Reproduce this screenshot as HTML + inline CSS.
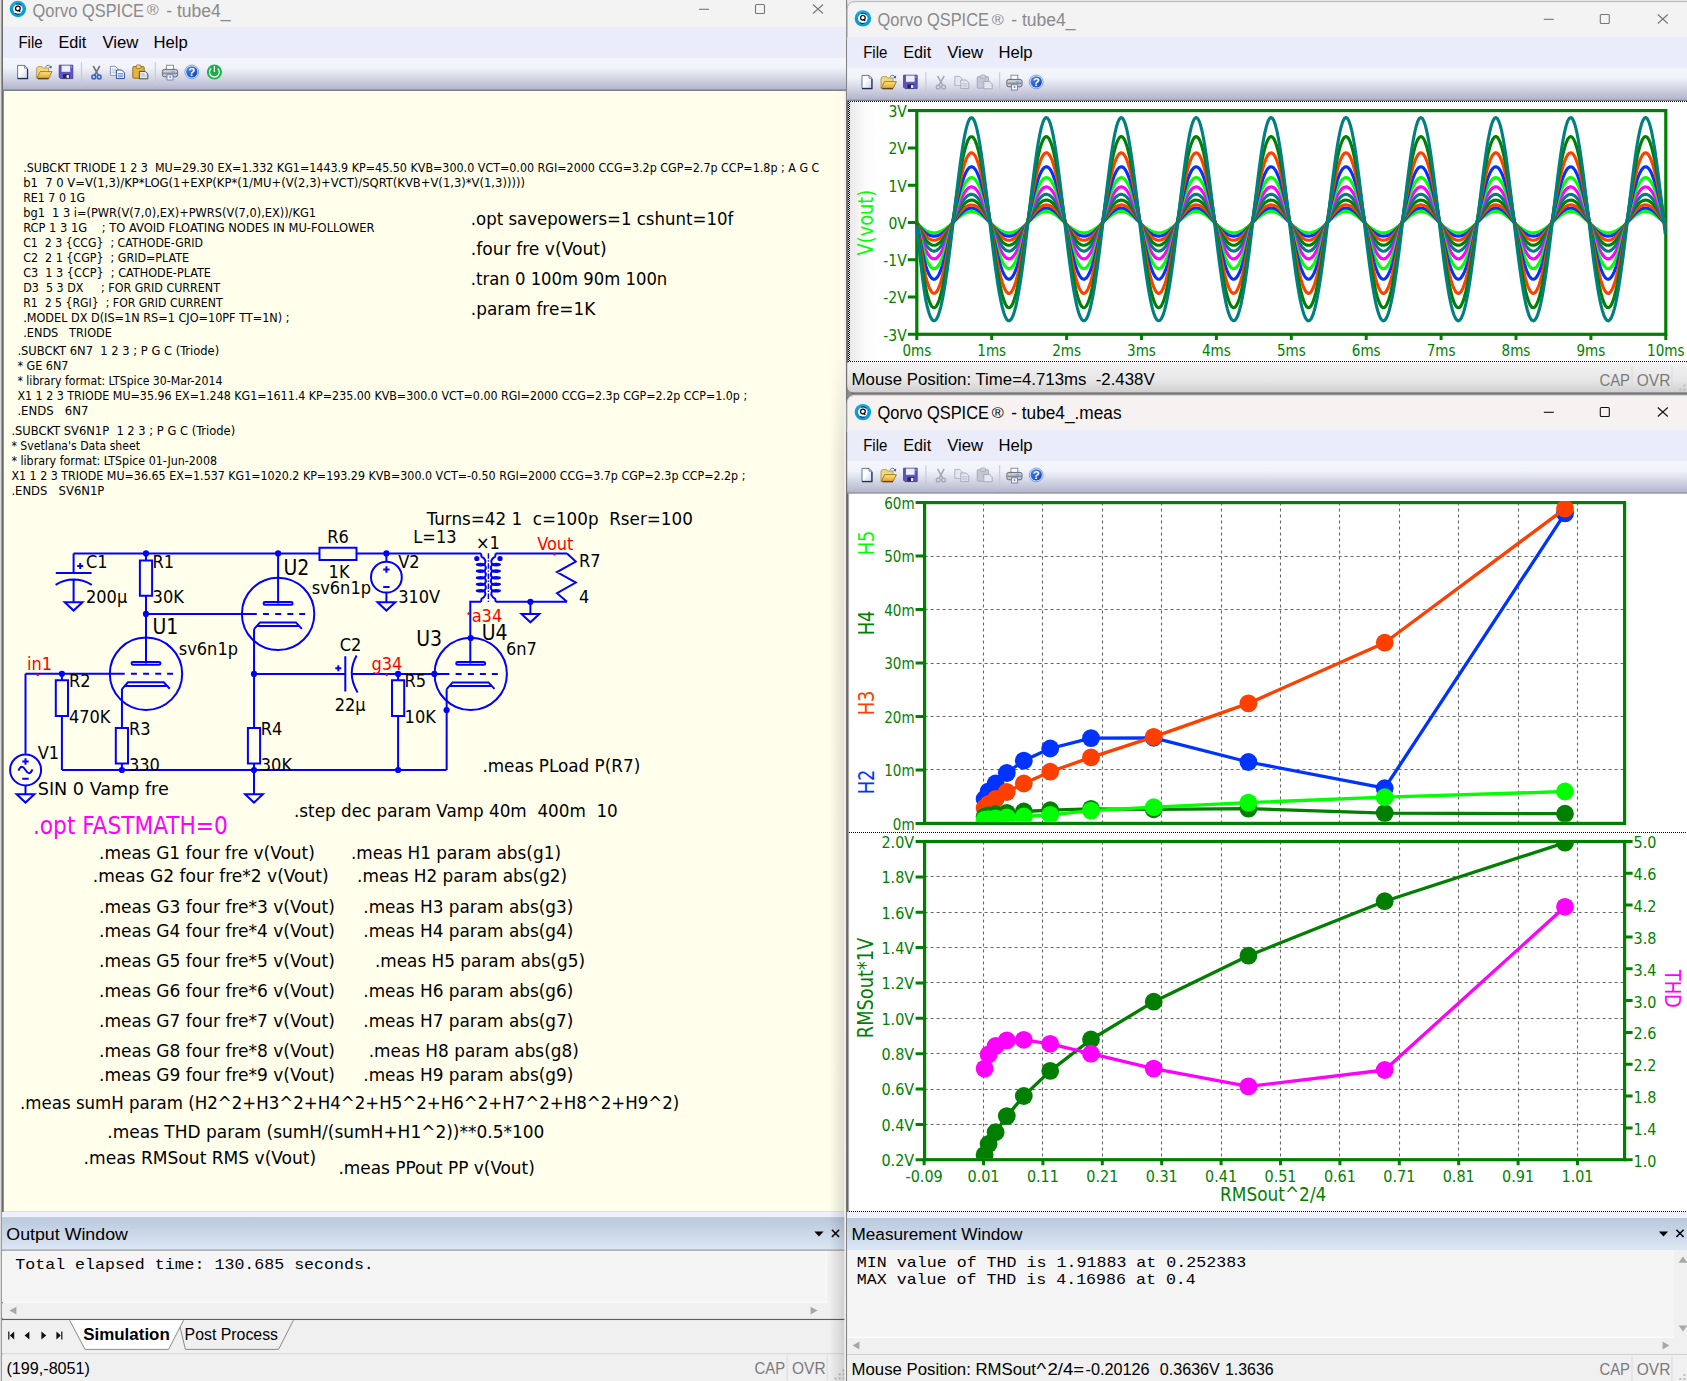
<!DOCTYPE html>
<html><head><meta charset="utf-8"><title>Qorvo QSPICE - tube4_</title>
<style>
html,body{margin:0;padding:0;background:#f0f0f0;overflow:hidden}
svg{display:block}
.t{font-family:"DejaVu Sans Condensed","DejaVu Sans","Liberation Sans",sans-serif}
.s{font-family:"Liberation Sans","DejaVu Sans",sans-serif}
.m{font-family:"Liberation Mono","DejaVu Sans Mono",monospace}
text{white-space:pre}
</style></head><body>
<svg width="1687" height="1381" viewBox="0 0 1687 1381">
<defs>
<linearGradient id="tb" x1="0" y1="0" x2="0" y2="1">
<stop offset="0" stop-color="#f4f6fc"/><stop offset="0.3" stop-color="#f1f3fa"/><stop offset="0.62" stop-color="#d5d7e6"/><stop offset="1" stop-color="#b1b3cb"/>
</linearGradient>
<linearGradient id="hd" x1="0" y1="0" x2="0" y2="1">
<stop offset="0" stop-color="#bac8dc"/><stop offset="1" stop-color="#dce7f5"/>
</linearGradient>
<linearGradient id="sb" x1="0" y1="0" x2="0" y2="1">
<stop offset="0" stop-color="#f2f2f2"/><stop offset="0.6" stop-color="#e6e6e6"/><stop offset="1" stop-color="#cfcfcf"/>
</linearGradient>
<linearGradient id="shd" x1="0" y1="0" x2="1" y2="0">
<stop offset="0" stop-color="#000" stop-opacity="0"/><stop offset="1" stop-color="#000" stop-opacity="0.16"/>
</linearGradient>
<linearGradient id="shv" gradientUnits="userSpaceOnUse" x1="0" y1="91" x2="0" y2="1381">
<stop offset="0" stop-color="#fff" stop-opacity="0.1"/><stop offset="0.2" stop-color="#fff" stop-opacity="0.12"/><stop offset="0.28" stop-color="#fff" stop-opacity="0.7"/><stop offset="1" stop-color="#fff" stop-opacity="0.8"/>
</linearGradient>
<linearGradient id="lsh" x1="0" y1="0" x2="1" y2="0">
<stop offset="0" stop-color="#000" stop-opacity="0.085"/><stop offset="0.5" stop-color="#000" stop-opacity="0.02"/><stop offset="1" stop-color="#000" stop-opacity="0"/>
</linearGradient>
<linearGradient id="qg" x1="0" y1="0" x2="0" y2="1">
<stop offset="0" stop-color="#10aeea"/><stop offset="0.6" stop-color="#069ad8"/><stop offset="1" stop-color="#0a9fe0"/>
</linearGradient>
<linearGradient id="fold" x1="0" y1="0" x2="0" y2="1">
<stop offset="0" stop-color="#fbe48a"/><stop offset="1" stop-color="#e9a21c"/>
</linearGradient>
<linearGradient id="doc" x1="0" y1="0" x2="1" y2="1">
<stop offset="0.4" stop-color="#fff"/><stop offset="1" stop-color="#c9d2e6"/>
</linearGradient>
<linearGradient id="hlp" x1="0" y1="0" x2="1" y2="1">
<stop offset="0" stop-color="#4b8cf0"/><stop offset="1" stop-color="#0b3ab4"/>
</linearGradient>
</defs>
<rect width="1687" height="1381" fill="#f0f0f0"/>
<rect x="0" y="0" width="847" height="1381" fill="#f0f0f0"/>
<rect x="0" y="0" width="1" height="1381" fill="#dcdcdc"/><rect x="1" y="0" width="1" height="1381" fill="#9a9a9a"/><rect x="2" y="0" width="1" height="1381" fill="#6e6e6e"/>
<rect x="3" y="0" width="843" height="27" fill="#f3f3f3"/>
<rect x="3" y="27" width="843" height="31" fill="#eaecfa"/>
<rect x="3" y="58" width="843" height="32" fill="url(#tb)"/>
<rect x="2" y="89.5" width="844" height="1.5" fill="#7f7f86"/>
<rect x="4" y="91" width="841" height="1120.2" fill="#ffffec"/>
<rect x="3" y="1211.2" width="843" height="1" fill="#dcdcdc"/>
<rect x="3" y="91" width="1" height="1121" fill="#8e8e8e"/>
<circle cx="17.9" cy="9.05" r="8.2" fill="url(#qg)"/>
<circle cx="17.80" cy="9.05" r="4.75" fill="#fff"/>
<path d="M15.97,4.28 A5.15,5.15 0 0 1 21.35,5.22" stroke="#06202c" stroke-width="1.1" fill="none" opacity="0.85"/>
<path d="M14.95,13.27 A5.15,5.15 0 0 0 19.49,13.95" stroke="#06202c" stroke-width="1.1" fill="none" opacity="0.85"/>
<circle cx="17.9" cy="8.50" r="2.35" fill="none" stroke="#000" stroke-width="1.2"/>
<path d="M18.40,10.05 L20.20,11.75" stroke="#000" stroke-width="1.2"/>
<text class="s" x="32.6" y="16.6" font-size="17.6" fill="#8a8a8a" textLength="111.4" lengthAdjust="spacingAndGlyphs" xml:space="preserve">Qorvo QSPICE</text>
<text class="s" x="146.8" y="15.4" font-size="15.5" fill="#8a8a8a" textLength="12.0" lengthAdjust="spacingAndGlyphs" xml:space="preserve">®</text>
<text class="s" x="166.2" y="16.6" font-size="17.6" fill="#8a8a8a" textLength="64.4" lengthAdjust="spacingAndGlyphs" xml:space="preserve">- tube4_</text>
<path d="M813,4.5 L823,13.5 M823,4.5 L813,13.5" stroke="#777" stroke-width="1.1" fill="none"/>
<rect x="755.5" y="4.5" width="9" height="9" rx="1" fill="none" stroke="#777" stroke-width="1.1"/>
<path d="M699,9.3 H709" stroke="#777" stroke-width="1.1"/>
<text class="s" x="18.4" y="47.8" font-size="16.8" textLength="24.2" lengthAdjust="spacingAndGlyphs" xml:space="preserve">File</text>
<text class="s" x="58.4" y="47.8" font-size="16.8" textLength="28.0" lengthAdjust="spacingAndGlyphs" xml:space="preserve">Edit</text>
<text class="s" x="102.4" y="47.8" font-size="16.8" textLength="36.0" lengthAdjust="spacingAndGlyphs" xml:space="preserve">View</text>
<text class="s" x="153.6" y="47.8" font-size="16.8" textLength="34.2" lengthAdjust="spacingAndGlyphs" xml:space="preserve">Help</text>
<g transform="translate(0,0)">
<path d="M17.6,65.4 H24.6 L27.4,68.2 V78.3 H17.6 Z" fill="url(#doc)" stroke="#5a6788" stroke-width="0.9"/>
<path d="M24.6,65.4 V68.2 H27.4" fill="none" stroke="#5a6788" stroke-width="0.8"/>
<path d="M17.6,78.6 H27.6 V69" fill="none" stroke="#1d2c50" stroke-width="1.1"/>
<path d="M36.6,78 V68 L38,66.6 H42 L43.2,68 H48.6 V78 Z" fill="#f1d779" stroke="#a58a52" stroke-width="0.8"/>
<path d="M36.8,78.3 L40.2,71.6 H52 L48.8,78.3 Z" fill="url(#fold)" stroke="#8c6a1c" stroke-width="0.8"/>
<path d="M38,78.8 H48.6" stroke="#3a2a08" stroke-width="1"/>
<path d="M45.4,66.8 Q48.4,63.6 51,67.2" fill="none" stroke="#5572a8" stroke-width="1"/><path d="M51.8,65.4 L51.4,68.4 L48.8,67.4 Z" fill="#3a5a9a"/>
<path d="M59.2,65.2 H72.8 V78.6 H60.6 L59.2,77.2 Z" fill="#5d55c8" stroke="#3b3592" stroke-width="0.8"/>
<rect x="61.6" y="65.6" width="8.6" height="6.2" fill="#eef0f8"/>
<rect x="63" y="74.2" width="6.8" height="4.2" fill="#2a2a48"/><rect x="66.6" y="75" width="2.4" height="3" fill="#e4e4f0"/>
<rect x="71.2" y="66.4" width="0.9" height="1.2" fill="#d8d8ff"/>
<path d="M81.5,62.3 V85.7 M155.3,62.3 V85.7" stroke="#c9c9d2" stroke-width="1.1"/>
<path d="M93.2,65.8 L98.4,75.4 M99.8,65.8 L94.6,75.4" stroke="#6d7280" stroke-width="1.7" fill="none"/>
<circle cx="93.8" cy="77" r="1.9" fill="none" stroke="#2c5fd2" stroke-width="1.5"/><circle cx="99.2" cy="77" r="1.9" fill="none" stroke="#2c5fd2" stroke-width="1.5"/>
<path d="M110.4,66.4 H115.4 L117.6,68.6 V75.4 H110.4 Z" fill="#fff" stroke="#6a7ea6" stroke-width="0.8"/>
<path d="M111.6,69.2 H116 M111.6,71 H116 M111.6,72.8 H116" stroke="#8fb0e8" stroke-width="0.8"/>
<path d="M116.4,70 H121.6 L124.4,72.8 V78.6 H116.4 Z" fill="#fff" stroke="#2d4ea6" stroke-width="1"/>
<path d="M117.8,73.6 H123 M117.8,75.2 H123 M117.8,76.8 H123" stroke="#4c7be0" stroke-width="0.9"/>
<rect x="132.8" y="66.6" width="11.4" height="11.6" rx="1" fill="#e8b53a" stroke="#8a6414" stroke-width="0.9"/>
<rect x="136.2" y="65" width="4.8" height="3.4" rx="1" fill="#f3d88a" stroke="#8a6414" stroke-width="0.8"/>
<path d="M139.4,71.4 H145.2 L147.8,74 V78.8 H139.4 Z" fill="#e9edf5" stroke="#4a4a58" stroke-width="1"/>
<path d="M140.8,74 H144.6 M140.8,76 H146.4" stroke="#9aa4bc" stroke-width="0.8"/>
<rect x="166.6" y="65.2" width="6.8" height="5" fill="#fff" stroke="#6f7585" stroke-width="0.8"/>
<rect x="162.4" y="69.4" width="15.2" height="7.4" rx="2" fill="#c9cbd2" stroke="#5a5d68" stroke-width="0.9"/>
<rect x="163" y="72.6" width="14" height="1.6" fill="#8a8d98"/><rect x="171.2" y="71.4" width="3.6" height="1" fill="#4aa0ff"/>
<rect x="167" y="74.8" width="6" height="5.2" fill="#f4f7ff" stroke="#5f6fa8" stroke-width="0.8"/><rect x="169.4" y="76.4" width="1.4" height="1.4" fill="#3558d0"/>
<circle cx="191.8" cy="71.9" r="6.9" fill="#eaf1ff" stroke="#5d8ee0" stroke-width="0.8"/><circle cx="191.8" cy="71.9" r="5.7" fill="url(#hlp)"/>
<text class="s" x="191.8" y="76" font-size="11.5" font-weight="bold" fill="#fff" text-anchor="middle">?</text>
<circle cx="214.4" cy="72" r="7.6" fill="#00c846"/><circle cx="214.4" cy="72" r="6.2" fill="#22a94a"/>
<path d="M211.2,68.4 A4.9,4.9 0 1 0 217.6,68.4" fill="none" stroke="#fff" stroke-width="1.3"/><path d="M214.4,66 V72" stroke="#fff" stroke-width="1.3"/>
</g>
<rect x="2" y="1212" width="844" height="6" fill="#eef0fb"/>
<rect x="2" y="1217.2" width="844" height="32.799999999999955" fill="url(#hd)"/>
<text class="s" x="6.3" y="1240.0" font-size="16.8" textLength="121.6" lengthAdjust="spacingAndGlyphs" xml:space="preserve">Output Window</text>
<path d="M814.4,1231.6 H823.6 L819,1236.4 Z" fill="#000"/>
<path d="M831.9,1229.8 L839.1,1237 M839.1,1229.8 L831.9,1237" stroke="#000" stroke-width="1.5" fill="none"/>
<rect x="2" y="1249.6" width="844" height="1.2" fill="#8e8e8e"/>
<rect x="2" y="1250.8" width="844" height="51.4" fill="#f5f5f5"/>
<rect x="3" y="1302" width="823" height="1.2" fill="#fbfbfb"/>
<rect x="826" y="1251" width="1" height="52" fill="#fafafa"/>
<rect x="827" y="1251" width="19" height="68" fill="#f0f0f0"/>
<rect x="2" y="1303.2" width="844" height="15" fill="#f0f0f0"/>
<text class="m" x="15.3" y="1268.9" font-size="14.4" textLength="358.5" lengthAdjust="spacingAndGlyphs" xml:space="preserve">Total elapsed time: 130.685 seconds.</text>
<path d="M16.4,1306.8 V1314.4 L9.4,1310.6 Z M810.6,1306.8 V1314.4 L817.6,1310.6 Z" fill="#a8a8a8"/>
<rect x="2" y="1318.9" width="844" height="1.3" fill="#5e5e5e"/>
<rect x="2" y="1320.2" width="844" height="33.4" fill="#f0f0f0"/>
<g fill="#111" stroke="none"><path d="M8.2,1331.6 H9.4 V1339.4 H8.2 Z M14.2,1331.6 V1339.4 L9.8,1335.5 Z"/><path d="M29.4,1331.6 V1339.4 L24.6,1335.5 Z"/><path d="M41.4,1331.6 V1339.4 L46.2,1335.5 Z"/><path d="M56.4,1331.6 V1339.4 L60.8,1335.5 Z M61.2,1331.6 H62.4 V1339.4 H61.2 Z"/></g>
<path d="M178.4,1320.2 L185.4,1349.4 H278.6 L293.4,1320.2" fill="#f0f0f0" stroke="#8a8a8a" stroke-width="1"/>
<path d="M69.6,1320.2 L85,1349.4 H168.6 L183.6,1320.2 Z" fill="#fff"/>
<path d="M69.6,1320.2 L85,1349.4 H168.6 L183.6,1320.2" fill="none" stroke="#8a8a8a" stroke-width="1"/>
<text class="s" x="83.2" y="1340.0" font-size="16.8" textLength="86.6" lengthAdjust="spacingAndGlyphs" font-weight="bold" xml:space="preserve">Simulation</text>
<text class="s" x="184.6" y="1340.0" font-size="16.8" textLength="93.4" lengthAdjust="spacingAndGlyphs" xml:space="preserve">Post Process</text>
<rect x="2" y="1353.4" width="844" height="1" fill="#d0d0d0"/>
<rect x="2" y="1354.4" width="844" height="26.6" fill="#f0f0f0"/>
<text class="s" x="6.4" y="1374.0" font-size="16.8" textLength="83.6" lengthAdjust="spacingAndGlyphs" xml:space="preserve">(199,-8051)</text>
<text class="s" x="754.6" y="1374.4" font-size="16.8" fill="#7a7a7a" textLength="30.6" lengthAdjust="spacingAndGlyphs" xml:space="preserve">CAP</text>
<text class="s" x="792.0" y="1374.4" font-size="16.8" fill="#7a7a7a" textLength="33.6" lengthAdjust="spacingAndGlyphs" xml:space="preserve">OVR</text>
<path d="M787.2,1355.4 V1380.4 M827.2,1355.4 V1380.4" stroke="#d9d9d9" stroke-width="1"/>
<g fill="#bdbdbd"><rect x="842.6" y="1377.4" width="2" height="2"/><rect x="838.6" y="1377.4" width="2" height="2"/><rect x="834.6" y="1377.4" width="2" height="2"/><rect x="842.6" y="1373.4" width="2" height="2"/><rect x="838.6" y="1373.4" width="2" height="2"/><rect x="842.6" y="1369.4" width="2" height="2"/></g>
<mask id="shm"><rect x="829" y="91" width="16" height="1290" fill="url(#shv)"/></mask>
<rect x="829" y="91" width="15.4" height="1290" fill="url(#shd)" mask="url(#shm)"/>
<rect x="844.4" y="91" width="1.8" height="1290" fill="#ececec"/>
<rect x="846.1" y="0" width="1.2" height="1381" fill="#777"/>
<rect x="846.4" y="100" width="1.8" height="1112" fill="#6a6a6a"/>
<rect x="847.2" y="0" width="839.8" height="3" fill="#e6e6e6"/>
<path d="M847.2,40 V9.6 Q847.2,1.6 855.2,1.6 H1687 V40 Z" fill="#f3f3f3"/>
<path d="M847.2,40 V9.6 Q847.2,1.6 855.2,1.6 H1687" fill="none" stroke="#b4b4b4" stroke-width="1"/>
<rect x="847.2" y="37" width="839.8" height="31" fill="#eaecfa"/>
<rect x="847.2" y="68" width="839.8" height="32" fill="url(#tb)"/>
<rect x="847.2" y="99.7" width="839.8" height="1.3" fill="#85858c"/>
<rect x="848.6" y="101" width="839.8" height="261.2" fill="#fff"/>
<path d="M848,101.5 H1687 M848,361.5 H1687" stroke="#000" stroke-width="1" stroke-dasharray="1 1"/>
<path d="M848.5,101 V362 M849.5,102 V362" stroke="#000" stroke-width="1" stroke-dasharray="1 1"/>
<rect x="847.2" y="380" width="839.8" height="24" fill="#8c8c8c"/>
<path d="M847.2,362.8 H1687 V392.6 H854.2 Q847.2,392.6 847.2,385.6 Z" fill="url(#sb)"/>
<rect x="851.2" y="392.6" width="839.8" height="1.2" fill="#6e6e6e"/>
<circle cx="862.9" cy="18.4" r="8.2" fill="url(#qg)"/>
<circle cx="862.80" cy="18.4" r="4.75" fill="#fff"/>
<path d="M860.97,13.63 A5.15,5.15 0 0 1 866.35,14.57" stroke="#06202c" stroke-width="1.1" fill="none" opacity="0.85"/>
<path d="M859.95,22.62 A5.15,5.15 0 0 0 864.49,23.30" stroke="#06202c" stroke-width="1.1" fill="none" opacity="0.85"/>
<circle cx="862.9" cy="17.85" r="2.35" fill="none" stroke="#000" stroke-width="1.2"/>
<path d="M863.40,19.40 L865.20,21.10" stroke="#000" stroke-width="1.2"/>
<text class="s" x="877.6" y="26.0" font-size="17.6" fill="#8a8a8a" textLength="111.4" lengthAdjust="spacingAndGlyphs" xml:space="preserve">Qorvo QSPICE</text>
<text class="s" x="991.8" y="24.8" font-size="15.5" fill="#8a8a8a" textLength="12.0" lengthAdjust="spacingAndGlyphs" xml:space="preserve">®</text>
<text class="s" x="1011.2" y="26.0" font-size="17.6" fill="#8a8a8a" textLength="64.4" lengthAdjust="spacingAndGlyphs" xml:space="preserve">- tube4_</text>
<path d="M1657.8,14.5 L1667.8,23.5 M1667.8,14.5 L1657.8,23.5" stroke="#777" stroke-width="1.1" fill="none"/>
<rect x="1600.3" y="14.5" width="9" height="9" rx="1" fill="none" stroke="#777" stroke-width="1.1"/>
<path d="M1543.8,19.3 H1553.8" stroke="#777" stroke-width="1.1"/>
<text class="s" x="863.2" y="57.5" font-size="16.8" textLength="24.2" lengthAdjust="spacingAndGlyphs" xml:space="preserve">File</text>
<text class="s" x="903.2" y="57.5" font-size="16.8" textLength="28.0" lengthAdjust="spacingAndGlyphs" xml:space="preserve">Edit</text>
<text class="s" x="947.2" y="57.5" font-size="16.8" textLength="36.0" lengthAdjust="spacingAndGlyphs" xml:space="preserve">View</text>
<text class="s" x="998.4" y="57.5" font-size="16.8" textLength="34.2" lengthAdjust="spacingAndGlyphs" xml:space="preserve">Help</text>
<g transform="translate(844.4,10)">
<path d="M17.6,65.4 H24.6 L27.4,68.2 V78.3 H17.6 Z" fill="url(#doc)" stroke="#5a6788" stroke-width="0.9"/>
<path d="M24.6,65.4 V68.2 H27.4" fill="none" stroke="#5a6788" stroke-width="0.8"/>
<path d="M17.6,78.6 H27.6 V69" fill="none" stroke="#1d2c50" stroke-width="1.1"/>
<path d="M36.6,78 V68 L38,66.6 H42 L43.2,68 H48.6 V78 Z" fill="#f1d779" stroke="#a58a52" stroke-width="0.8"/>
<path d="M36.8,78.3 L40.2,71.6 H52 L48.8,78.3 Z" fill="url(#fold)" stroke="#8c6a1c" stroke-width="0.8"/>
<path d="M38,78.8 H48.6" stroke="#3a2a08" stroke-width="1"/>
<path d="M45.4,66.8 Q48.4,63.6 51,67.2" fill="none" stroke="#5572a8" stroke-width="1"/><path d="M51.8,65.4 L51.4,68.4 L48.8,67.4 Z" fill="#3a5a9a"/>
<path d="M59.2,65.2 H72.8 V78.6 H60.6 L59.2,77.2 Z" fill="#5d55c8" stroke="#3b3592" stroke-width="0.8"/>
<rect x="61.6" y="65.6" width="8.6" height="6.2" fill="#eef0f8"/>
<rect x="63" y="74.2" width="6.8" height="4.2" fill="#2a2a48"/><rect x="66.6" y="75" width="2.4" height="3" fill="#e4e4f0"/>
<rect x="71.2" y="66.4" width="0.9" height="1.2" fill="#d8d8ff"/>
<path d="M81.5,62.3 V85.7 M155.3,62.3 V85.7" stroke="#c9c9d2" stroke-width="1.1"/>
<path d="M93.2,65.8 L98.4,75.4 M99.8,65.8 L94.6,75.4" stroke="#a3a6b8" stroke-width="1.5" fill="none"/>
<circle cx="93.8" cy="77" r="1.9" fill="none" stroke="#a3a6b8" stroke-width="1.3"/><circle cx="99.2" cy="77" r="1.9" fill="none" stroke="#a3a6b8" stroke-width="1.3"/>
<path d="M110.4,66.4 H115.4 L117.6,68.6 V75.4 H110.4 Z" fill="#e4e6f0" stroke="#a3a6b8" stroke-width="0.8"/>
<path d="M116.4,70 H121.6 L124.4,72.8 V78.6 H116.4 Z" fill="#e4e6f0" stroke="#a3a6b8" stroke-width="0.9"/>
<path d="M117.8,73.6 H123 M117.8,75.2 H123 M117.8,76.8 H123" stroke="#b9bccb" stroke-width="0.8"/>
<rect x="132.8" y="66.6" width="11.4" height="11.6" rx="1" fill="#c4c6d4" stroke="#a3a6b8" stroke-width="0.9"/>
<rect x="136.2" y="65" width="4.8" height="3.4" rx="1" fill="#d0d2de" stroke="#a3a6b8" stroke-width="0.8"/>
<path d="M139.4,71.4 H145.2 L147.8,74 V78.8 H139.4 Z" fill="#e4e6f0" stroke="#a3a6b8" stroke-width="0.9"/>
<rect x="166.6" y="65.2" width="6.8" height="5" fill="#fff" stroke="#6f7585" stroke-width="0.8"/>
<rect x="162.4" y="69.4" width="15.2" height="7.4" rx="2" fill="#c9cbd2" stroke="#5a5d68" stroke-width="0.9"/>
<rect x="163" y="72.6" width="14" height="1.6" fill="#8a8d98"/><rect x="171.2" y="71.4" width="3.6" height="1" fill="#4aa0ff"/>
<rect x="167" y="74.8" width="6" height="5.2" fill="#f4f7ff" stroke="#5f6fa8" stroke-width="0.8"/><rect x="169.4" y="76.4" width="1.4" height="1.4" fill="#3558d0"/>
<circle cx="191.8" cy="71.9" r="6.9" fill="#eaf1ff" stroke="#5d8ee0" stroke-width="0.8"/><circle cx="191.8" cy="71.9" r="5.7" fill="url(#hlp)"/>
<text class="s" x="191.8" y="76" font-size="11.5" font-weight="bold" fill="#fff" text-anchor="middle">?</text>
</g>
<text class="s" x="851.6" y="385.4" font-size="16.8" textLength="303.0" lengthAdjust="spacingAndGlyphs" xml:space="preserve">Mouse Position: Time=4.713ms  -2.438V</text>
<text class="s" x="1599.4" y="385.6" font-size="16.8" fill="#7a7a7a" textLength="30.6" lengthAdjust="spacingAndGlyphs" xml:space="preserve">CAP</text>
<text class="s" x="1636.8" y="385.6" font-size="16.8" fill="#7a7a7a" textLength="33.6" lengthAdjust="spacingAndGlyphs" xml:space="preserve">OVR</text>
<path d="M1632.0,366.6 V391.6 M1672.0,366.6 V391.6" stroke="#d9d9d9" stroke-width="1"/>
<g fill="#bdbdbd"><rect x="1687.4" y="388.6" width="2" height="2"/><rect x="1683.4" y="388.6" width="2" height="2"/><rect x="1679.4" y="388.6" width="2" height="2"/><rect x="1687.4" y="384.6" width="2" height="2"/><rect x="1683.4" y="384.6" width="2" height="2"/><rect x="1687.4" y="380.6" width="2" height="2"/></g>
<path d="M847.2,431.4 V403.4 Q847.2,395.4 855.2,395.4 H1687 V431.4 Z" fill="#f6f2f1"/>
<path d="M847.2,431.4 V403.4 Q847.2,395.4 855.2,395.4 H1687" fill="none" stroke="#d8d4d4" stroke-width="1"/>
<rect x="847.2" y="430" width="839.8" height="31" fill="#eaecfa"/>
<rect x="847.2" y="461" width="839.8" height="32" fill="url(#tb)"/>
<rect x="847.2" y="492.4" width="839.8" height="1.4" fill="#8c8c96"/>
<rect x="848.6" y="493.8" width="839.8" height="718" fill="#fff"/>
<rect x="848.2" y="493.8" width="0.9" height="718" fill="#9a9a9a"/>
<path d="M849,832.5 H1687 M849,1211.5 H1687" stroke="#000" stroke-width="1" stroke-dasharray="1 1"/>
<circle cx="862.9" cy="412.1" r="8.2" fill="url(#qg)"/>
<circle cx="862.80" cy="412.1" r="4.75" fill="#fff"/>
<path d="M860.97,407.33 A5.15,5.15 0 0 1 866.35,408.27" stroke="#06202c" stroke-width="1.1" fill="none" opacity="0.85"/>
<path d="M859.95,416.32 A5.15,5.15 0 0 0 864.49,417.00" stroke="#06202c" stroke-width="1.1" fill="none" opacity="0.85"/>
<circle cx="862.9" cy="411.55" r="2.35" fill="none" stroke="#000" stroke-width="1.2"/>
<path d="M863.40,413.10 L865.20,414.80" stroke="#000" stroke-width="1.2"/>
<text class="s" x="877.6" y="419.2" font-size="17.6" textLength="111.4" lengthAdjust="spacingAndGlyphs" xml:space="preserve">Qorvo QSPICE</text>
<text class="s" x="991.8" y="418.0" font-size="15.5" textLength="12.0" lengthAdjust="spacingAndGlyphs" xml:space="preserve">®</text>
<text class="s" x="1011.2" y="419.2" font-size="17.6" textLength="110.4" lengthAdjust="spacingAndGlyphs" xml:space="preserve">- tube4_.meas</text>
<path d="M1657.8,407.5 L1667.8,416.5 M1667.8,407.5 L1657.8,416.5" stroke="#111" stroke-width="1.1" fill="none"/>
<rect x="1600.3" y="407.5" width="9" height="9" rx="1" fill="none" stroke="#111" stroke-width="1.1"/>
<path d="M1543.8,412.3 H1553.8" stroke="#111" stroke-width="1.1"/>
<text class="s" x="863.2" y="450.6" font-size="16.8" textLength="24.2" lengthAdjust="spacingAndGlyphs" xml:space="preserve">File</text>
<text class="s" x="903.2" y="450.6" font-size="16.8" textLength="28.0" lengthAdjust="spacingAndGlyphs" xml:space="preserve">Edit</text>
<text class="s" x="947.2" y="450.6" font-size="16.8" textLength="36.0" lengthAdjust="spacingAndGlyphs" xml:space="preserve">View</text>
<text class="s" x="998.4" y="450.6" font-size="16.8" textLength="34.2" lengthAdjust="spacingAndGlyphs" xml:space="preserve">Help</text>
<g transform="translate(844.4,403)">
<path d="M17.6,65.4 H24.6 L27.4,68.2 V78.3 H17.6 Z" fill="url(#doc)" stroke="#5a6788" stroke-width="0.9"/>
<path d="M24.6,65.4 V68.2 H27.4" fill="none" stroke="#5a6788" stroke-width="0.8"/>
<path d="M17.6,78.6 H27.6 V69" fill="none" stroke="#1d2c50" stroke-width="1.1"/>
<path d="M36.6,78 V68 L38,66.6 H42 L43.2,68 H48.6 V78 Z" fill="#f1d779" stroke="#a58a52" stroke-width="0.8"/>
<path d="M36.8,78.3 L40.2,71.6 H52 L48.8,78.3 Z" fill="url(#fold)" stroke="#8c6a1c" stroke-width="0.8"/>
<path d="M38,78.8 H48.6" stroke="#3a2a08" stroke-width="1"/>
<path d="M45.4,66.8 Q48.4,63.6 51,67.2" fill="none" stroke="#5572a8" stroke-width="1"/><path d="M51.8,65.4 L51.4,68.4 L48.8,67.4 Z" fill="#3a5a9a"/>
<path d="M59.2,65.2 H72.8 V78.6 H60.6 L59.2,77.2 Z" fill="#5d55c8" stroke="#3b3592" stroke-width="0.8"/>
<rect x="61.6" y="65.6" width="8.6" height="6.2" fill="#eef0f8"/>
<rect x="63" y="74.2" width="6.8" height="4.2" fill="#2a2a48"/><rect x="66.6" y="75" width="2.4" height="3" fill="#e4e4f0"/>
<rect x="71.2" y="66.4" width="0.9" height="1.2" fill="#d8d8ff"/>
<path d="M81.5,62.3 V85.7 M155.3,62.3 V85.7" stroke="#c9c9d2" stroke-width="1.1"/>
<path d="M93.2,65.8 L98.4,75.4 M99.8,65.8 L94.6,75.4" stroke="#a3a6b8" stroke-width="1.5" fill="none"/>
<circle cx="93.8" cy="77" r="1.9" fill="none" stroke="#a3a6b8" stroke-width="1.3"/><circle cx="99.2" cy="77" r="1.9" fill="none" stroke="#a3a6b8" stroke-width="1.3"/>
<path d="M110.4,66.4 H115.4 L117.6,68.6 V75.4 H110.4 Z" fill="#e4e6f0" stroke="#a3a6b8" stroke-width="0.8"/>
<path d="M116.4,70 H121.6 L124.4,72.8 V78.6 H116.4 Z" fill="#e4e6f0" stroke="#a3a6b8" stroke-width="0.9"/>
<path d="M117.8,73.6 H123 M117.8,75.2 H123 M117.8,76.8 H123" stroke="#b9bccb" stroke-width="0.8"/>
<rect x="132.8" y="66.6" width="11.4" height="11.6" rx="1" fill="#c4c6d4" stroke="#a3a6b8" stroke-width="0.9"/>
<rect x="136.2" y="65" width="4.8" height="3.4" rx="1" fill="#d0d2de" stroke="#a3a6b8" stroke-width="0.8"/>
<path d="M139.4,71.4 H145.2 L147.8,74 V78.8 H139.4 Z" fill="#e4e6f0" stroke="#a3a6b8" stroke-width="0.9"/>
<rect x="166.6" y="65.2" width="6.8" height="5" fill="#fff" stroke="#6f7585" stroke-width="0.8"/>
<rect x="162.4" y="69.4" width="15.2" height="7.4" rx="2" fill="#c9cbd2" stroke="#5a5d68" stroke-width="0.9"/>
<rect x="163" y="72.6" width="14" height="1.6" fill="#8a8d98"/><rect x="171.2" y="71.4" width="3.6" height="1" fill="#4aa0ff"/>
<rect x="167" y="74.8" width="6" height="5.2" fill="#f4f7ff" stroke="#5f6fa8" stroke-width="0.8"/><rect x="169.4" y="76.4" width="1.4" height="1.4" fill="#3558d0"/>
<circle cx="191.8" cy="71.9" r="6.9" fill="#eaf1ff" stroke="#5d8ee0" stroke-width="0.8"/><circle cx="191.8" cy="71.9" r="5.7" fill="url(#hlp)"/>
<text class="s" x="191.8" y="76" font-size="11.5" font-weight="bold" fill="#fff" text-anchor="middle">?</text>
</g>
<rect x="847.2" y="1212" width="843.3" height="6" fill="#eef0fb"/>
<rect x="847.2" y="1218" width="843.3" height="32" fill="url(#hd)"/>
<text class="s" x="851.5" y="1240.0" font-size="16.8" textLength="170.8" lengthAdjust="spacingAndGlyphs" xml:space="preserve">Measurement Window</text>
<path d="M1658.9,1231.6 H1668.1 L1663.5,1236.4 Z" fill="#000"/>
<path d="M1676.4,1229.8 L1683.6,1237 M1683.6,1229.8 L1676.4,1237" stroke="#000" stroke-width="1.5" fill="none"/>
<rect x="847.2" y="1250" width="839.8" height="87" fill="#f5f5f5"/>
<rect x="847.2" y="1336.8" width="826" height="1.2" fill="#fcfcfc"/>
<rect x="1674" y="1250" width="13" height="87" fill="#f0f0f0"/>
<rect x="847.2" y="1338" width="839.8" height="16" fill="#f0f0f0"/>
<text class="m" x="856.8" y="1267.3" font-size="14.4" textLength="389.4" lengthAdjust="spacingAndGlyphs" xml:space="preserve">MIN value of THD is 1.91883 at 0.252383</text>
<text class="m" x="856.8" y="1284.4" font-size="14.4" textLength="339.0" lengthAdjust="spacingAndGlyphs" xml:space="preserve">MAX value of THD is 4.16986 at 0.4</text>
<path d="M859.4,1341.4 V1349.4 L852.6,1345.4 Z M1662.6,1341.4 V1349.4 L1669.4,1345.4 Z" fill="#a8a8a8"/>
<path d="M1678.6,1262.8 H1687.4 L1683,1256.6 Z M1678.6,1325.4 H1687.4 L1683,1331.6 Z" fill="#a8a8a8"/>
<rect x="847.2" y="1354" width="839.8" height="1" fill="#d0d0d0"/>
<rect x="847.2" y="1355" width="839.8" height="26" fill="#f0f0f0"/>
<text class="s" x="851.6" y="1374.8" font-size="16.8" textLength="184.4" lengthAdjust="spacingAndGlyphs" xml:space="preserve">Mouse Position: RMSout</text>
<text class="s" x="1036.6" y="1374.8" font-size="16.8" textLength="9.6" lengthAdjust="spacingAndGlyphs" xml:space="preserve">^</text>
<text class="s" x="1047.4" y="1374.8" font-size="16.8" textLength="36.8" lengthAdjust="spacingAndGlyphs" xml:space="preserve">2/4=</text>
<text class="s" x="1085.6" y="1374.8" font-size="16.8" textLength="64.0" lengthAdjust="spacingAndGlyphs" xml:space="preserve">-0.20126</text>
<text class="s" x="1159.8" y="1374.8" font-size="16.8" textLength="60.0" lengthAdjust="spacingAndGlyphs" xml:space="preserve">0.3636V</text>
<text class="s" x="1225.0" y="1374.8" font-size="16.8" textLength="48.6" lengthAdjust="spacingAndGlyphs" xml:space="preserve">1.3636</text>
<text class="s" x="1599.4" y="1375.0" font-size="16.8" fill="#7a7a7a" textLength="30.6" lengthAdjust="spacingAndGlyphs" xml:space="preserve">CAP</text>
<text class="s" x="1636.8" y="1375.0" font-size="16.8" fill="#7a7a7a" textLength="33.6" lengthAdjust="spacingAndGlyphs" xml:space="preserve">OVR</text>
<path d="M1632.0,1356 V1381 M1672.0,1356 V1381" stroke="#d9d9d9" stroke-width="1"/>
<g fill="#bdbdbd"><rect x="1687.4" y="1378" width="2" height="2"/><rect x="1683.4" y="1378" width="2" height="2"/><rect x="1679.4" y="1378" width="2" height="2"/><rect x="1687.4" y="1374" width="2" height="2"/><rect x="1683.4" y="1374" width="2" height="2"/><rect x="1687.4" y="1370" width="2" height="2"/></g>
<text class="t" x="23.2" y="172.2" font-size="12" textLength="796.2" lengthAdjust="spacingAndGlyphs" xml:space="preserve">.SUBCKT TRIODE 1 2 3  MU=29.30 EX=1.332 KG1=1443.9 KP=45.50 KVB=300.0 VCT=0.00 RGI=2000 CCG=3.2p CGP=2.7p CCP=1.8p ; A G C</text>
<text class="t" x="23.2" y="187.2" font-size="12" textLength="501.8" lengthAdjust="spacingAndGlyphs" xml:space="preserve">b1  7 0 V=V(1,3)/KP*LOG(1+EXP(KP*(1/MU+(V(2,3)+VCT)/SQRT(KVB+V(1,3)*V(1,3)))))</text>
<text class="t" x="23.2" y="202.2" font-size="12" textLength="61.8" lengthAdjust="spacingAndGlyphs" xml:space="preserve">RE1 7 0 1G</text>
<text class="t" x="23.2" y="217.2" font-size="12" textLength="292.8" lengthAdjust="spacingAndGlyphs" xml:space="preserve">bg1  1 3 i=(PWR(V(7,0),EX)+PWRS(V(7,0),EX))/KG1</text>
<text class="t" x="23.2" y="232.2" font-size="12" textLength="351.4" lengthAdjust="spacingAndGlyphs" xml:space="preserve">RCP 1 3 1G    ; TO AVOID FLOATING NODES IN MU-FOLLOWER</text>
<text class="t" x="23.2" y="247.2" font-size="12" textLength="179.8" lengthAdjust="spacingAndGlyphs" xml:space="preserve">C1  2 3 {CCG}  ; CATHODE-GRID</text>
<text class="t" x="23.2" y="262.2" font-size="12" textLength="165.8" lengthAdjust="spacingAndGlyphs" xml:space="preserve">C2  2 1 {CGP}  ; GRID=PLATE</text>
<text class="t" x="23.2" y="277.2" font-size="12" textLength="187.8" lengthAdjust="spacingAndGlyphs" xml:space="preserve">C3  1 3 {CCP}  ; CATHODE-PLATE</text>
<text class="t" x="23.2" y="292.2" font-size="12" textLength="196.8" lengthAdjust="spacingAndGlyphs" xml:space="preserve">D3  5 3 DX     ; FOR GRID CURRENT</text>
<text class="t" x="23.2" y="307.2" font-size="12" textLength="199.4" lengthAdjust="spacingAndGlyphs" xml:space="preserve">R1  2 5 {RGI}  ; FOR GRID CURRENT</text>
<text class="t" x="23.2" y="322.2" font-size="12" textLength="266.4" lengthAdjust="spacingAndGlyphs" xml:space="preserve">.MODEL DX D(IS=1N RS=1 CJO=10PF TT=1N) ;</text>
<text class="t" x="23.2" y="337.2" font-size="12" textLength="88.8" lengthAdjust="spacingAndGlyphs" xml:space="preserve">.ENDS   TRIODE</text>
<text class="t" x="17.4" y="355.2" font-size="12" textLength="201.8" lengthAdjust="spacingAndGlyphs" xml:space="preserve">.SUBCKT 6N7  1 2 3 ; P G C (Triode)</text>
<text class="t" x="17.4" y="370.2" font-size="12" textLength="51.0" lengthAdjust="spacingAndGlyphs" xml:space="preserve">* GE 6N7</text>
<text class="t" x="17.4" y="385.2" font-size="12" textLength="205.0" lengthAdjust="spacingAndGlyphs" xml:space="preserve">* library format: LTSpice 30-Mar-2014</text>
<text class="t" x="17.4" y="400.2" font-size="12" textLength="729.8" lengthAdjust="spacingAndGlyphs" xml:space="preserve">X1 1 2 3 TRIODE MU=35.96 EX=1.248 KG1=1611.4 KP=235.00 KVB=300.0 VCT=0.00 RGI=2000 CCG=2.3p CGP=2.2p CCP=1.0p ;</text>
<text class="t" x="17.4" y="415.2" font-size="12" textLength="71.0" lengthAdjust="spacingAndGlyphs" xml:space="preserve">.ENDS   6N7</text>
<text class="t" x="11.4" y="435.1" font-size="12" textLength="223.8" lengthAdjust="spacingAndGlyphs" xml:space="preserve">.SUBCKT SV6N1P  1 2 3 ; P G C (Triode)</text>
<text class="t" x="11.4" y="450.1" font-size="12" textLength="128.6" lengthAdjust="spacingAndGlyphs" xml:space="preserve">* Svetlana's Data sheet</text>
<text class="t" x="11.4" y="465.1" font-size="12" textLength="205.6" lengthAdjust="spacingAndGlyphs" xml:space="preserve">* library format: LTSpice 01-Jun-2008</text>
<text class="t" x="11.4" y="480.1" font-size="12" textLength="734.0" lengthAdjust="spacingAndGlyphs" xml:space="preserve">X1 1 2 3 TRIODE MU=36.65 EX=1.537 KG1=1020.2 KP=193.29 KVB=300.0 VCT=-0.50 RGI=2000 CCG=3.7p CGP=2.3p CCP=2.2p ;</text>
<text class="t" x="11.4" y="495.1" font-size="12" textLength="93.0" lengthAdjust="spacingAndGlyphs" xml:space="preserve">.ENDS   SV6N1P</text>
<text class="t" x="470.8" y="225.1" font-size="18.5" textLength="262.5" lengthAdjust="spacingAndGlyphs" xml:space="preserve">.opt savepowers=1 cshunt=10f</text>
<text class="t" x="470.8" y="255.1" font-size="18.5" textLength="135.9" lengthAdjust="spacingAndGlyphs" xml:space="preserve">.four fre v(Vout)</text>
<text class="t" x="470.8" y="285.2" font-size="18.5" textLength="196.5" lengthAdjust="spacingAndGlyphs" xml:space="preserve">.tran 0 100m 90m 100n</text>
<text class="t" x="470.8" y="315.1" font-size="18.5" textLength="124.5" lengthAdjust="spacingAndGlyphs" xml:space="preserve">.param fre=1K</text>
<circle cx="146" cy="673.8" r="36.2" fill="none" stroke="#0000ff" stroke-width="2"/>
<rect x="131.5" y="661.9" width="29" height="2.8" rx="1.4" fill="none" stroke="#0000ff" stroke-width="2"/>
<circle cx="25.6" cy="769.9" r="15.5" fill="none" stroke="#0000ff" stroke-width="2"/>
<circle cx="278.1" cy="613.9" r="36.2" fill="none" stroke="#0000ff" stroke-width="2"/>
<rect x="263.6" y="602.0" width="29" height="2.8" rx="1.4" fill="none" stroke="#0000ff" stroke-width="2"/>
<circle cx="470.7" cy="673.9" r="36.2" fill="none" stroke="#0000ff" stroke-width="2"/>
<rect x="456.2" y="662.0" width="29" height="2.8" rx="1.4" fill="none" stroke="#0000ff" stroke-width="2"/>
<circle cx="386.4" cy="577.2" r="15.4" fill="none" stroke="#0000ff" stroke-width="2"/>
<ellipse cx="480.6" cy="564.6" rx="3.9" ry="0.8" fill="none" stroke="#0000ff" stroke-width="2"/>
<ellipse cx="480.6" cy="571.1" rx="3.9" ry="0.8" fill="none" stroke="#0000ff" stroke-width="2"/>
<ellipse cx="480.6" cy="577.7" rx="3.9" ry="0.8" fill="none" stroke="#0000ff" stroke-width="2"/>
<ellipse cx="480.6" cy="584.2" rx="3.9" ry="0.8" fill="none" stroke="#0000ff" stroke-width="2"/>
<ellipse cx="480.6" cy="590.7" rx="3.9" ry="0.8" fill="none" stroke="#0000ff" stroke-width="2"/>
<ellipse cx="496.1" cy="564.6" rx="3.9" ry="0.8" fill="none" stroke="#0000ff" stroke-width="2"/>
<ellipse cx="496.1" cy="571.1" rx="3.9" ry="0.8" fill="none" stroke="#0000ff" stroke-width="2"/>
<ellipse cx="496.1" cy="577.7" rx="3.9" ry="0.8" fill="none" stroke="#0000ff" stroke-width="2"/>
<ellipse cx="496.1" cy="584.2" rx="3.9" ry="0.8" fill="none" stroke="#0000ff" stroke-width="2"/>
<ellipse cx="496.1" cy="590.7" rx="3.9" ry="0.8" fill="none" stroke="#0000ff" stroke-width="2"/>
<path d="M488.4,553.2 V602.4" stroke="#0000ff" stroke-width="1.4" stroke-dasharray="5.5 1.6 1.4 1.6" fill="none"/>
<circle cx="476.8" cy="558.5" r="2.6" fill="#0000ff"/>
<circle cx="500" cy="558.5" r="2.6" fill="#0000ff"/>
<path d="M73.6,553.4 H319.5 M356.5,553.4 H481 M73.6,553.4 V573 M55.8,573 H91.6 M55.6,584.8 Q73.6,574.4 91.8,584.8 M73.6,579.6 V602.2 M77.2,566 H83.2 M80.2,563 V569 M64.69999999999999,602.2 H82.5 L73.6,610.6 Z M146,553.4 V560.5 M146,595.7 V663.4 M139.9,560.5 H152.1 V595.7 H139.9 Z M109.8,673.8 H124.7 M130.9,673.8 h6 M143.1,673.8 h6 M155.2,673.8 h6 M167.1,673.8 h6 M121.95,689.0999999999999 L127.95,682.3 H163.75 L169.75,688.8 M124.6,686.0 H166.5 M25.5,673.8 H109.8 M25.5,673.8 V753.8 M121.95,689.1 V728 M115.80000000000001,728 H128.0 V763.5 H115.80000000000001 Z M121.9,763.5 V770.0 M61.9,673.8 V680.3 M61.9,716 V770.0 M55.8,680.3 H68.0 V716 H55.8 Z M61.9,770.0 H446.5 M22.3,761.5 H28.7 M25.5,758.3 V764.7 M22.3,778.8 H28.7 M18.5,770.6 Q21.5,763.4 25.5,770 T32.5,769.4 M25.5,786.1 V794.2 M16.6,794.2 H34.4 L25.5,802.6 Z M241.90000000000003,613.9 H256.8 M263.0,613.9 h6 M275.20000000000005,613.9 h6 M287.3,613.9 h6 M299.20000000000005,613.9 h6 M254.05,629.1999999999999 L260.05,622.4 H295.85 L301.85,628.9 M256.70000000000005,626.1 H298.6 M278.1,553.4 V603.4 M146,613.9 H241.9 M254.05,629.2 V728 M247.9,728 H260.1 V763.5 H247.9 Z M254,763.5 V794.2 M245.1,794.2 H262.9 L254,802.6 Z M254,673.9 H345.3 M345.3,656.2 V691.6 M356.6,655.6 Q346.4,673.9 357.6,692.4 M351.8,673.9 H434.4 M335.3,668.2 H341.3 M338.3,665.2 V671.2 M398.1,673.9 V680.3 M398.1,716 V770.0 M392.0,680.3 H404.20000000000005 V716 H392.0 Z M434.5,673.9 H449.4 M455.59999999999997,673.9 h6 M467.8,673.9 h6 M479.9,673.9 h6 M491.8,673.9 h6 M446.65,689.1999999999999 L452.65,682.4 H488.45 L494.45,688.9 M449.3,686.1 H491.2 M470.3,663.4 V601.8 H481 M446.65,689.2 V770.0 M319.5,547.8 H356.5 V559.9 H319.5 Z M386.4,553.4 V561.4 M383.2,569.5 H389.6 M386.4,566.3 V572.7 M383.2,587 H389.6 M386.4,593 V602.2 M377.5,602.2 H395.29999999999995 L386.4,610.6 Z M481.0,553.4 L481.5,556.6 Q487.29999999999995,559.6 484.4,564.6 Q487.29999999999995,567.85 484.4,571.1 Q487.29999999999995,574.40 484.4,577.7 Q487.29999999999995,580.95 484.4,584.2 Q487.29999999999995,587.45 484.4,590.7 Q487.29999999999995,595.8 481.5,598.8 L481.0,601.8 M495.7,553.4 L495.2,556.6 Q489.40000000000003,559.6 492.3,564.6 Q489.40000000000003,567.85 492.3,571.1 Q489.40000000000003,574.40 492.3,577.7 Q489.40000000000003,580.95 492.3,584.2 Q489.40000000000003,587.45 492.3,590.7 Q489.40000000000003,595.8 495.2,598.8 L495.7,601.8 M495.7,553.4 H567 M495.7,601.8 H567 M567,553.4 L575.8,561.6 L557,572 L575.8,582.6 L557,593.2 L567,601.8 M530.4,601.8 V613.9 M521.5,613.9 H539.3 L530.4,622.3 Z" fill="none" stroke="#0000ff" stroke-width="2" stroke-linejoin="miter"/>
<circle cx="146" cy="553.4" r="3.1" fill="#0000ff"/>
<circle cx="278.1" cy="553.4" r="3.1" fill="#0000ff"/>
<circle cx="386.4" cy="553.4" r="3.1" fill="#0000ff"/>
<circle cx="146" cy="613.9" r="3.1" fill="#0000ff"/>
<circle cx="61.9" cy="673.8" r="3.1" fill="#0000ff"/>
<circle cx="121.9" cy="770.0" r="3.1" fill="#0000ff"/>
<circle cx="254" cy="770.0" r="3.1" fill="#0000ff"/>
<circle cx="254" cy="673.9" r="3.1" fill="#0000ff"/>
<circle cx="398.1" cy="673.9" r="3.1" fill="#0000ff"/>
<circle cx="398.1" cy="770.0" r="3.1" fill="#0000ff"/>
<circle cx="434.4" cy="673.9" r="3.1" fill="#0000ff"/>
<circle cx="470.7" cy="638" r="3.1" fill="#0000ff"/>
<circle cx="446.6" cy="710" r="3.1" fill="#0000ff"/>
<circle cx="530.4" cy="601.8" r="3.1" fill="#0000ff"/>
<circle cx="37.7" cy="674.8" r="1.4" fill="#ff0000"/>
<circle cx="386.7" cy="674.8" r="1.4" fill="#ff0000"/>
<circle cx="468.8" cy="613.6" r="1.4" fill="#ff0000"/>
<circle cx="554.4" cy="554.2" r="1.4" fill="#ff0000"/>
<text class="t" font-size="18" transform="translate(86.0,567.5) scale(1.0,1)" xml:space="preserve">C1</text>
<text class="t" font-size="18" transform="translate(86.0,603.4) scale(1.0,1)" xml:space="preserve">200µ</text>
<text class="t" font-size="18" transform="translate(152.6,567.5) scale(1.0,1)" xml:space="preserve">R1</text>
<text class="t" font-size="18" transform="translate(152.6,603.4) scale(1.0,1)" xml:space="preserve">30K</text>
<text class="t" font-size="21" transform="translate(152.5,634.0) scale(1.0,1)" xml:space="preserve">U1</text>
<text class="t" font-size="18" transform="translate(178.8,655.2) scale(1.0,1)" xml:space="preserve">sv6n1p</text>
<text class="t" font-size="18" transform="translate(27.0,670.3) scale(1.0,1)" fill="#ff0000" xml:space="preserve">in1</text>
<text class="t" font-size="18" transform="translate(68.9,687.4) scale(1.0,1)" xml:space="preserve">R2</text>
<text class="t" font-size="18" transform="translate(68.9,723.0) scale(1.0,1)" xml:space="preserve">470K</text>
<text class="t" font-size="18" transform="translate(129.0,734.7) scale(1.0,1)" xml:space="preserve">R3</text>
<text class="t" font-size="18" transform="translate(129.0,770.6) scale(1.0,1)" xml:space="preserve">330</text>
<text class="t" font-size="18" transform="translate(37.7,759.3) scale(1.0,1)" xml:space="preserve">V1</text>
<text class="t" x="37.7" y="795.2" font-size="18" textLength="131.1" lengthAdjust="spacingAndGlyphs" xml:space="preserve">SIN 0 Vamp fre</text>
<text class="t" font-size="21" transform="translate(283.5,574.6) scale(1.0,1)" xml:space="preserve">U2</text>
<text class="t" font-size="18" transform="translate(311.8,593.7) scale(1.0,1)" xml:space="preserve">sv6n1p</text>
<text class="t" font-size="18" transform="translate(327.2,542.9) scale(1.0,1)" xml:space="preserve">R6</text>
<text class="t" font-size="18" transform="translate(328.6,578.2) scale(1.0,1)" xml:space="preserve">1K</text>
<text class="t" font-size="18" transform="translate(398.2,567.5) scale(1.0,1)" xml:space="preserve">V2</text>
<text class="t" font-size="18" transform="translate(398.2,603.4) scale(1.0,1)" xml:space="preserve">310V</text>
<text class="t" font-size="18" transform="translate(260.8,734.7) scale(1.0,1)" xml:space="preserve">R4</text>
<text class="t" font-size="18" transform="translate(260.8,770.6) scale(1.0,1)" xml:space="preserve">30K</text>
<text class="t" font-size="18" transform="translate(339.7,651.1) scale(1.0,1)" xml:space="preserve">C2</text>
<text class="t" font-size="18" transform="translate(334.7,710.5) scale(1.0,1)" xml:space="preserve">22µ</text>
<text class="t" font-size="18" transform="translate(371.5,669.7) scale(1.0,1)" fill="#ff0000" xml:space="preserve">g34</text>
<text class="t" font-size="18" transform="translate(404.6,687.4) scale(1.0,1)" xml:space="preserve">R5</text>
<text class="t" font-size="18" transform="translate(404.6,723.0) scale(1.0,1)" xml:space="preserve">10K</text>
<text class="t" font-size="21" transform="translate(416.2,645.5) scale(1.0,1)" xml:space="preserve">U3</text>
<text class="t" font-size="21" transform="translate(481.7,640.0) scale(1.0,1)" xml:space="preserve">U4</text>
<text class="t" font-size="18" transform="translate(506.0,655.2) scale(1.0,1)" xml:space="preserve">6n7</text>
<text class="t" font-size="18" transform="translate(471.7,621.5) scale(1.0,1)" fill="#ff0000" xml:space="preserve">a34</text>
<text class="t" font-size="18" transform="translate(476.0,549.4) scale(1.0,1)" xml:space="preserve">×1</text>
<text class="t" font-size="18" transform="translate(413.3,542.9) scale(1.0,1)" xml:space="preserve">L=13</text>
<text class="t" x="426.8" y="525.2" font-size="18" textLength="266.0" lengthAdjust="spacingAndGlyphs" xml:space="preserve">Turns=42 1  c=100p  Rser=100</text>
<text class="t" font-size="18" transform="translate(537.2,549.6) scale(1.0,1)" fill="#ff0000" xml:space="preserve">Vout</text>
<text class="t" font-size="18" transform="translate(579.1,566.5) scale(1.0,1)" xml:space="preserve">R7</text>
<text class="t" font-size="18" transform="translate(579.1,603.4) scale(1.0,1)" xml:space="preserve">4</text>
<text class="t" x="482.4" y="771.8" font-size="18" textLength="157.8" lengthAdjust="spacingAndGlyphs" xml:space="preserve">.meas PLoad P(R7)</text>
<text class="t" x="294.0" y="816.5" font-size="18" textLength="323.8" lengthAdjust="spacingAndGlyphs" xml:space="preserve">.step dec param Vamp 40m  400m  10</text>
<text class="t" x="32.9" y="833.6" font-size="24" fill="#ff00ff" textLength="195.0" lengthAdjust="spacingAndGlyphs" xml:space="preserve">.opt FASTMATH=0</text>
<text class="t" x="99.0" y="858.6" font-size="18" textLength="215.9" lengthAdjust="spacingAndGlyphs" xml:space="preserve">.meas G1 four fre v(Vout)</text>
<text class="t" x="350.9" y="858.6" font-size="18" textLength="210.1" lengthAdjust="spacingAndGlyphs" xml:space="preserve">.meas H1 param abs(g1)</text>
<text class="t" x="92.8" y="882.2" font-size="18" textLength="235.8" lengthAdjust="spacingAndGlyphs" xml:space="preserve">.meas G2 four fre*2 v(Vout)</text>
<text class="t" x="357.1" y="882.2" font-size="18" textLength="210.1" lengthAdjust="spacingAndGlyphs" xml:space="preserve">.meas H2 param abs(g2)</text>
<text class="t" x="99.0" y="912.6" font-size="18" textLength="235.8" lengthAdjust="spacingAndGlyphs" xml:space="preserve">.meas G3 four fre*3 v(Vout)</text>
<text class="t" x="363.3" y="912.6" font-size="18" textLength="210.1" lengthAdjust="spacingAndGlyphs" xml:space="preserve">.meas H3 param abs(g3)</text>
<text class="t" x="99.0" y="936.7" font-size="18" textLength="235.8" lengthAdjust="spacingAndGlyphs" xml:space="preserve">.meas G4 four fre*4 v(Vout)</text>
<text class="t" x="363.3" y="936.7" font-size="18" textLength="210.1" lengthAdjust="spacingAndGlyphs" xml:space="preserve">.meas H4 param abs(g4)</text>
<text class="t" x="99.0" y="966.6" font-size="18" textLength="235.8" lengthAdjust="spacingAndGlyphs" xml:space="preserve">.meas G5 four fre*5 v(Vout)</text>
<text class="t" x="374.9" y="966.6" font-size="18" textLength="210.1" lengthAdjust="spacingAndGlyphs" xml:space="preserve">.meas H5 param abs(g5)</text>
<text class="t" x="99.0" y="996.5" font-size="18" textLength="235.8" lengthAdjust="spacingAndGlyphs" xml:space="preserve">.meas G6 four fre*6 v(Vout)</text>
<text class="t" x="363.3" y="996.5" font-size="18" textLength="210.1" lengthAdjust="spacingAndGlyphs" xml:space="preserve">.meas H6 param abs(g6)</text>
<text class="t" x="99.0" y="1026.7" font-size="18" textLength="235.8" lengthAdjust="spacingAndGlyphs" xml:space="preserve">.meas G7 four fre*7 v(Vout)</text>
<text class="t" x="363.3" y="1026.7" font-size="18" textLength="210.1" lengthAdjust="spacingAndGlyphs" xml:space="preserve">.meas H7 param abs(g7)</text>
<text class="t" x="99.0" y="1056.6" font-size="18" textLength="235.8" lengthAdjust="spacingAndGlyphs" xml:space="preserve">.meas G8 four fre*8 v(Vout)</text>
<text class="t" x="368.7" y="1056.6" font-size="18" textLength="210.1" lengthAdjust="spacingAndGlyphs" xml:space="preserve">.meas H8 param abs(g8)</text>
<text class="t" x="99.0" y="1080.7" font-size="18" textLength="235.8" lengthAdjust="spacingAndGlyphs" xml:space="preserve">.meas G9 four fre*9 v(Vout)</text>
<text class="t" x="363.3" y="1080.7" font-size="18" textLength="210.1" lengthAdjust="spacingAndGlyphs" xml:space="preserve">.meas H9 param abs(g9)</text>
<text class="t" x="20.1" y="1108.9" font-size="18" textLength="659.1" lengthAdjust="spacingAndGlyphs" xml:space="preserve">.meas sumH param (H2^2+H3^2+H4^2+H5^2+H6^2+H7^2+H8^2+H9^2)</text>
<text class="t" x="107.3" y="1137.5" font-size="18" textLength="437.1" lengthAdjust="spacingAndGlyphs" xml:space="preserve">.meas THD param (sumH/(sumH+H1^2))**0.5*100</text>
<text class="t" x="83.6" y="1163.7" font-size="18" textLength="232.6" lengthAdjust="spacingAndGlyphs" xml:space="preserve">.meas RMSout RMS v(Vout)</text>
<text class="t" x="338.4" y="1174.4" font-size="18" textLength="196.4" lengthAdjust="spacingAndGlyphs" xml:space="preserve">.meas PPout PP v(Vout)</text>
<rect x="850" y="102" width="28" height="259" fill="url(#lsh)"/>
<rect x="916.8" y="110.6" width="749.0" height="223.70000000000002" fill="none" stroke="#007f00" stroke-width="3.2"/>
<g fill="none" stroke-width="3.1" stroke-linejoin="round">
<polyline stroke="#00ff00" points="916.8,222.8 918.3,224.3 919.8,225.8 921.3,227.2 922.8,228.5 924.3,229.6 925.8,230.6 927.3,231.3 928.8,231.9 930.3,232.3 931.8,232.6 933.3,232.7 934.8,232.7 936.3,232.6 937.8,232.3 939.3,231.8 940.8,231.3 942.3,230.6 943.8,229.7 945.3,228.8 946.8,227.7 948.3,226.6 949.8,225.4 951.3,224.1 952.8,222.8 954.3,221.4 955.8,220.1 957.3,218.7 958.8,217.5 960.3,216.3 961.8,215.1 963.3,214.1 964.8,213.3 966.3,212.6 967.8,212.0 969.3,211.7 970.8,211.5 972.3,211.5 973.8,211.7 975.3,212.1 976.8,212.6 978.3,213.4 979.8,214.2 981.3,215.2 982.8,216.4 984.3,217.6 985.8,218.9 987.3,220.2 988.8,221.5 990.3,222.9 991.8,224.2 993.3,225.5 994.8,226.7 996.3,227.8 997.8,228.9 999.3,229.8 1000.8,230.6 1002.3,231.3 1003.8,231.9 1005.3,232.3 1006.8,232.6 1008.3,232.7 1009.8,232.7 1011.3,232.6 1012.8,232.3 1014.3,231.8 1015.8,231.2 1017.3,230.5 1018.8,229.7 1020.3,228.7 1021.8,227.7 1023.3,226.5 1024.8,225.3 1026.3,224.0 1027.8,222.7 1029.3,221.3 1030.8,220.0 1032.3,218.7 1033.8,217.4 1035.3,216.2 1036.8,215.1 1038.3,214.1 1039.8,213.2 1041.3,212.5 1042.8,212.0 1044.3,211.6 1045.8,211.5 1047.3,211.5 1048.8,211.7 1050.3,212.1 1051.8,212.7 1053.3,213.4 1054.8,214.3 1056.3,215.3 1057.8,216.5 1059.3,217.7 1060.8,219.0 1062.3,220.3 1063.8,221.6 1065.3,223.0 1066.8,224.3 1068.3,225.6 1069.8,226.8 1071.3,227.9 1072.8,229.0 1074.3,229.9 1075.8,230.7 1077.3,231.4 1078.8,231.9 1080.3,232.3 1081.8,232.6 1083.3,232.7 1084.8,232.7 1086.3,232.5 1087.8,232.2 1089.3,231.8 1090.8,231.2 1092.3,230.5 1093.8,229.6 1095.3,228.7 1096.8,227.6 1098.3,226.4 1099.8,225.2 1101.3,223.9 1102.8,222.6 1104.3,221.2 1105.8,219.9 1107.3,218.6 1108.8,217.3 1110.3,216.1 1111.8,215.0 1113.3,214.0 1114.8,213.2 1116.3,212.5 1117.8,212.0 1119.3,211.6 1120.8,211.5 1122.3,211.5 1123.8,211.7 1125.3,212.1 1126.8,212.7 1128.3,213.5 1129.8,214.4 1131.3,215.4 1132.8,216.5 1134.3,217.8 1135.8,219.0 1137.3,220.4 1138.8,221.7 1140.3,223.1 1141.8,224.4 1143.3,225.7 1144.8,226.9 1146.3,228.0 1147.8,229.0 1149.3,229.9 1150.8,230.7 1152.3,231.4 1153.8,232.0 1155.3,232.4 1156.8,232.6 1158.3,232.7 1159.8,232.7 1161.3,232.5 1162.8,232.2 1164.3,231.7 1165.8,231.1 1167.3,230.4 1168.8,229.6 1170.3,228.6 1171.8,227.5 1173.3,226.4 1174.8,225.1 1176.3,223.8 1177.8,222.5 1179.3,221.1 1180.8,219.8 1182.3,218.5 1183.8,217.2 1185.3,216.0 1186.8,214.9 1188.3,214.0 1189.8,213.1 1191.3,212.4 1192.8,211.9 1194.3,211.6 1195.8,211.5 1197.3,211.5 1198.8,211.7 1200.3,212.2 1201.8,212.8 1203.3,213.5 1204.8,214.4 1206.3,215.5 1207.8,216.6 1209.3,217.8 1210.8,219.1 1212.3,220.5 1213.8,221.8 1215.3,223.2 1216.8,224.5 1218.3,225.7 1219.8,226.9 1221.3,228.1 1222.8,229.1 1224.3,230.0 1225.8,230.8 1227.3,231.5 1228.8,232.0 1230.3,232.4 1231.8,232.6 1233.3,232.7 1234.8,232.7 1236.3,232.5 1237.8,232.2 1239.3,231.7 1240.8,231.1 1242.3,230.4 1243.8,229.5 1245.3,228.5 1246.8,227.4 1248.3,226.3 1249.8,225.0 1251.3,223.7 1252.8,222.4 1254.3,221.1 1255.8,219.7 1257.3,218.4 1258.8,217.1 1260.3,216.0 1261.8,214.9 1263.3,213.9 1264.8,213.1 1266.3,212.4 1267.8,211.9 1269.3,211.6 1270.8,211.5 1272.3,211.5 1273.8,211.8 1275.3,212.2 1276.8,212.8 1278.3,213.6 1279.8,214.5 1281.3,215.5 1282.8,216.7 1284.3,217.9 1285.8,219.2 1287.3,220.6 1288.8,221.9 1290.3,223.2 1291.8,224.6 1293.3,225.8 1294.8,227.0 1296.3,228.1 1297.8,229.1 1299.3,230.1 1300.8,230.8 1302.3,231.5 1303.8,232.0 1305.3,232.4 1306.8,232.6 1308.3,232.7 1309.8,232.7 1311.3,232.5 1312.8,232.1 1314.3,231.7 1315.8,231.1 1317.3,230.3 1318.8,229.4 1320.3,228.5 1321.8,227.4 1323.3,226.2 1324.8,224.9 1326.3,223.6 1327.8,222.3 1329.3,221.0 1330.8,219.6 1332.3,218.3 1333.8,217.1 1335.3,215.9 1336.8,214.8 1338.3,213.8 1339.8,213.0 1341.3,212.4 1342.8,211.9 1344.3,211.6 1345.8,211.5 1347.3,211.5 1348.8,211.8 1350.3,212.2 1351.8,212.9 1353.3,213.6 1354.8,214.6 1356.3,215.6 1357.8,216.8 1359.3,218.0 1360.8,219.3 1362.3,220.6 1363.8,222.0 1365.3,223.3 1366.8,224.6 1368.3,225.9 1369.8,227.1 1371.3,228.2 1372.8,229.2 1374.3,230.1 1375.8,230.9 1377.3,231.5 1378.8,232.0 1380.3,232.4 1381.8,232.7 1383.3,232.7 1384.8,232.7 1386.3,232.5 1387.8,232.1 1389.3,231.6 1390.8,231.0 1392.3,230.2 1393.8,229.4 1395.3,228.4 1396.8,227.3 1398.3,226.1 1399.8,224.9 1401.3,223.6 1402.8,222.2 1404.3,220.9 1405.8,219.5 1407.3,218.2 1408.8,217.0 1410.3,215.8 1411.8,214.7 1413.3,213.8 1414.8,213.0 1416.3,212.3 1417.8,211.9 1419.3,211.6 1420.8,211.5 1422.3,211.5 1423.8,211.8 1425.3,212.3 1426.8,212.9 1428.3,213.7 1429.8,214.6 1431.3,215.7 1432.8,216.8 1434.3,218.1 1435.8,219.4 1437.3,220.7 1438.8,222.1 1440.3,223.4 1441.8,224.7 1443.3,226.0 1444.8,227.2 1446.3,228.3 1447.8,229.3 1449.3,230.2 1450.8,230.9 1452.3,231.6 1453.8,232.1 1455.3,232.4 1456.8,232.7 1458.3,232.7 1459.8,232.7 1461.3,232.5 1462.8,232.1 1464.3,231.6 1465.8,231.0 1467.3,230.2 1468.8,229.3 1470.3,228.3 1471.8,227.2 1473.3,226.0 1474.8,224.8 1476.3,223.5 1477.8,222.1 1479.3,220.8 1480.8,219.4 1482.3,218.1 1483.8,216.9 1485.3,215.7 1486.8,214.7 1488.3,213.7 1489.8,212.9 1491.3,212.3 1492.8,211.8 1494.3,211.5 1495.8,211.5 1497.3,211.6 1498.8,211.8 1500.3,212.3 1501.8,212.9 1503.3,213.7 1504.8,214.7 1506.3,215.8 1507.8,216.9 1509.3,218.2 1510.8,219.5 1512.3,220.8 1513.8,222.2 1515.3,223.5 1516.8,224.8 1518.3,226.1 1519.8,227.2 1521.3,228.3 1522.8,229.3 1524.3,230.2 1525.8,231.0 1527.3,231.6 1528.8,232.1 1530.3,232.5 1531.8,232.7 1533.3,232.7 1534.8,232.7 1536.3,232.4 1537.8,232.1 1539.3,231.6 1540.8,230.9 1542.3,230.1 1543.8,229.2 1545.3,228.2 1546.8,227.1 1548.3,225.9 1549.8,224.7 1551.3,223.4 1552.8,222.0 1554.3,220.7 1555.8,219.4 1557.3,218.1 1558.8,216.8 1560.3,215.7 1561.8,214.6 1563.3,213.7 1564.8,212.9 1566.3,212.3 1567.8,211.8 1569.3,211.5 1570.8,211.5 1572.3,211.6 1573.8,211.9 1575.3,212.3 1576.8,213.0 1578.3,213.8 1579.8,214.8 1581.3,215.8 1582.8,217.0 1584.3,218.3 1585.8,219.6 1587.3,220.9 1588.8,222.3 1590.3,223.6 1591.8,224.9 1593.3,226.1 1594.8,227.3 1596.3,228.4 1597.8,229.4 1599.3,230.3 1600.8,231.0 1602.3,231.6 1603.8,232.1 1605.3,232.5 1606.8,232.7 1608.3,232.7 1609.8,232.6 1611.3,232.4 1612.8,232.0 1614.3,231.5 1615.8,230.9 1617.3,230.1 1618.8,229.2 1620.3,228.2 1621.8,227.1 1623.3,225.9 1624.8,224.6 1626.3,223.3 1627.8,222.0 1629.3,220.6 1630.8,219.3 1632.3,218.0 1633.8,216.7 1635.3,215.6 1636.8,214.5 1638.3,213.6 1639.8,212.8 1641.3,212.2 1642.8,211.8 1644.3,211.5 1645.8,211.5 1647.3,211.6 1648.8,211.9 1650.3,212.4 1651.8,213.0 1653.3,213.9 1654.8,214.8 1656.3,215.9 1657.8,217.1 1659.3,218.4 1660.8,219.7 1662.3,221.0 1663.8,222.4 1665.3,223.7"/>
<polyline stroke="#0033ff" points="916.8,222.8 918.3,224.8 919.8,226.8 921.3,228.6 922.8,230.3 924.3,231.9 925.8,233.2 927.3,234.2 928.8,234.9 930.3,235.5 931.8,235.9 933.3,236.1 934.8,236.1 936.3,235.9 937.8,235.5 939.3,234.9 940.8,234.1 942.3,233.2 943.8,232.0 945.3,230.8 946.8,229.3 948.3,227.8 949.8,226.2 951.3,224.5 952.8,222.7 954.3,221.0 955.8,219.2 957.3,217.5 958.8,215.8 960.3,214.3 961.8,212.8 963.3,211.5 964.8,210.4 966.3,209.5 967.8,208.8 969.3,208.4 970.8,208.1 972.3,208.1 973.8,208.4 975.3,208.9 976.8,209.6 978.3,210.5 979.8,211.7 981.3,213.0 982.8,214.4 984.3,216.0 985.8,217.6 987.3,219.4 988.8,221.1 990.3,222.9 991.8,224.6 993.3,226.3 994.8,228.0 996.3,229.5 997.8,230.9 999.3,232.2 1000.8,233.3 1002.3,234.2 1003.8,235.0 1005.3,235.5 1006.8,235.9 1008.3,236.1 1009.8,236.1 1011.3,235.9 1012.8,235.5 1014.3,234.9 1015.8,234.1 1017.3,233.1 1018.8,232.0 1020.3,230.7 1021.8,229.2 1023.3,227.7 1024.8,226.1 1026.3,224.4 1027.8,222.6 1029.3,220.8 1030.8,219.1 1032.3,217.4 1033.8,215.7 1035.3,214.2 1036.8,212.7 1038.3,211.5 1039.8,210.4 1041.3,209.5 1042.8,208.8 1044.3,208.3 1045.8,208.1 1047.3,208.1 1048.8,208.4 1050.3,208.9 1051.8,209.7 1053.3,210.6 1054.8,211.7 1056.3,213.0 1057.8,214.5 1059.3,216.1 1060.8,217.8 1062.3,219.5 1063.8,221.2 1065.3,223.0 1066.8,224.8 1068.3,226.5 1069.8,228.1 1071.3,229.6 1072.8,231.0 1074.3,232.2 1075.8,233.3 1077.3,234.3 1078.8,235.0 1080.3,235.6 1081.8,235.9 1083.3,236.1 1084.8,236.1 1086.3,235.9 1087.8,235.4 1089.3,234.8 1090.8,234.0 1092.3,233.0 1093.8,231.9 1095.3,230.6 1096.8,229.1 1098.3,227.6 1099.8,226.0 1101.3,224.2 1102.8,222.5 1104.3,220.7 1105.8,219.0 1107.3,217.2 1108.8,215.6 1110.3,214.1 1111.8,212.6 1113.3,211.4 1114.8,210.3 1116.3,209.4 1117.8,208.7 1119.3,208.3 1120.8,208.1 1122.3,208.2 1123.8,208.4 1125.3,209.0 1126.8,209.7 1128.3,210.7 1129.8,211.8 1131.3,213.1 1132.8,214.6 1134.3,216.2 1135.8,217.9 1137.3,219.6 1138.8,221.4 1140.3,223.1 1141.8,224.9 1143.3,226.6 1144.8,228.2 1146.3,229.7 1147.8,231.1 1149.3,232.3 1150.8,233.4 1152.3,234.3 1153.8,235.1 1155.3,235.6 1156.8,236.0 1158.3,236.1 1159.8,236.1 1161.3,235.8 1162.8,235.4 1164.3,234.8 1165.8,233.9 1167.3,233.0 1168.8,231.8 1170.3,230.5 1171.8,229.0 1173.3,227.5 1174.8,225.8 1176.3,224.1 1177.8,222.4 1179.3,220.6 1180.8,218.8 1182.3,217.1 1183.8,215.5 1185.3,214.0 1186.8,212.6 1188.3,211.3 1189.8,210.2 1191.3,209.4 1192.8,208.7 1194.3,208.3 1195.8,208.1 1197.3,208.2 1198.8,208.5 1200.3,209.0 1201.8,209.8 1203.3,210.7 1204.8,211.9 1206.3,213.2 1207.8,214.7 1209.3,216.3 1210.8,218.0 1212.3,219.7 1213.8,221.5 1215.3,223.3 1216.8,225.0 1218.3,226.7 1219.8,228.3 1221.3,229.8 1222.8,231.2 1224.3,232.4 1225.8,233.5 1227.3,234.4 1228.8,235.1 1230.3,235.6 1231.8,236.0 1233.3,236.1 1234.8,236.1 1236.3,235.8 1237.8,235.4 1239.3,234.7 1240.8,233.9 1242.3,232.9 1243.8,231.7 1245.3,230.4 1246.8,228.9 1248.3,227.4 1249.8,225.7 1251.3,224.0 1252.8,222.3 1254.3,220.5 1255.8,218.7 1257.3,217.0 1258.8,215.4 1260.3,213.9 1261.8,212.5 1263.3,211.2 1264.8,210.2 1266.3,209.3 1267.8,208.7 1269.3,208.3 1270.8,208.1 1272.3,208.2 1273.8,208.5 1275.3,209.0 1276.8,209.8 1278.3,210.8 1279.8,212.0 1281.3,213.3 1282.8,214.8 1284.3,216.4 1285.8,218.1 1287.3,219.8 1288.8,221.6 1290.3,223.4 1291.8,225.1 1293.3,226.8 1294.8,228.4 1296.3,229.9 1297.8,231.2 1299.3,232.5 1300.8,233.5 1302.3,234.4 1303.8,235.1 1305.3,235.7 1306.8,236.0 1308.3,236.1 1309.8,236.1 1311.3,235.8 1312.8,235.3 1314.3,234.7 1315.8,233.8 1317.3,232.8 1318.8,231.6 1320.3,230.3 1321.8,228.8 1323.3,227.3 1324.8,225.6 1326.3,223.9 1327.8,222.1 1329.3,220.4 1330.8,218.6 1332.3,216.9 1333.8,215.3 1335.3,213.8 1336.8,212.4 1338.3,211.1 1339.8,210.1 1341.3,209.3 1342.8,208.6 1344.3,208.2 1345.8,208.1 1347.3,208.2 1348.8,208.5 1350.3,209.1 1351.8,209.9 1353.3,210.9 1354.8,212.1 1356.3,213.4 1357.8,214.9 1359.3,216.5 1360.8,218.2 1362.3,220.0 1363.8,221.7 1365.3,223.5 1366.8,225.2 1368.3,226.9 1369.8,228.5 1371.3,230.0 1372.8,231.3 1374.3,232.5 1375.8,233.6 1377.3,234.5 1378.8,235.2 1380.3,235.7 1381.8,236.0 1383.3,236.1 1384.8,236.0 1386.3,235.8 1387.8,235.3 1389.3,234.6 1390.8,233.8 1392.3,232.7 1393.8,231.5 1395.3,230.2 1396.8,228.7 1398.3,227.2 1399.8,225.5 1401.3,223.8 1402.8,222.0 1404.3,220.3 1405.8,218.5 1407.3,216.8 1408.8,215.2 1410.3,213.7 1411.8,212.3 1413.3,211.1 1414.8,210.0 1416.3,209.2 1417.8,208.6 1419.3,208.2 1420.8,208.1 1422.3,208.2 1423.8,208.6 1425.3,209.1 1426.8,209.9 1428.3,211.0 1429.8,212.2 1431.3,213.5 1432.8,215.0 1434.3,216.6 1435.8,218.3 1437.3,220.1 1438.8,221.8 1440.3,223.6 1441.8,225.3 1443.3,227.0 1444.8,228.6 1446.3,230.1 1447.8,231.4 1449.3,232.6 1450.8,233.7 1452.3,234.5 1453.8,235.2 1455.3,235.7 1456.8,236.0 1458.3,236.1 1459.8,236.0 1461.3,235.7 1462.8,235.2 1464.3,234.6 1465.8,233.7 1467.3,232.7 1468.8,231.5 1470.3,230.1 1471.8,228.6 1473.3,227.1 1474.8,225.4 1476.3,223.7 1477.8,221.9 1479.3,220.1 1480.8,218.4 1482.3,216.7 1483.8,215.1 1485.3,213.6 1486.8,212.2 1488.3,211.0 1489.8,210.0 1491.3,209.2 1492.8,208.6 1494.3,208.2 1495.8,208.1 1497.3,208.2 1498.8,208.6 1500.3,209.2 1501.8,210.0 1503.3,211.0 1504.8,212.2 1506.3,213.6 1507.8,215.1 1509.3,216.7 1510.8,218.4 1512.3,220.2 1513.8,222.0 1515.3,223.7 1516.8,225.4 1518.3,227.1 1519.8,228.7 1521.3,230.2 1522.8,231.5 1524.3,232.7 1525.8,233.7 1527.3,234.6 1528.8,235.3 1530.3,235.8 1531.8,236.0 1533.3,236.1 1534.8,236.0 1536.3,235.7 1537.8,235.2 1539.3,234.5 1540.8,233.6 1542.3,232.6 1543.8,231.4 1545.3,230.0 1546.8,228.5 1548.3,227.0 1549.8,225.3 1551.3,223.5 1552.8,221.8 1554.3,220.0 1555.8,218.3 1557.3,216.6 1558.8,215.0 1560.3,213.5 1561.8,212.1 1563.3,210.9 1564.8,209.9 1566.3,209.1 1567.8,208.5 1569.3,208.2 1570.8,208.1 1572.3,208.2 1573.8,208.6 1575.3,209.2 1576.8,210.1 1578.3,211.1 1579.8,212.3 1581.3,213.7 1582.8,215.2 1584.3,216.9 1585.8,218.6 1587.3,220.3 1588.8,222.1 1590.3,223.8 1591.8,225.6 1593.3,227.2 1594.8,228.8 1596.3,230.3 1597.8,231.6 1599.3,232.8 1600.8,233.8 1602.3,234.6 1603.8,235.3 1605.3,235.8 1606.8,236.1 1608.3,236.1 1609.8,236.0 1611.3,235.7 1612.8,235.2 1614.3,234.5 1615.8,233.6 1617.3,232.5 1618.8,231.3 1620.3,229.9 1621.8,228.4 1623.3,226.8 1624.8,225.2 1626.3,223.4 1627.8,221.7 1629.3,219.9 1630.8,218.2 1632.3,216.5 1633.8,214.9 1635.3,213.4 1636.8,212.0 1638.3,210.8 1639.8,209.9 1641.3,209.1 1642.8,208.5 1644.3,208.2 1645.8,208.1 1647.3,208.3 1648.8,208.7 1650.3,209.3 1651.8,210.1 1653.3,211.2 1654.8,212.4 1656.3,213.8 1657.8,215.3 1659.3,217.0 1660.8,218.7 1662.3,220.4 1663.8,222.2 1665.3,224.0"/>
<polyline stroke="#ff3f00" points="916.8,222.3 918.3,224.9 919.8,227.4 921.3,229.9 922.8,232.2 924.3,234.3 925.8,236.1 927.3,237.4 928.8,238.5 930.3,239.4 931.8,240.0 933.3,240.2 934.8,240.2 936.3,239.9 937.8,239.4 939.3,238.5 940.8,237.4 942.3,236.1 943.8,234.5 945.3,232.7 946.8,230.8 948.3,228.8 949.8,226.7 951.3,224.5 952.8,222.2 954.3,220.0 955.8,217.9 957.3,215.8 958.8,213.8 960.3,211.9 961.8,210.3 963.3,208.8 964.8,207.5 966.3,206.5 967.8,205.7 969.3,205.2 970.8,205.0 972.3,205.0 973.8,205.3 975.3,205.8 976.8,206.6 978.3,207.7 979.8,208.9 981.3,210.4 982.8,212.1 984.3,214.0 985.8,216.0 987.3,218.1 988.8,220.2 990.3,222.4 991.8,224.7 993.3,226.9 994.8,229.0 996.3,231.0 997.8,232.9 999.3,234.7 1000.8,236.2 1002.3,237.5 1003.8,238.6 1005.3,239.4 1006.8,240.0 1008.3,240.2 1009.8,240.2 1011.3,239.9 1012.8,239.3 1014.3,238.4 1015.8,237.3 1017.3,236.0 1018.8,234.4 1020.3,232.6 1021.8,230.7 1023.3,228.6 1024.8,226.5 1026.3,224.3 1027.8,222.1 1029.3,219.9 1030.8,217.7 1032.3,215.6 1033.8,213.7 1035.3,211.8 1036.8,210.2 1038.3,208.7 1039.8,207.5 1041.3,206.5 1042.8,205.7 1044.3,205.2 1045.8,204.9 1047.3,205.0 1048.8,205.3 1050.3,205.8 1051.8,206.7 1053.3,207.7 1054.8,209.0 1056.3,210.5 1057.8,212.2 1059.3,214.1 1060.8,216.1 1062.3,218.2 1063.8,220.4 1065.3,222.6 1066.8,224.8 1068.3,227.0 1069.8,229.1 1071.3,231.2 1072.8,233.0 1074.3,234.8 1075.8,236.3 1077.3,237.6 1078.8,238.7 1080.3,239.5 1081.8,240.0 1083.3,240.3 1084.8,240.2 1086.3,239.9 1087.8,239.3 1089.3,238.4 1090.8,237.2 1092.3,235.9 1093.8,234.3 1095.3,232.5 1096.8,230.6 1098.3,228.5 1099.8,226.4 1101.3,224.2 1102.8,221.9 1104.3,219.7 1105.8,217.6 1107.3,215.5 1108.8,213.5 1110.3,211.7 1111.8,210.1 1113.3,208.6 1114.8,207.4 1116.3,206.4 1117.8,205.7 1119.3,205.2 1120.8,204.9 1122.3,205.0 1123.8,205.3 1125.3,205.9 1126.8,206.7 1128.3,207.8 1129.8,209.1 1131.3,210.6 1132.8,212.4 1134.3,214.2 1135.8,216.2 1137.3,218.3 1138.8,220.5 1140.3,222.7 1141.8,225.0 1143.3,227.1 1144.8,229.3 1146.3,231.3 1147.8,233.2 1149.3,234.9 1150.8,236.4 1152.3,237.7 1153.8,238.7 1155.3,239.5 1156.8,240.0 1158.3,240.3 1159.8,240.2 1161.3,239.8 1162.8,239.2 1164.3,238.3 1165.8,237.2 1167.3,235.8 1168.8,234.2 1170.3,232.4 1171.8,230.4 1173.3,228.4 1174.8,226.2 1176.3,224.0 1177.8,221.8 1179.3,219.6 1180.8,217.4 1182.3,215.4 1183.8,213.4 1185.3,211.6 1186.8,210.0 1188.3,208.5 1189.8,207.3 1191.3,206.3 1192.8,205.6 1194.3,205.1 1195.8,204.9 1197.3,205.0 1198.8,205.3 1200.3,205.9 1201.8,206.8 1203.3,207.9 1204.8,209.2 1206.3,210.8 1207.8,212.5 1209.3,214.4 1210.8,216.4 1212.3,218.5 1213.8,220.7 1215.3,222.9 1216.8,225.1 1218.3,227.3 1219.8,229.4 1221.3,231.4 1222.8,233.3 1224.3,235.0 1225.8,236.5 1227.3,237.8 1228.8,238.8 1230.3,239.6 1231.8,240.1 1233.3,240.3 1234.8,240.2 1236.3,239.8 1237.8,239.2 1239.3,238.2 1240.8,237.1 1242.3,235.7 1243.8,234.0 1245.3,232.2 1246.8,230.3 1248.3,228.2 1249.8,226.1 1251.3,223.9 1252.8,221.6 1254.3,219.4 1255.8,217.3 1257.3,215.2 1258.8,213.3 1260.3,211.5 1261.8,209.9 1263.3,208.4 1264.8,207.2 1266.3,206.3 1267.8,205.6 1269.3,205.1 1270.8,204.9 1272.3,205.0 1273.8,205.4 1275.3,206.0 1276.8,206.9 1278.3,208.0 1279.8,209.3 1281.3,210.9 1282.8,212.6 1284.3,214.5 1285.8,216.5 1287.3,218.6 1288.8,220.8 1290.3,223.0 1291.8,225.3 1293.3,227.4 1294.8,229.5 1296.3,231.5 1297.8,233.4 1299.3,235.1 1300.8,236.6 1302.3,237.8 1303.8,238.9 1305.3,239.6 1306.8,240.1 1308.3,240.3 1309.8,240.2 1311.3,239.8 1312.8,239.1 1314.3,238.2 1315.8,237.0 1317.3,235.6 1318.8,233.9 1320.3,232.1 1321.8,230.2 1323.3,228.1 1324.8,225.9 1326.3,223.7 1327.8,221.5 1329.3,219.3 1330.8,217.1 1332.3,215.1 1333.8,213.2 1335.3,211.4 1336.8,209.8 1338.3,208.4 1339.8,207.2 1341.3,206.2 1342.8,205.5 1344.3,205.1 1345.8,204.9 1347.3,205.0 1348.8,205.4 1350.3,206.0 1351.8,206.9 1353.3,208.1 1354.8,209.4 1356.3,211.0 1357.8,212.7 1359.3,214.6 1360.8,216.7 1362.3,218.8 1363.8,221.0 1365.3,223.2 1366.8,225.4 1368.3,227.6 1369.8,229.7 1371.3,231.7 1372.8,233.5 1374.3,235.2 1375.8,236.7 1377.3,237.9 1378.8,238.9 1380.3,239.6 1381.8,240.1 1383.3,240.3 1384.8,240.1 1386.3,239.7 1387.8,239.1 1389.3,238.1 1390.8,236.9 1392.3,235.5 1393.8,233.8 1395.3,232.0 1396.8,230.0 1398.3,227.9 1399.8,225.8 1401.3,223.6 1402.8,221.3 1404.3,219.1 1405.8,217.0 1407.3,215.0 1408.8,213.0 1410.3,211.3 1411.8,209.7 1413.3,208.3 1414.8,207.1 1416.3,206.2 1417.8,205.5 1419.3,205.1 1420.8,204.9 1422.3,205.0 1423.8,205.4 1425.3,206.1 1426.8,207.0 1428.3,208.1 1429.8,209.5 1431.3,211.1 1432.8,212.8 1434.3,214.8 1435.8,216.8 1437.3,218.9 1438.8,221.1 1440.3,223.3 1441.8,225.6 1443.3,227.7 1444.8,229.8 1446.3,231.8 1447.8,233.6 1449.3,235.3 1450.8,236.8 1452.3,238.0 1453.8,239.0 1455.3,239.7 1456.8,240.1 1458.3,240.3 1459.8,240.1 1461.3,239.7 1462.8,239.0 1464.3,238.0 1465.8,236.8 1467.3,235.4 1468.8,233.7 1470.3,231.9 1471.8,229.9 1473.3,227.8 1474.8,225.6 1476.3,223.4 1477.8,221.2 1479.3,219.0 1480.8,216.9 1482.3,214.8 1483.8,212.9 1485.3,211.1 1486.8,209.6 1488.3,208.2 1489.8,207.0 1491.3,206.1 1492.8,205.5 1494.3,205.1 1495.8,204.9 1497.3,205.1 1498.8,205.5 1500.3,206.1 1501.8,207.1 1503.3,208.2 1504.8,209.6 1506.3,211.2 1507.8,213.0 1509.3,214.9 1510.8,216.9 1512.3,219.1 1513.8,221.3 1515.3,223.5 1516.8,225.7 1518.3,227.9 1519.8,230.0 1521.3,231.9 1522.8,233.8 1524.3,235.4 1525.8,236.8 1527.3,238.1 1528.8,239.0 1530.3,239.7 1531.8,240.1 1533.3,240.3 1534.8,240.1 1536.3,239.7 1537.8,238.9 1539.3,238.0 1540.8,236.7 1542.3,235.3 1543.8,233.6 1545.3,231.7 1546.8,229.8 1548.3,227.7 1549.8,225.5 1551.3,223.3 1552.8,221.0 1554.3,218.9 1555.8,216.7 1557.3,214.7 1558.8,212.8 1560.3,211.0 1561.8,209.5 1563.3,208.1 1564.8,207.0 1566.3,206.1 1567.8,205.4 1569.3,205.0 1570.8,204.9 1572.3,205.1 1573.8,205.5 1575.3,206.2 1576.8,207.1 1578.3,208.3 1579.8,209.7 1581.3,211.3 1582.8,213.1 1584.3,215.0 1585.8,217.1 1587.3,219.2 1588.8,221.4 1590.3,223.6 1591.8,225.8 1593.3,228.0 1594.8,230.1 1596.3,232.1 1597.8,233.9 1599.3,235.5 1600.8,236.9 1602.3,238.1 1603.8,239.1 1605.3,239.8 1606.8,240.2 1608.3,240.3 1609.8,240.1 1611.3,239.6 1612.8,238.9 1614.3,237.9 1615.8,236.6 1617.3,235.1 1618.8,233.5 1620.3,231.6 1621.8,229.6 1623.3,227.5 1624.8,225.3 1626.3,223.1 1627.8,220.9 1629.3,218.7 1630.8,216.6 1632.3,214.6 1633.8,212.7 1635.3,210.9 1636.8,209.4 1638.3,208.0 1639.8,206.9 1641.3,206.0 1642.8,205.4 1644.3,205.0 1645.8,204.9 1647.3,205.1 1648.8,205.5 1650.3,206.3 1651.8,207.2 1653.3,208.4 1654.8,209.8 1656.3,211.4 1657.8,213.2 1659.3,215.2 1660.8,217.2 1662.3,219.4 1663.8,221.6 1665.3,223.8"/>
<polyline stroke="#007f00" points="916.8,222.2 918.3,225.5 919.8,228.8 921.3,231.9 922.8,234.9 924.3,237.6 925.8,239.9 927.3,241.7 928.8,243.1 930.3,244.2 931.8,244.9 933.3,245.3 934.8,245.3 936.3,244.9 937.8,244.1 939.3,243.0 940.8,241.6 942.3,239.9 943.8,237.9 945.3,235.6 946.8,233.1 948.3,230.5 949.8,227.8 951.3,225.0 952.8,222.1 954.3,219.3 955.8,216.5 957.3,213.9 958.8,211.3 960.3,209.0 961.8,206.9 963.3,205.0 964.8,203.4 966.3,202.1 967.8,201.1 969.3,200.4 970.8,200.1 972.3,200.1 973.8,200.5 975.3,201.2 976.8,202.2 978.3,203.5 979.8,205.2 981.3,207.1 982.8,209.2 984.3,211.6 985.8,214.1 987.3,216.8 988.8,219.6 990.3,222.4 991.8,225.2 993.3,228.0 994.8,230.8 996.3,233.4 997.8,235.8 999.3,238.1 1000.8,240.1 1002.3,241.8 1003.8,243.2 1005.3,244.2 1006.8,244.9 1008.3,245.3 1009.8,245.2 1011.3,244.8 1012.8,244.1 1014.3,243.0 1015.8,241.5 1017.3,239.7 1018.8,237.7 1020.3,235.4 1021.8,233.0 1023.3,230.3 1024.8,227.6 1026.3,224.8 1027.8,221.9 1029.3,219.1 1030.8,216.3 1032.3,213.7 1033.8,211.2 1035.3,208.8 1036.8,206.7 1038.3,204.9 1039.8,203.3 1041.3,202.0 1042.8,201.0 1044.3,200.4 1045.8,200.1 1047.3,200.1 1048.8,200.5 1050.3,201.2 1051.8,202.3 1053.3,203.6 1054.8,205.3 1056.3,207.2 1057.8,209.4 1059.3,211.7 1060.8,214.3 1062.3,217.0 1063.8,219.7 1065.3,222.6 1066.8,225.4 1068.3,228.2 1069.8,231.0 1071.3,233.6 1072.8,236.0 1074.3,238.2 1075.8,240.2 1077.3,241.9 1078.8,243.2 1080.3,244.3 1081.8,245.0 1083.3,245.3 1084.8,245.2 1086.3,244.8 1087.8,244.0 1089.3,242.9 1090.8,241.4 1092.3,239.6 1093.8,237.6 1095.3,235.3 1096.8,232.8 1098.3,230.2 1099.8,227.4 1101.3,224.6 1102.8,221.7 1104.3,218.9 1105.8,216.2 1107.3,213.5 1108.8,211.0 1110.3,208.7 1111.8,206.6 1113.3,204.8 1114.8,203.2 1116.3,201.9 1117.8,201.0 1119.3,200.4 1120.8,200.1 1122.3,200.2 1123.8,200.6 1125.3,201.3 1126.8,202.4 1128.3,203.7 1129.8,205.4 1131.3,207.3 1132.8,209.5 1134.3,211.9 1135.8,214.5 1137.3,217.2 1138.8,219.9 1140.3,222.8 1141.8,225.6 1143.3,228.4 1144.8,231.1 1146.3,233.7 1147.8,236.1 1149.3,238.3 1150.8,240.3 1152.3,242.0 1153.8,243.3 1155.3,244.3 1156.8,245.0 1158.3,245.3 1159.8,245.2 1161.3,244.8 1162.8,243.9 1164.3,242.8 1165.8,241.3 1167.3,239.5 1168.8,237.4 1170.3,235.1 1171.8,232.6 1173.3,230.0 1174.8,227.2 1176.3,224.4 1177.8,221.5 1179.3,218.7 1180.8,216.0 1182.3,213.3 1183.8,210.9 1185.3,208.6 1186.8,206.5 1188.3,204.7 1189.8,203.1 1191.3,201.9 1192.8,200.9 1194.3,200.3 1195.8,200.1 1197.3,200.2 1198.8,200.6 1200.3,201.4 1201.8,202.5 1203.3,203.8 1204.8,205.5 1206.3,207.5 1207.8,209.7 1209.3,212.1 1210.8,214.6 1212.3,217.3 1213.8,220.1 1215.3,223.0 1216.8,225.8 1218.3,228.6 1219.8,231.3 1221.3,233.9 1222.8,236.3 1224.3,238.5 1225.8,240.4 1227.3,242.1 1228.8,243.4 1230.3,244.4 1231.8,245.0 1233.3,245.3 1234.8,245.2 1236.3,244.7 1237.8,243.9 1239.3,242.7 1240.8,241.2 1242.3,239.4 1243.8,237.3 1245.3,235.0 1246.8,232.5 1248.3,229.8 1249.8,227.0 1251.3,224.2 1252.8,221.4 1254.3,218.5 1255.8,215.8 1257.3,213.2 1258.8,210.7 1260.3,208.4 1261.8,206.4 1263.3,204.5 1264.8,203.0 1266.3,201.8 1267.8,200.9 1269.3,200.3 1270.8,200.1 1272.3,200.2 1273.8,200.6 1275.3,201.4 1276.8,202.5 1278.3,203.9 1279.8,205.7 1281.3,207.6 1282.8,209.8 1284.3,212.2 1285.8,214.8 1287.3,217.5 1288.8,220.3 1290.3,223.2 1291.8,226.0 1293.3,228.8 1294.8,231.5 1296.3,234.1 1297.8,236.5 1299.3,238.6 1300.8,240.5 1302.3,242.2 1303.8,243.5 1305.3,244.4 1306.8,245.1 1308.3,245.3 1309.8,245.2 1311.3,244.7 1312.8,243.8 1314.3,242.6 1315.8,241.1 1317.3,239.2 1318.8,237.1 1320.3,234.8 1321.8,232.3 1323.3,229.6 1324.8,226.8 1326.3,224.0 1327.8,221.2 1329.3,218.4 1330.8,215.6 1332.3,213.0 1333.8,210.5 1335.3,208.3 1336.8,206.2 1338.3,204.4 1339.8,202.9 1341.3,201.7 1342.8,200.8 1344.3,200.3 1345.8,200.1 1347.3,200.2 1348.8,200.7 1350.3,201.5 1351.8,202.6 1353.3,204.1 1354.8,205.8 1356.3,207.8 1357.8,210.0 1359.3,212.4 1360.8,215.0 1362.3,217.7 1363.8,220.5 1365.3,223.3 1366.8,226.2 1368.3,229.0 1369.8,231.7 1371.3,234.2 1372.8,236.6 1374.3,238.8 1375.8,240.7 1377.3,242.3 1378.8,243.6 1380.3,244.5 1381.8,245.1 1383.3,245.3 1384.8,245.1 1386.3,244.6 1387.8,243.7 1389.3,242.5 1390.8,241.0 1392.3,239.1 1393.8,237.0 1395.3,234.6 1396.8,232.1 1398.3,229.4 1399.8,226.7 1401.3,223.8 1402.8,221.0 1404.3,218.2 1405.8,215.4 1407.3,212.8 1408.8,210.4 1410.3,208.1 1411.8,206.1 1413.3,204.3 1414.8,202.8 1416.3,201.7 1417.8,200.8 1419.3,200.3 1420.8,200.1 1422.3,200.2 1423.8,200.7 1425.3,201.6 1426.8,202.7 1428.3,204.2 1429.8,205.9 1431.3,207.9 1432.8,210.1 1434.3,212.6 1435.8,215.2 1437.3,217.9 1438.8,220.7 1440.3,223.5 1441.8,226.4 1443.3,229.2 1444.8,231.8 1446.3,234.4 1447.8,236.8 1449.3,238.9 1450.8,240.8 1452.3,242.4 1453.8,243.6 1455.3,244.5 1456.8,245.1 1458.3,245.3 1459.8,245.1 1461.3,244.6 1462.8,243.7 1464.3,242.4 1465.8,240.8 1467.3,239.0 1468.8,236.8 1470.3,234.5 1471.8,231.9 1473.3,229.3 1474.8,226.5 1476.3,223.6 1477.8,220.8 1479.3,218.0 1480.8,215.3 1482.3,212.7 1483.8,210.2 1485.3,208.0 1486.8,206.0 1488.3,204.2 1489.8,202.8 1491.3,201.6 1492.8,200.8 1494.3,200.2 1495.8,200.1 1497.3,200.3 1498.8,200.8 1500.3,201.6 1501.8,202.8 1503.3,204.3 1504.8,206.0 1506.3,208.0 1507.8,210.3 1509.3,212.7 1510.8,215.3 1512.3,218.1 1513.8,220.9 1515.3,223.7 1516.8,226.6 1518.3,229.3 1519.8,232.0 1521.3,234.6 1522.8,236.9 1524.3,239.0 1525.8,240.9 1527.3,242.5 1528.8,243.7 1530.3,244.6 1531.8,245.1 1533.3,245.3 1534.8,245.1 1536.3,244.5 1537.8,243.6 1539.3,242.3 1540.8,240.7 1542.3,238.8 1543.8,236.7 1545.3,234.3 1546.8,231.8 1548.3,229.1 1549.8,226.3 1551.3,223.4 1552.8,220.6 1554.3,217.8 1555.8,215.1 1557.3,212.5 1558.8,210.1 1560.3,207.8 1561.8,205.8 1563.3,204.1 1564.8,202.7 1566.3,201.5 1567.8,200.7 1569.3,200.2 1570.8,200.1 1572.3,200.3 1573.8,200.8 1575.3,201.7 1576.8,202.9 1578.3,204.4 1579.8,206.2 1581.3,208.2 1582.8,210.4 1584.3,212.9 1585.8,215.5 1587.3,218.3 1588.8,221.1 1590.3,223.9 1591.8,226.7 1593.3,229.5 1594.8,232.2 1596.3,234.7 1597.8,237.1 1599.3,239.2 1600.8,241.0 1602.3,242.5 1603.8,243.8 1605.3,244.6 1606.8,245.2 1608.3,245.3 1609.8,245.1 1611.3,244.5 1612.8,243.5 1614.3,242.2 1615.8,240.6 1617.3,238.7 1618.8,236.5 1620.3,234.2 1621.8,231.6 1623.3,228.9 1624.8,226.1 1626.3,223.3 1627.8,220.4 1629.3,217.6 1630.8,214.9 1632.3,212.3 1633.8,209.9 1635.3,207.7 1636.8,205.7 1638.3,204.0 1639.8,202.6 1641.3,201.5 1642.8,200.7 1644.3,200.2 1645.8,200.1 1647.3,200.3 1648.8,200.9 1650.3,201.8 1651.8,203.0 1653.3,204.5 1654.8,206.3 1656.3,208.3 1657.8,210.6 1659.3,213.1 1660.8,215.7 1662.3,218.4 1663.8,221.3 1665.3,224.1"/>
<polyline stroke="#007f7f" points="916.8,222.2 918.3,226.3 919.8,230.4 921.3,234.4 922.8,238.1 924.3,241.5 925.8,244.4 927.3,246.6 928.8,248.4 930.3,249.7 931.8,250.6 933.3,251.1 934.8,251.1 936.3,250.6 937.8,249.7 939.3,248.3 940.8,246.5 942.3,244.4 943.8,241.8 945.3,239.0 946.8,235.9 948.3,232.6 949.8,229.2 951.3,225.6 952.8,222.1 954.3,218.5 955.8,215.0 957.3,211.7 958.8,208.5 960.3,205.5 961.8,202.9 963.3,200.5 964.8,198.5 966.3,196.8 967.8,195.6 969.3,194.8 970.8,194.3 972.3,194.4 973.8,194.8 975.3,195.7 976.8,197.0 978.3,198.7 979.8,200.7 981.3,203.1 982.8,205.8 984.3,208.8 985.8,212.0 987.3,215.4 988.8,218.8 990.3,222.4 991.8,226.0 993.3,229.5 994.8,232.9 996.3,236.2 997.8,239.3 999.3,242.1 1000.8,244.6 1002.3,246.7 1003.8,248.5 1005.3,249.8 1006.8,250.7 1008.3,251.1 1009.8,251.1 1011.3,250.6 1012.8,249.6 1014.3,248.2 1015.8,246.4 1017.3,244.2 1018.8,241.6 1020.3,238.8 1021.8,235.7 1023.3,232.4 1024.8,228.9 1026.3,225.4 1027.8,221.8 1029.3,218.3 1030.8,214.8 1032.3,211.4 1033.8,208.3 1035.3,205.4 1036.8,202.7 1038.3,200.4 1039.8,198.4 1041.3,196.7 1042.8,195.5 1044.3,194.7 1045.8,194.3 1047.3,194.4 1048.8,194.9 1050.3,195.8 1051.8,197.1 1053.3,198.8 1054.8,200.9 1056.3,203.3 1057.8,206.0 1059.3,209.0 1060.8,212.2 1062.3,215.6 1063.8,219.1 1065.3,222.6 1066.8,226.2 1068.3,229.7 1069.8,233.2 1071.3,236.4 1072.8,239.5 1074.3,242.3 1075.8,244.7 1077.3,246.8 1078.8,248.6 1080.3,249.9 1081.8,250.7 1083.3,251.1 1084.8,251.1 1086.3,250.5 1087.8,249.5 1089.3,248.1 1090.8,246.3 1092.3,244.0 1093.8,241.5 1095.3,238.6 1096.8,235.5 1098.3,232.2 1099.8,228.7 1101.3,225.2 1102.8,221.6 1104.3,218.0 1105.8,214.6 1107.3,211.2 1108.8,208.1 1110.3,205.2 1111.8,202.5 1113.3,200.2 1114.8,198.2 1116.3,196.7 1117.8,195.5 1119.3,194.7 1120.8,194.3 1122.3,194.4 1123.8,194.9 1125.3,195.8 1126.8,197.2 1128.3,198.9 1129.8,201.0 1131.3,203.5 1132.8,206.2 1134.3,209.2 1135.8,212.4 1137.3,215.8 1138.8,219.3 1140.3,222.9 1141.8,226.5 1143.3,230.0 1144.8,233.4 1146.3,236.6 1147.8,239.7 1149.3,242.4 1150.8,244.9 1152.3,247.0 1153.8,248.7 1155.3,249.9 1156.8,250.8 1158.3,251.1 1159.8,251.0 1161.3,250.5 1162.8,249.4 1164.3,248.0 1165.8,246.1 1167.3,243.9 1168.8,241.3 1170.3,238.4 1171.8,235.3 1173.3,231.9 1174.8,228.5 1176.3,224.9 1177.8,221.3 1179.3,217.8 1180.8,214.3 1182.3,211.0 1183.8,207.9 1185.3,205.0 1186.8,202.4 1188.3,200.1 1189.8,198.1 1191.3,196.6 1192.8,195.4 1194.3,194.6 1195.8,194.3 1197.3,194.4 1198.8,195.0 1200.3,195.9 1201.8,197.3 1203.3,199.1 1204.8,201.2 1206.3,203.6 1207.8,206.4 1209.3,209.4 1210.8,212.6 1212.3,216.0 1213.8,219.6 1215.3,223.1 1216.8,226.7 1218.3,230.2 1219.8,233.6 1221.3,236.9 1222.8,239.9 1224.3,242.6 1225.8,245.0 1227.3,247.1 1228.8,248.8 1230.3,250.0 1231.8,250.8 1233.3,251.1 1234.8,251.0 1236.3,250.4 1237.8,249.4 1239.3,247.9 1240.8,246.0 1242.3,243.7 1243.8,241.1 1245.3,238.2 1246.8,235.0 1248.3,231.7 1249.8,228.2 1251.3,224.7 1252.8,221.1 1254.3,217.6 1255.8,214.1 1257.3,210.8 1258.8,207.7 1260.3,204.8 1261.8,202.2 1263.3,199.9 1264.8,198.0 1266.3,196.5 1267.8,195.3 1269.3,194.6 1270.8,194.3 1272.3,194.4 1273.8,195.0 1275.3,196.0 1276.8,197.4 1278.3,199.2 1279.8,201.3 1281.3,203.8 1282.8,206.6 1284.3,209.6 1285.8,212.9 1287.3,216.3 1288.8,219.8 1290.3,223.4 1291.8,226.9 1293.3,230.4 1294.8,233.8 1296.3,237.1 1297.8,240.1 1299.3,242.8 1300.8,245.2 1302.3,247.2 1303.8,248.9 1305.3,250.1 1306.8,250.8 1308.3,251.2 1309.8,251.0 1311.3,250.4 1312.8,249.3 1314.3,247.8 1315.8,245.8 1317.3,243.5 1318.8,240.9 1320.3,238.0 1321.8,234.8 1323.3,231.5 1324.8,228.0 1326.3,224.4 1327.8,220.9 1329.3,217.3 1330.8,213.9 1332.3,210.6 1333.8,207.5 1335.3,204.6 1336.8,202.0 1338.3,199.8 1339.8,197.9 1341.3,196.4 1342.8,195.3 1344.3,194.6 1345.8,194.3 1347.3,194.5 1348.8,195.1 1350.3,196.1 1351.8,197.5 1353.3,199.3 1354.8,201.5 1356.3,204.0 1357.8,206.8 1359.3,209.8 1360.8,213.1 1362.3,216.5 1363.8,220.0 1365.3,223.6 1366.8,227.2 1368.3,230.7 1369.8,234.1 1371.3,237.3 1372.8,240.3 1374.3,243.0 1375.8,245.3 1377.3,247.3 1378.8,249.0 1380.3,250.1 1381.8,250.9 1383.3,251.2 1384.8,251.0 1386.3,250.3 1387.8,249.2 1389.3,247.6 1390.8,245.7 1392.3,243.4 1393.8,240.7 1395.3,237.8 1396.8,234.6 1398.3,231.3 1399.8,227.8 1401.3,224.2 1402.8,220.6 1404.3,217.1 1405.8,213.7 1407.3,210.4 1408.8,207.3 1410.3,204.4 1411.8,201.9 1413.3,199.7 1414.8,197.8 1416.3,196.3 1417.8,195.2 1419.3,194.5 1420.8,194.3 1422.3,194.5 1423.8,195.1 1425.3,196.2 1426.8,197.6 1428.3,199.4 1429.8,201.6 1431.3,204.2 1432.8,207.0 1434.3,210.0 1435.8,213.3 1437.3,216.7 1438.8,220.3 1440.3,223.8 1441.8,227.4 1443.3,230.9 1444.8,234.3 1446.3,237.5 1447.8,240.4 1449.3,243.1 1450.8,245.5 1452.3,247.5 1453.8,249.1 1455.3,250.2 1456.8,250.9 1458.3,251.2 1459.8,250.9 1461.3,250.2 1462.8,249.1 1464.3,247.5 1465.8,245.6 1467.3,243.2 1468.8,240.5 1470.3,237.6 1471.8,234.4 1473.3,231.0 1474.8,227.5 1476.3,224.0 1477.8,220.4 1479.3,216.9 1480.8,213.4 1482.3,210.2 1483.8,207.1 1485.3,204.3 1486.8,201.7 1488.3,199.5 1489.8,197.7 1491.3,196.2 1492.8,195.2 1494.3,194.5 1495.8,194.3 1497.3,194.5 1498.8,195.2 1500.3,196.2 1501.8,197.7 1503.3,199.6 1504.8,201.8 1506.3,204.3 1507.8,207.2 1509.3,210.3 1510.8,213.5 1512.3,217.0 1513.8,220.5 1515.3,224.1 1516.8,227.6 1518.3,231.1 1519.8,234.5 1521.3,237.7 1522.8,240.6 1524.3,243.3 1525.8,245.6 1527.3,247.6 1528.8,249.1 1530.3,250.3 1531.8,250.9 1533.3,251.2 1534.8,250.9 1536.3,250.2 1537.8,249.0 1539.3,247.4 1540.8,245.4 1542.3,243.0 1543.8,240.4 1545.3,237.4 1546.8,234.2 1548.3,230.8 1549.8,227.3 1551.3,223.7 1552.8,220.2 1554.3,216.6 1555.8,213.2 1557.3,209.9 1558.8,206.9 1560.3,204.1 1561.8,201.6 1563.3,199.4 1564.8,197.6 1566.3,196.1 1567.8,195.1 1569.3,194.5 1570.8,194.3 1572.3,194.6 1573.8,195.2 1575.3,196.3 1576.8,197.8 1578.3,199.7 1579.8,202.0 1581.3,204.5 1582.8,207.4 1584.3,210.5 1585.8,213.8 1587.3,217.2 1588.8,220.7 1590.3,224.3 1591.8,227.9 1593.3,231.4 1594.8,234.7 1596.3,237.9 1597.8,240.8 1599.3,243.5 1600.8,245.8 1602.3,247.7 1603.8,249.2 1605.3,250.3 1606.8,251.0 1608.3,251.2 1609.8,250.9 1611.3,250.1 1612.8,248.9 1614.3,247.3 1615.8,245.3 1617.3,242.9 1618.8,240.2 1620.3,237.2 1621.8,234.0 1623.3,230.6 1624.8,227.1 1626.3,223.5 1627.8,219.9 1629.3,216.4 1630.8,213.0 1632.3,209.7 1633.8,206.7 1635.3,203.9 1636.8,201.4 1638.3,199.3 1639.8,197.5 1641.3,196.0 1642.8,195.0 1644.3,194.5 1645.8,194.3 1647.3,194.6 1648.8,195.3 1650.3,196.4 1651.8,198.0 1653.3,199.9 1654.8,202.1 1656.3,204.7 1657.8,207.6 1659.3,210.7 1660.8,214.0 1662.3,217.4 1663.8,221.0 1665.3,224.6"/>
<polyline stroke="#ff00ff" points="916.8,222.0 918.3,227.3 919.8,232.5 921.3,237.5 922.8,242.2 924.3,246.5 925.8,250.3 927.3,253.1 928.8,255.3 930.3,257.1 931.8,258.3 933.3,258.8 934.8,258.8 936.3,258.2 937.8,257.0 939.3,255.3 940.8,253.0 942.3,250.2 943.8,247.0 945.3,243.4 946.8,239.5 948.3,235.3 949.8,230.9 951.3,226.4 952.8,221.9 954.3,217.4 955.8,213.0 957.3,208.7 958.8,204.7 960.3,201.0 961.8,197.6 963.3,194.7 964.8,192.1 966.3,190.0 967.8,188.5 969.3,187.4 970.8,186.9 972.3,186.9 973.8,187.5 975.3,188.6 976.8,190.2 978.3,192.3 979.8,194.9 981.3,197.9 982.8,201.3 984.3,205.1 985.8,209.1 987.3,213.4 988.8,217.8 990.3,222.3 991.8,226.9 993.3,231.3 994.8,235.7 996.3,239.9 997.8,243.8 999.3,247.3 1000.8,250.5 1002.3,253.2 1003.8,255.5 1005.3,257.2 1006.8,258.3 1008.3,258.9 1009.8,258.8 1011.3,258.2 1012.8,256.9 1014.3,255.1 1015.8,252.8 1017.3,250.0 1018.8,246.8 1020.3,243.1 1021.8,239.2 1023.3,235.0 1024.8,230.6 1026.3,226.1 1027.8,221.6 1029.3,217.1 1030.8,212.7 1032.3,208.4 1033.8,204.5 1035.3,200.8 1036.8,197.4 1038.3,194.5 1039.8,192.0 1041.3,189.9 1042.8,188.4 1044.3,187.4 1045.8,186.9 1047.3,187.0 1048.8,187.6 1050.3,188.7 1051.8,190.3 1053.3,192.5 1054.8,195.1 1056.3,198.2 1057.8,201.6 1059.3,205.4 1060.8,209.4 1062.3,213.7 1063.8,218.1 1065.3,222.6 1066.8,227.2 1068.3,231.6 1069.8,236.0 1071.3,240.1 1072.8,244.0 1074.3,247.6 1075.8,250.7 1077.3,253.4 1078.8,255.6 1080.3,257.3 1081.8,258.4 1083.3,258.9 1084.8,258.8 1086.3,258.1 1087.8,256.8 1089.3,255.0 1090.8,252.7 1092.3,249.8 1093.8,246.5 1095.3,242.9 1096.8,238.9 1098.3,234.7 1099.8,230.3 1101.3,225.8 1102.8,221.3 1104.3,216.8 1105.8,212.4 1107.3,208.2 1108.8,204.2 1110.3,200.5 1111.8,197.2 1113.3,194.3 1114.8,191.8 1116.3,189.8 1117.8,188.3 1119.3,187.3 1120.8,186.9 1122.3,187.0 1123.8,187.6 1125.3,188.8 1126.8,190.5 1128.3,192.7 1129.8,195.3 1131.3,198.4 1132.8,201.8 1134.3,205.6 1135.8,209.7 1137.3,214.0 1138.8,218.4 1140.3,222.9 1141.8,227.5 1143.3,231.9 1144.8,236.3 1146.3,240.4 1147.8,244.3 1149.3,247.8 1150.8,250.9 1152.3,253.6 1153.8,255.7 1155.3,257.4 1156.8,258.4 1158.3,258.9 1159.8,258.8 1161.3,258.0 1162.8,256.7 1164.3,254.9 1165.8,252.5 1167.3,249.6 1168.8,246.3 1170.3,242.6 1171.8,238.7 1173.3,234.4 1174.8,230.0 1176.3,225.5 1177.8,221.0 1179.3,216.5 1180.8,212.1 1182.3,207.9 1183.8,203.9 1185.3,200.3 1186.8,197.0 1188.3,194.1 1189.8,191.7 1191.3,189.7 1192.8,188.2 1194.3,187.3 1195.8,186.9 1197.3,187.0 1198.8,187.7 1200.3,188.9 1201.8,190.6 1203.3,192.8 1204.8,195.5 1206.3,198.6 1207.8,202.1 1209.3,205.9 1210.8,210.0 1212.3,214.3 1213.8,218.7 1215.3,223.2 1216.8,227.8 1218.3,232.2 1219.8,236.5 1221.3,240.7 1222.8,244.5 1224.3,248.0 1225.8,251.1 1227.3,253.7 1228.8,255.9 1230.3,257.5 1231.8,258.5 1233.3,258.9 1234.8,258.7 1236.3,258.0 1237.8,256.6 1239.3,254.7 1240.8,252.3 1242.3,249.4 1243.8,246.1 1245.3,242.4 1246.8,238.4 1248.3,234.1 1249.8,229.7 1251.3,225.2 1252.8,220.7 1254.3,216.2 1255.8,211.8 1257.3,207.6 1258.8,203.7 1260.3,200.1 1261.8,196.8 1263.3,193.9 1264.8,191.5 1266.3,189.6 1267.8,188.1 1269.3,187.2 1270.8,186.9 1272.3,187.0 1273.8,187.7 1275.3,189.0 1276.8,190.7 1278.3,193.0 1279.8,195.7 1281.3,198.8 1282.8,202.3 1284.3,206.1 1285.8,210.2 1287.3,214.6 1288.8,219.0 1290.3,223.5 1291.8,228.1 1293.3,232.5 1294.8,236.8 1296.3,240.9 1297.8,244.8 1299.3,248.2 1300.8,251.3 1302.3,253.9 1303.8,256.0 1305.3,257.5 1306.8,258.5 1308.3,258.9 1309.8,258.7 1311.3,257.9 1312.8,256.5 1314.3,254.6 1315.8,252.1 1317.3,249.2 1318.8,245.8 1320.3,242.1 1321.8,238.1 1323.3,233.8 1324.8,229.4 1326.3,224.9 1327.8,220.4 1329.3,215.9 1330.8,211.5 1332.3,207.4 1333.8,203.4 1335.3,199.8 1336.8,196.6 1338.3,193.8 1339.8,191.4 1341.3,189.5 1342.8,188.1 1344.3,187.2 1345.8,186.9 1347.3,187.1 1348.8,187.8 1350.3,189.1 1351.8,190.9 1353.3,193.2 1354.8,195.9 1356.3,199.0 1357.8,202.6 1359.3,206.4 1360.8,210.5 1362.3,214.8 1363.8,219.3 1365.3,223.8 1366.8,228.4 1368.3,232.8 1369.8,237.1 1371.3,241.2 1372.8,245.0 1374.3,248.4 1375.8,251.5 1377.3,254.0 1378.8,256.1 1380.3,257.6 1381.8,258.6 1383.3,258.9 1384.8,258.7 1386.3,257.8 1387.8,256.4 1389.3,254.4 1390.8,251.9 1392.3,249.0 1393.8,245.6 1395.3,241.9 1396.8,237.8 1398.3,233.5 1399.8,229.1 1401.3,224.6 1402.8,220.1 1404.3,215.6 1405.8,211.2 1407.3,207.1 1408.8,203.2 1410.3,199.6 1411.8,196.4 1413.3,193.6 1414.8,191.2 1416.3,189.4 1417.8,188.0 1419.3,187.1 1420.8,186.8 1422.3,187.1 1423.8,187.9 1425.3,189.2 1426.8,191.0 1428.3,193.3 1429.8,196.1 1431.3,199.3 1432.8,202.8 1434.3,206.7 1435.8,210.8 1437.3,215.1 1438.8,219.6 1440.3,224.1 1441.8,228.7 1443.3,233.1 1444.8,237.4 1446.3,241.5 1447.8,245.2 1449.3,248.7 1450.8,251.7 1452.3,254.2 1453.8,256.2 1455.3,257.7 1456.8,258.6 1458.3,258.9 1459.8,258.6 1461.3,257.7 1462.8,256.3 1464.3,254.3 1465.8,251.8 1467.3,248.8 1468.8,245.4 1470.3,241.6 1471.8,237.5 1473.3,233.3 1474.8,228.8 1476.3,224.3 1477.8,219.8 1479.3,215.3 1480.8,211.0 1482.3,206.8 1483.8,202.9 1485.3,199.4 1486.8,196.2 1488.3,193.4 1489.8,191.1 1491.3,189.2 1492.8,187.9 1494.3,187.1 1495.8,186.8 1497.3,187.1 1498.8,187.9 1500.3,189.3 1501.8,191.1 1503.3,193.5 1504.8,196.3 1506.3,199.5 1507.8,203.1 1509.3,206.9 1510.8,211.1 1512.3,215.4 1513.8,219.9 1515.3,224.4 1516.8,229.0 1518.3,233.4 1519.8,237.7 1521.3,241.7 1522.8,245.5 1524.3,248.9 1525.8,251.8 1527.3,254.4 1528.8,256.3 1530.3,257.8 1531.8,258.6 1533.3,258.9 1534.8,258.6 1536.3,257.7 1537.8,256.2 1539.3,254.1 1540.8,251.6 1542.3,248.6 1543.8,245.1 1545.3,241.3 1546.8,237.3 1548.3,233.0 1549.8,228.5 1551.3,224.0 1552.8,219.5 1554.3,215.0 1555.8,210.7 1557.3,206.6 1558.8,202.7 1560.3,199.2 1561.8,196.0 1563.3,193.2 1564.8,190.9 1566.3,189.1 1567.8,187.8 1569.3,187.1 1570.8,186.8 1572.3,187.2 1573.8,188.0 1575.3,189.4 1576.8,191.3 1578.3,193.7 1579.8,196.5 1581.3,199.7 1582.8,203.3 1584.3,207.2 1585.8,211.4 1587.3,215.7 1588.8,220.2 1590.3,224.7 1591.8,229.3 1593.3,233.7 1594.8,237.9 1596.3,242.0 1597.8,245.7 1599.3,249.1 1600.8,252.0 1602.3,254.5 1603.8,256.5 1605.3,257.9 1606.8,258.7 1608.3,258.9 1609.8,258.5 1611.3,257.6 1612.8,256.1 1614.3,254.0 1615.8,251.4 1617.3,248.3 1618.8,244.9 1620.3,241.1 1621.8,237.0 1623.3,232.7 1624.8,228.2 1626.3,223.7 1627.8,219.2 1629.3,214.7 1630.8,210.4 1632.3,206.3 1633.8,202.4 1635.3,198.9 1636.8,195.8 1638.3,193.1 1639.8,190.8 1641.3,189.0 1642.8,187.8 1644.3,187.0 1645.8,186.9 1647.3,187.2 1648.8,188.1 1650.3,189.5 1651.8,191.4 1653.3,193.8 1654.8,196.7 1656.3,199.9 1657.8,203.6 1659.3,207.5 1660.8,211.7 1662.3,216.0 1663.8,220.5 1665.3,225.0"/>
<polyline stroke="#00ff00" points="916.8,221.8 918.3,228.5 919.8,235.1 921.3,241.5 922.8,247.4 924.3,252.9 925.8,257.7 927.3,261.2 928.8,264.1 930.3,266.3 931.8,267.8 933.3,268.6 934.8,268.6 936.3,267.8 937.8,266.3 939.3,264.1 940.8,261.1 942.3,257.6 943.8,253.5 945.3,248.9 946.8,243.9 948.3,238.6 949.8,233.0 951.3,227.4 952.8,221.6 954.3,215.9 955.8,210.4 957.3,205.0 958.8,200.0 960.3,195.3 961.8,191.1 963.3,187.3 964.8,184.1 966.3,181.5 967.8,179.6 969.3,178.2 970.8,177.6 972.3,177.6 973.8,178.3 975.3,179.7 976.8,181.8 978.3,184.4 979.8,187.7 981.3,191.4 982.8,195.7 984.3,200.4 985.8,205.5 987.3,210.9 988.8,216.5 990.3,222.2 991.8,227.9 993.3,233.6 994.8,239.1 996.3,244.4 997.8,249.4 999.3,253.9 1000.8,258.0 1002.3,261.5 1003.8,264.3 1005.3,266.5 1006.8,267.9 1008.3,268.6 1009.8,268.5 1011.3,267.7 1012.8,266.2 1014.3,263.9 1015.8,260.9 1017.3,257.3 1018.8,253.2 1020.3,248.6 1021.8,243.6 1023.3,238.2 1024.8,232.7 1026.3,227.0 1027.8,221.2 1029.3,215.5 1030.8,210.0 1032.3,204.7 1033.8,199.6 1035.3,195.0 1036.8,190.8 1038.3,187.1 1039.8,183.9 1041.3,181.4 1042.8,179.5 1044.3,178.2 1045.8,177.6 1047.3,177.7 1048.8,178.4 1050.3,179.8 1051.8,181.9 1053.3,184.6 1054.8,187.9 1056.3,191.7 1057.8,196.0 1059.3,200.8 1060.8,205.9 1062.3,211.3 1063.8,216.8 1065.3,222.6 1066.8,228.3 1068.3,234.0 1069.8,239.5 1071.3,244.8 1072.8,249.7 1074.3,254.2 1075.8,258.2 1077.3,261.7 1078.8,264.5 1080.3,266.6 1081.8,268.0 1083.3,268.6 1084.8,268.5 1086.3,267.6 1087.8,266.0 1089.3,263.7 1090.8,260.7 1092.3,257.1 1093.8,252.9 1095.3,248.3 1096.8,243.2 1098.3,237.9 1099.8,232.3 1101.3,226.6 1102.8,220.9 1104.3,215.2 1105.8,209.6 1107.3,204.3 1108.8,199.3 1110.3,194.7 1111.8,190.5 1113.3,186.9 1114.8,183.7 1116.3,181.2 1117.8,179.3 1119.3,178.1 1120.8,177.6 1122.3,177.7 1123.8,178.5 1125.3,180.0 1126.8,182.1 1128.3,184.8 1129.8,188.1 1131.3,192.0 1132.8,196.3 1134.3,201.1 1135.8,206.2 1137.3,211.6 1138.8,217.2 1140.3,222.9 1141.8,228.7 1143.3,234.3 1144.8,239.9 1146.3,245.1 1147.8,250.0 1149.3,254.5 1150.8,258.5 1152.3,261.9 1153.8,264.6 1155.3,266.7 1156.8,268.0 1158.3,268.6 1159.8,268.5 1161.3,267.6 1162.8,265.9 1164.3,263.5 1165.8,260.5 1167.3,256.8 1168.8,252.6 1170.3,247.9 1171.8,242.9 1173.3,237.5 1174.8,231.9 1176.3,226.2 1177.8,220.5 1179.3,214.8 1180.8,209.3 1182.3,204.0 1183.8,199.0 1185.3,194.4 1186.8,190.3 1188.3,186.6 1189.8,183.6 1191.3,181.1 1192.8,179.2 1194.3,178.1 1195.8,177.5 1197.3,177.7 1198.8,178.6 1200.3,180.1 1201.8,182.2 1203.3,185.0 1204.8,188.4 1206.3,192.3 1207.8,196.6 1209.3,201.4 1210.8,206.6 1212.3,212.0 1213.8,217.6 1215.3,223.3 1216.8,229.1 1218.3,234.7 1219.8,240.2 1221.3,245.4 1222.8,250.3 1224.3,254.8 1225.8,258.7 1227.3,262.1 1228.8,264.8 1230.3,266.8 1231.8,268.1 1233.3,268.7 1234.8,268.4 1236.3,267.5 1237.8,265.8 1239.3,263.3 1240.8,260.3 1242.3,256.6 1243.8,252.3 1245.3,247.6 1246.8,242.5 1248.3,237.1 1249.8,231.5 1251.3,225.8 1252.8,220.1 1254.3,214.4 1255.8,208.9 1257.3,203.6 1258.8,198.7 1260.3,194.1 1261.8,190.0 1263.3,186.4 1264.8,183.4 1266.3,180.9 1267.8,179.1 1269.3,178.0 1270.8,177.5 1272.3,177.8 1273.8,178.6 1275.3,180.2 1276.8,182.4 1278.3,185.2 1279.8,188.6 1281.3,192.5 1282.8,196.9 1284.3,201.8 1285.8,206.9 1287.3,212.4 1288.8,218.0 1290.3,223.7 1291.8,229.4 1293.3,235.1 1294.8,240.6 1296.3,245.8 1297.8,250.6 1299.3,255.1 1300.8,259.0 1302.3,262.3 1303.8,264.9 1305.3,266.9 1306.8,268.2 1308.3,268.7 1309.8,268.4 1311.3,267.4 1312.8,265.6 1314.3,263.2 1315.8,260.0 1317.3,256.3 1318.8,252.0 1320.3,247.3 1321.8,242.2 1323.3,236.8 1324.8,231.2 1326.3,225.4 1327.8,219.7 1329.3,214.0 1330.8,208.5 1332.3,203.3 1333.8,198.4 1335.3,193.8 1336.8,189.7 1338.3,186.2 1339.8,183.2 1341.3,180.8 1342.8,179.0 1344.3,178.0 1345.8,177.5 1347.3,177.8 1348.8,178.7 1350.3,180.3 1351.8,182.6 1353.3,185.4 1354.8,188.9 1356.3,192.8 1357.8,197.3 1359.3,202.1 1360.8,207.3 1362.3,212.7 1363.8,218.4 1365.3,224.1 1366.8,229.8 1368.3,235.5 1369.8,240.9 1371.3,246.1 1372.8,250.9 1374.3,255.3 1375.8,259.2 1377.3,262.5 1378.8,265.1 1380.3,267.0 1381.8,268.2 1383.3,268.7 1384.8,268.4 1386.3,267.3 1387.8,265.5 1389.3,263.0 1390.8,259.8 1392.3,256.0 1393.8,251.7 1395.3,247.0 1396.8,241.8 1398.3,236.4 1399.8,230.8 1401.3,225.1 1402.8,219.3 1404.3,213.7 1405.8,208.2 1407.3,203.0 1408.8,198.0 1410.3,193.5 1411.8,189.5 1413.3,186.0 1414.8,183.0 1416.3,180.7 1417.8,179.0 1419.3,177.9 1420.8,177.5 1422.3,177.8 1423.8,178.8 1425.3,180.5 1426.8,182.7 1428.3,185.6 1429.8,189.1 1431.3,193.1 1432.8,197.6 1434.3,202.4 1435.8,207.6 1437.3,213.1 1438.8,218.7 1440.3,224.5 1441.8,230.2 1443.3,235.8 1444.8,241.3 1446.3,246.4 1447.8,251.3 1449.3,255.6 1450.8,259.4 1452.3,262.7 1453.8,265.3 1455.3,267.1 1456.8,268.3 1458.3,268.7 1459.8,268.3 1461.3,267.2 1462.8,265.3 1464.3,262.8 1465.8,259.6 1467.3,255.8 1468.8,251.4 1470.3,246.6 1471.8,241.5 1473.3,236.0 1474.8,230.4 1476.3,224.7 1477.8,218.9 1479.3,213.3 1480.8,207.8 1482.3,202.6 1483.8,197.7 1485.3,193.3 1486.8,189.2 1488.3,185.8 1489.8,182.8 1491.3,180.5 1492.8,178.9 1494.3,177.9 1495.8,177.5 1497.3,177.9 1498.8,178.9 1500.3,180.6 1501.8,182.9 1503.3,185.9 1504.8,189.4 1506.3,193.4 1507.8,197.9 1509.3,202.8 1510.8,208.0 1512.3,213.5 1513.8,219.1 1515.3,224.9 1516.8,230.6 1518.3,236.2 1519.8,241.6 1521.3,246.8 1522.8,251.6 1524.3,255.9 1525.8,259.7 1527.3,262.9 1528.8,265.4 1530.3,267.2 1531.8,268.3 1533.3,268.7 1534.8,268.3 1536.3,267.1 1537.8,265.2 1539.3,262.6 1540.8,259.3 1542.3,255.5 1543.8,251.1 1545.3,246.3 1546.8,241.1 1548.3,235.7 1549.8,230.0 1551.3,224.3 1552.8,218.6 1554.3,212.9 1555.8,207.5 1557.3,202.3 1558.8,197.4 1560.3,193.0 1561.8,189.0 1563.3,185.5 1564.8,182.7 1566.3,180.4 1567.8,178.8 1569.3,177.8 1570.8,177.5 1572.3,177.9 1573.8,179.0 1575.3,180.7 1576.8,183.1 1578.3,186.1 1579.8,189.6 1581.3,193.7 1582.8,198.2 1584.3,203.1 1585.8,208.4 1587.3,213.8 1588.8,219.5 1590.3,225.2 1591.8,231.0 1593.3,236.6 1594.8,242.0 1596.3,247.1 1597.8,251.9 1599.3,256.1 1600.8,259.9 1602.3,263.1 1603.8,265.5 1605.3,267.3 1606.8,268.4 1608.3,268.7 1609.8,268.2 1611.3,267.0 1612.8,265.0 1614.3,262.4 1615.8,259.1 1617.3,255.2 1618.8,250.8 1620.3,246.0 1621.8,240.8 1623.3,235.3 1624.8,229.6 1626.3,223.9 1627.8,218.2 1629.3,212.6 1630.8,207.1 1632.3,201.9 1633.8,197.1 1635.3,192.7 1636.8,188.7 1638.3,185.3 1639.8,182.5 1641.3,180.3 1642.8,178.7 1644.3,177.8 1645.8,177.5 1647.3,178.0 1648.8,179.1 1650.3,180.9 1651.8,183.3 1653.3,186.3 1654.8,189.9 1656.3,194.0 1657.8,198.5 1659.3,203.4 1660.8,208.7 1662.3,214.2 1663.8,219.9 1665.3,225.6"/>
<polyline stroke="#0033ff" points="916.8,221.9 918.3,230.1 919.8,238.3 921.3,246.1 922.8,253.4 924.3,260.1 925.8,266.0 927.3,270.3 928.8,273.8 930.3,276.5 931.8,278.3 933.3,279.2 934.8,279.2 936.3,278.2 937.8,276.4 939.3,273.7 940.8,270.1 942.3,265.8 943.8,260.8 945.3,255.2 946.8,249.1 948.3,242.6 949.8,235.8 951.3,228.7 952.8,221.7 954.3,214.6 955.8,207.7 957.3,201.1 958.8,194.8 960.3,189.0 961.8,183.7 963.3,179.0 964.8,175.0 966.3,171.7 967.8,169.3 969.3,167.6 970.8,166.8 972.3,166.8 973.8,167.7 975.3,169.5 976.8,172.0 978.3,175.4 979.8,179.4 981.3,184.2 982.8,189.5 984.3,195.4 985.8,201.7 987.3,208.4 988.8,215.3 990.3,222.4 991.8,229.4 993.3,236.4 994.8,243.2 996.3,249.7 997.8,255.8 999.3,261.3 1000.8,266.3 1002.3,270.5 1003.8,274.0 1005.3,276.6 1006.8,278.4 1008.3,279.2 1009.8,279.1 1011.3,278.1 1012.8,276.2 1014.3,273.5 1015.8,269.9 1017.3,265.5 1018.8,260.5 1020.3,254.8 1021.8,248.7 1023.3,242.1 1024.8,235.3 1026.3,228.3 1027.8,221.2 1029.3,214.2 1030.8,207.3 1032.3,200.7 1033.8,194.4 1035.3,188.6 1036.8,183.3 1038.3,178.7 1039.8,174.8 1041.3,171.6 1042.8,169.1 1044.3,167.5 1045.8,166.8 1047.3,166.9 1048.8,167.8 1050.3,169.6 1051.8,172.2 1053.3,175.6 1054.8,179.7 1056.3,184.5 1057.8,189.9 1059.3,195.8 1060.8,202.2 1062.3,208.8 1063.8,215.8 1065.3,222.8 1066.8,229.9 1068.3,236.9 1069.8,243.7 1071.3,250.1 1072.8,256.2 1074.3,261.7 1075.8,266.6 1077.3,270.8 1078.8,274.2 1080.3,276.8 1081.8,278.5 1083.3,279.2 1084.8,279.1 1086.3,278.0 1087.8,276.1 1089.3,273.3 1090.8,269.6 1092.3,265.2 1093.8,260.1 1095.3,254.4 1096.8,248.3 1098.3,241.7 1099.8,234.8 1101.3,227.8 1102.8,220.7 1104.3,213.7 1105.8,206.8 1107.3,200.2 1108.8,194.0 1110.3,188.2 1111.8,183.0 1113.3,178.4 1114.8,174.5 1116.3,171.4 1117.8,169.0 1119.3,167.5 1120.8,166.8 1122.3,166.9 1123.8,167.9 1125.3,169.8 1126.8,172.4 1128.3,175.9 1129.8,180.0 1131.3,184.8 1132.8,190.3 1134.3,196.2 1135.8,202.6 1137.3,209.3 1138.8,216.2 1140.3,223.3 1141.8,230.4 1143.3,237.4 1144.8,244.1 1146.3,250.6 1147.8,256.6 1149.3,262.0 1150.8,266.9 1152.3,271.0 1153.8,274.4 1155.3,276.9 1156.8,278.5 1158.3,279.3 1159.8,279.1 1161.3,277.9 1162.8,275.9 1164.3,273.0 1165.8,269.3 1167.3,264.9 1168.8,259.7 1170.3,254.0 1171.8,247.8 1173.3,241.2 1174.8,234.4 1176.3,227.3 1177.8,220.2 1179.3,213.2 1180.8,206.4 1182.3,199.8 1183.8,193.6 1185.3,187.9 1186.8,182.7 1188.3,178.1 1189.8,174.3 1191.3,171.2 1192.8,168.9 1194.3,167.4 1195.8,166.7 1197.3,167.0 1198.8,168.0 1200.3,169.9 1201.8,172.6 1203.3,176.1 1204.8,180.3 1206.3,185.2 1207.8,190.7 1209.3,196.6 1210.8,203.0 1212.3,209.8 1213.8,216.7 1215.3,223.8 1216.8,230.8 1218.3,237.8 1219.8,244.6 1221.3,251.0 1222.8,256.9 1224.3,262.4 1225.8,267.2 1227.3,271.3 1228.8,274.6 1230.3,277.0 1231.8,278.6 1233.3,279.3 1234.8,279.0 1236.3,277.8 1237.8,275.8 1239.3,272.8 1240.8,269.1 1242.3,264.6 1243.8,259.4 1245.3,253.6 1246.8,247.4 1248.3,240.8 1249.8,233.9 1251.3,226.9 1252.8,219.8 1254.3,212.8 1255.8,205.9 1257.3,199.4 1258.8,193.2 1260.3,187.5 1261.8,182.4 1263.3,177.9 1264.8,174.1 1266.3,171.0 1267.8,168.7 1269.3,167.3 1270.8,166.7 1272.3,167.0 1273.8,168.1 1275.3,170.1 1276.8,172.8 1278.3,176.4 1279.8,180.6 1281.3,185.5 1282.8,191.0 1284.3,197.0 1285.8,203.5 1287.3,210.2 1288.8,217.2 1290.3,224.2 1291.8,231.3 1293.3,238.3 1294.8,245.0 1296.3,251.4 1297.8,257.3 1299.3,262.7 1300.8,267.5 1302.3,271.5 1303.8,274.8 1305.3,277.2 1306.8,278.7 1308.3,279.3 1309.8,279.0 1311.3,277.7 1312.8,275.6 1314.3,272.6 1315.8,268.8 1317.3,264.2 1318.8,259.0 1320.3,253.2 1321.8,247.0 1323.3,240.3 1324.8,233.4 1326.3,226.4 1327.8,219.3 1329.3,212.3 1330.8,205.5 1332.3,198.9 1333.8,192.8 1335.3,187.1 1336.8,182.0 1338.3,177.6 1339.8,173.8 1341.3,170.8 1342.8,168.6 1344.3,167.3 1345.8,166.7 1347.3,167.0 1348.8,168.2 1350.3,170.2 1351.8,173.1 1353.3,176.6 1354.8,180.9 1356.3,185.9 1357.8,191.4 1359.3,197.5 1360.8,203.9 1362.3,210.7 1363.8,217.6 1365.3,224.7 1366.8,231.8 1368.3,238.7 1369.8,245.4 1371.3,251.8 1372.8,257.7 1374.3,263.1 1375.8,267.8 1377.3,271.8 1378.8,275.0 1380.3,277.3 1381.8,278.8 1383.3,279.3 1384.8,278.9 1386.3,277.6 1387.8,275.4 1389.3,272.4 1390.8,268.5 1392.3,263.9 1393.8,258.6 1395.3,252.8 1396.8,246.5 1398.3,239.9 1399.8,233.0 1401.3,225.9 1402.8,218.8 1404.3,211.8 1405.8,205.0 1407.3,198.5 1408.8,192.4 1410.3,186.8 1411.8,181.7 1413.3,177.3 1414.8,173.6 1416.3,170.7 1417.8,168.5 1419.3,167.2 1420.8,166.7 1422.3,167.1 1423.8,168.3 1425.3,170.4 1426.8,173.3 1428.3,176.9 1429.8,181.2 1431.3,186.2 1432.8,191.8 1434.3,197.9 1435.8,204.3 1437.3,211.1 1438.8,218.1 1440.3,225.2 1441.8,232.2 1443.3,239.2 1444.8,245.9 1446.3,252.2 1447.8,258.1 1449.3,263.4 1450.8,268.1 1452.3,272.0 1453.8,275.1 1455.3,277.4 1456.8,278.8 1458.3,279.3 1459.8,278.9 1461.3,277.5 1462.8,275.2 1464.3,272.1 1465.8,268.2 1467.3,263.6 1468.8,258.3 1470.3,252.4 1471.8,246.1 1473.3,239.4 1474.8,232.5 1476.3,225.4 1477.8,218.4 1479.3,211.4 1480.8,204.6 1482.3,198.1 1483.8,192.0 1485.3,186.4 1486.8,181.4 1488.3,177.0 1489.8,173.4 1491.3,170.5 1492.8,168.4 1494.3,167.1 1495.8,166.7 1497.3,167.2 1498.8,168.4 1500.3,170.6 1501.8,173.5 1503.3,177.2 1504.8,181.6 1506.3,186.6 1507.8,192.2 1509.3,198.3 1510.8,204.8 1512.3,211.6 1513.8,218.6 1515.3,225.7 1516.8,232.7 1518.3,239.6 1519.8,246.3 1521.3,252.6 1522.8,258.4 1524.3,263.7 1525.8,268.3 1527.3,272.2 1528.8,275.3 1530.3,277.5 1531.8,278.9 1533.3,279.3 1534.8,278.8 1536.3,277.4 1537.8,275.1 1539.3,271.9 1540.8,267.9 1542.3,263.2 1543.8,257.9 1545.3,252.0 1546.8,245.7 1548.3,239.0 1549.8,232.0 1551.3,225.0 1552.8,217.9 1554.3,210.9 1555.8,204.1 1557.3,197.7 1558.8,191.6 1560.3,186.1 1561.8,181.1 1563.3,176.8 1564.8,173.2 1566.3,170.3 1567.8,168.3 1569.3,167.1 1570.8,166.7 1572.3,167.2 1573.8,168.6 1575.3,170.7 1576.8,173.7 1578.3,177.4 1579.8,181.9 1581.3,187.0 1582.8,192.6 1584.3,198.7 1585.8,205.2 1587.3,212.1 1588.8,219.1 1590.3,226.1 1591.8,233.2 1593.3,240.1 1594.8,246.7 1596.3,253.0 1597.8,258.8 1599.3,264.1 1600.8,268.6 1602.3,272.5 1603.8,275.5 1605.3,277.7 1606.8,278.9 1608.3,279.3 1609.8,278.7 1611.3,277.2 1612.8,274.9 1614.3,271.6 1615.8,267.6 1617.3,262.9 1618.8,257.5 1620.3,251.6 1621.8,245.2 1623.3,238.5 1624.8,231.6 1626.3,224.5 1627.8,217.4 1629.3,210.5 1630.8,203.7 1632.3,197.3 1633.8,191.2 1635.3,185.7 1636.8,180.8 1638.3,176.5 1639.8,173.0 1641.3,170.2 1642.8,168.2 1644.3,167.0 1645.8,166.7 1647.3,167.3 1648.8,168.7 1650.3,170.9 1651.8,173.9 1653.3,177.7 1654.8,182.2 1656.3,187.3 1657.8,193.0 1659.3,199.1 1660.8,205.7 1662.3,212.5 1663.8,219.5 1665.3,226.6"/>
<polyline stroke="#ff3f00" points="916.8,221.8 918.3,232.1 919.8,242.3 921.3,252.0 922.8,261.2 924.3,269.5 925.8,276.8 927.3,282.2 928.8,286.6 930.3,289.9 931.8,292.2 933.3,293.3 934.8,293.3 936.3,292.1 937.8,289.8 939.3,286.5 940.8,282.0 942.3,276.7 943.8,270.4 945.3,263.4 946.8,255.8 948.3,247.6 949.8,239.1 951.3,230.4 952.8,221.5 954.3,212.7 955.8,204.1 957.3,195.8 958.8,187.9 960.3,180.6 961.8,174.0 963.3,168.1 964.8,163.1 966.3,159.0 967.8,155.9 969.3,153.9 970.8,152.8 972.3,152.9 973.8,154.0 975.3,156.2 976.8,159.4 978.3,163.6 979.8,168.7 981.3,174.6 982.8,181.3 984.3,188.7 985.8,196.6 987.3,204.9 988.8,213.6 990.3,222.4 991.8,231.2 993.3,240.0 994.8,248.5 996.3,256.6 997.8,264.1 999.3,271.1 1000.8,277.2 1002.3,282.5 1003.8,286.8 1005.3,290.1 1006.8,292.3 1008.3,293.4 1009.8,293.3 1011.3,292.0 1012.8,289.7 1014.3,286.2 1015.8,281.7 1017.3,276.3 1018.8,270.0 1020.3,262.9 1021.8,255.3 1023.3,247.1 1024.8,238.5 1026.3,229.8 1027.8,220.9 1029.3,212.1 1030.8,203.5 1032.3,195.2 1033.8,187.4 1035.3,180.2 1036.8,173.6 1038.3,167.8 1039.8,162.8 1041.3,158.8 1042.8,155.8 1044.3,153.8 1045.8,152.8 1047.3,152.9 1048.8,154.1 1050.3,156.4 1051.8,159.6 1053.3,163.9 1054.8,169.0 1056.3,175.0 1057.8,181.8 1059.3,189.2 1060.8,197.1 1062.3,205.5 1063.8,214.1 1065.3,223.0 1066.8,231.8 1068.3,240.5 1069.8,249.0 1071.3,257.1 1072.8,264.6 1074.3,271.5 1075.8,277.6 1077.3,282.8 1078.8,287.1 1080.3,290.3 1081.8,292.4 1083.3,293.4 1084.8,293.2 1086.3,291.9 1087.8,289.5 1089.3,285.9 1090.8,281.4 1092.3,275.9 1093.8,269.5 1095.3,262.4 1096.8,254.7 1098.3,246.5 1099.8,238.0 1101.3,229.2 1102.8,220.3 1104.3,211.5 1105.8,203.0 1107.3,194.7 1108.8,186.9 1110.3,179.7 1111.8,173.2 1113.3,167.4 1114.8,162.5 1116.3,158.6 1117.8,155.6 1119.3,153.7 1120.8,152.8 1122.3,153.0 1123.8,154.2 1125.3,156.6 1126.8,159.9 1128.3,164.2 1129.8,169.4 1131.3,175.5 1132.8,182.2 1134.3,189.7 1135.8,197.7 1137.3,206.1 1138.8,214.7 1140.3,223.6 1141.8,232.4 1143.3,241.1 1144.8,249.6 1146.3,257.6 1147.8,265.1 1149.3,271.9 1150.8,278.0 1152.3,283.1 1153.8,287.3 1155.3,290.5 1156.8,292.5 1158.3,293.4 1159.8,293.2 1161.3,291.8 1162.8,289.3 1164.3,285.7 1165.8,281.0 1167.3,275.5 1168.8,269.1 1170.3,261.9 1171.8,254.2 1173.3,246.0 1174.8,237.4 1176.3,228.6 1177.8,219.7 1179.3,211.0 1180.8,202.4 1182.3,194.2 1183.8,186.4 1185.3,179.2 1186.8,172.8 1188.3,167.1 1189.8,162.2 1191.3,158.3 1192.8,155.4 1194.3,153.6 1195.8,152.8 1197.3,153.0 1198.8,154.4 1200.3,156.8 1201.8,160.2 1203.3,164.5 1204.8,169.8 1206.3,175.9 1207.8,182.7 1209.3,190.2 1210.8,198.2 1212.3,206.6 1213.8,215.3 1215.3,224.1 1216.8,233.0 1218.3,241.7 1219.8,250.1 1221.3,258.1 1222.8,265.6 1224.3,272.4 1225.8,278.4 1227.3,283.5 1228.8,287.6 1230.3,290.6 1231.8,292.6 1233.3,293.4 1234.8,293.1 1236.3,291.6 1237.8,289.0 1239.3,285.4 1240.8,280.7 1242.3,275.1 1243.8,268.6 1245.3,261.4 1246.8,253.7 1248.3,245.4 1249.8,236.8 1251.3,228.0 1252.8,219.2 1254.3,210.4 1255.8,201.8 1257.3,193.6 1258.8,185.9 1260.3,178.8 1261.8,172.3 1263.3,166.7 1264.8,161.9 1266.3,158.1 1267.8,155.3 1269.3,153.5 1270.8,152.8 1272.3,153.1 1273.8,154.5 1275.3,156.9 1276.8,160.4 1278.3,164.8 1279.8,170.2 1281.3,176.3 1282.8,183.2 1284.3,190.7 1285.8,198.8 1287.3,207.2 1288.8,215.9 1290.3,224.7 1291.8,233.6 1293.3,242.3 1294.8,250.7 1296.3,258.6 1297.8,266.0 1299.3,272.8 1300.8,278.7 1302.3,283.8 1303.8,287.8 1305.3,290.8 1306.8,292.7 1308.3,293.5 1309.8,293.1 1311.3,291.5 1312.8,288.8 1314.3,285.1 1315.8,280.3 1317.3,274.7 1318.8,268.2 1320.3,260.9 1321.8,253.1 1323.3,244.8 1324.8,236.2 1326.3,227.4 1327.8,218.6 1329.3,209.8 1330.8,201.3 1332.3,193.1 1333.8,185.4 1335.3,178.3 1336.8,171.9 1338.3,166.4 1339.8,161.7 1341.3,157.9 1342.8,155.1 1344.3,153.4 1345.8,152.7 1347.3,153.2 1348.8,154.6 1350.3,157.1 1351.8,160.7 1353.3,165.2 1354.8,170.6 1356.3,176.8 1357.8,183.7 1359.3,191.2 1360.8,199.3 1362.3,207.8 1363.8,216.5 1365.3,225.3 1366.8,234.2 1368.3,242.8 1369.8,251.2 1371.3,259.1 1372.8,266.5 1374.3,273.2 1375.8,279.1 1377.3,284.1 1378.8,288.0 1380.3,291.0 1381.8,292.8 1383.3,293.5 1384.8,293.0 1386.3,291.4 1387.8,288.6 1389.3,284.8 1390.8,280.0 1392.3,274.3 1393.8,267.7 1395.3,260.4 1396.8,252.6 1398.3,244.3 1399.8,235.6 1401.3,226.8 1402.8,218.0 1404.3,209.2 1405.8,200.7 1407.3,192.6 1408.8,184.9 1410.3,177.9 1411.8,171.5 1413.3,166.0 1414.8,161.4 1416.3,157.7 1417.8,155.0 1419.3,153.3 1420.8,152.7 1422.3,153.2 1423.8,154.8 1425.3,157.4 1426.8,160.9 1428.3,165.5 1429.8,170.9 1431.3,177.2 1432.8,184.2 1434.3,191.8 1435.8,199.9 1437.3,208.3 1438.8,217.1 1440.3,225.9 1441.8,234.7 1443.3,243.4 1444.8,251.8 1446.3,259.7 1447.8,267.0 1449.3,273.6 1450.8,279.4 1452.3,284.4 1453.8,288.3 1455.3,291.1 1456.8,292.9 1458.3,293.5 1459.8,292.9 1461.3,291.2 1462.8,288.4 1464.3,284.5 1465.8,279.6 1467.3,273.8 1468.8,267.2 1470.3,259.9 1471.8,252.0 1473.3,243.7 1474.8,235.1 1476.3,226.2 1477.8,217.4 1479.3,208.7 1480.8,200.2 1482.3,192.0 1483.8,184.4 1485.3,177.4 1486.8,171.2 1488.3,165.7 1489.8,161.1 1491.3,157.5 1492.8,154.8 1494.3,153.3 1495.8,152.7 1497.3,153.3 1498.8,154.9 1500.3,157.6 1501.8,161.2 1503.3,165.8 1504.8,171.3 1506.3,177.6 1507.8,184.7 1509.3,192.3 1510.8,200.4 1512.3,208.9 1513.8,217.7 1515.3,226.5 1516.8,235.3 1518.3,244.0 1519.8,252.3 1521.3,260.2 1522.8,267.5 1524.3,274.0 1525.8,279.8 1527.3,284.7 1528.8,288.5 1530.3,291.3 1531.8,292.9 1533.3,293.5 1534.8,292.8 1536.3,291.1 1537.8,288.2 1539.3,284.2 1540.8,279.3 1542.3,273.4 1543.8,266.8 1545.3,259.4 1546.8,251.5 1548.3,243.1 1549.8,234.5 1551.3,225.6 1552.8,216.8 1554.3,208.1 1555.8,199.6 1557.3,191.5 1558.8,183.9 1560.3,177.0 1561.8,170.8 1563.3,165.3 1564.8,160.8 1566.3,157.3 1567.8,154.7 1569.3,153.2 1570.8,152.7 1572.3,153.4 1573.8,155.0 1575.3,157.8 1576.8,161.5 1578.3,166.2 1579.8,171.7 1581.3,178.1 1582.8,185.1 1584.3,192.8 1585.8,201.0 1587.3,209.5 1588.8,218.2 1590.3,227.1 1591.8,235.9 1593.3,244.5 1594.8,252.8 1596.3,260.7 1597.8,267.9 1599.3,274.4 1600.8,280.2 1602.3,284.9 1603.8,288.7 1605.3,291.4 1606.8,293.0 1608.3,293.5 1609.8,292.8 1611.3,290.9 1612.8,287.9 1614.3,283.9 1615.8,278.9 1617.3,273.0 1618.8,266.3 1620.3,258.9 1621.8,251.0 1623.3,242.6 1624.8,233.9 1626.3,225.1 1627.8,216.2 1629.3,207.5 1630.8,199.1 1632.3,191.0 1633.8,183.5 1635.3,176.6 1636.8,170.4 1638.3,165.0 1639.8,160.6 1641.3,157.1 1642.8,154.6 1644.3,153.1 1645.8,152.7 1647.3,153.4 1648.8,155.2 1650.3,158.0 1651.8,161.8 1653.3,166.5 1654.8,172.1 1656.3,178.5 1657.8,185.6 1659.3,193.3 1660.8,201.5 1662.3,210.1 1663.8,218.8 1665.3,227.7"/>
<polyline stroke="#007f00" points="916.8,222.7 918.3,235.2 919.8,247.5 921.3,259.1 922.8,270.0 924.3,279.9 925.8,288.4 927.3,294.7 928.8,299.8 930.3,303.7 931.8,306.4 933.3,307.7 934.8,307.6 936.3,306.3 937.8,303.6 939.3,299.7 940.8,294.5 942.3,288.2 943.8,280.9 945.3,272.7 946.8,263.6 948.3,253.9 949.8,243.7 951.3,233.1 952.8,222.4 954.3,211.6 955.8,201.0 957.3,190.8 958.8,181.0 960.3,171.9 961.8,163.5 963.3,156.1 964.8,149.8 966.3,144.6 967.8,140.6 969.3,138.0 970.8,136.7 972.3,136.7 973.8,138.2 975.3,140.9 976.8,145.0 978.3,150.3 979.8,156.8 981.3,164.3 982.8,172.7 984.3,181.9 985.8,191.7 987.3,202.1 988.8,212.7 990.3,223.4 991.8,234.2 993.3,244.7 994.8,254.9 996.3,264.5 997.8,273.5 999.3,281.7 1000.8,288.9 1002.3,295.1 1003.8,300.1 1005.3,303.9 1006.8,306.5 1008.3,307.7 1009.8,307.6 1011.3,306.2 1012.8,303.4 1014.3,299.4 1015.8,294.1 1017.3,287.8 1018.8,280.4 1020.3,272.1 1021.8,263.0 1023.3,253.2 1024.8,243.0 1026.3,232.4 1027.8,221.7 1029.3,210.9 1030.8,200.3 1032.3,190.1 1033.8,180.4 1035.3,171.3 1036.8,163.0 1038.3,155.7 1039.8,149.4 1041.3,144.3 1042.8,140.4 1044.3,137.8 1045.8,136.6 1047.3,136.8 1048.8,138.3 1050.3,141.2 1051.8,145.3 1053.3,150.7 1054.8,157.3 1056.3,164.8 1057.8,173.3 1059.3,182.5 1060.8,192.4 1062.3,202.8 1063.8,213.4 1065.3,224.2 1066.8,234.9 1068.3,245.4 1069.8,255.5 1071.3,265.1 1072.8,274.1 1074.3,282.2 1075.8,289.3 1077.3,295.5 1078.8,300.4 1080.3,304.1 1081.8,306.6 1083.3,307.7 1084.8,307.5 1086.3,306.0 1087.8,303.2 1089.3,299.1 1090.8,293.8 1092.3,287.3 1093.8,279.9 1095.3,271.5 1096.8,262.4 1098.3,252.6 1099.8,242.3 1101.3,231.7 1102.8,220.9 1104.3,210.2 1105.8,199.6 1107.3,189.4 1108.8,179.7 1110.3,170.7 1111.8,162.5 1113.3,155.2 1114.8,149.0 1116.3,144.0 1117.8,140.2 1119.3,137.7 1120.8,136.6 1122.3,136.8 1123.8,138.5 1125.3,141.4 1126.8,145.7 1128.3,151.1 1129.8,157.7 1131.3,165.4 1132.8,173.9 1134.3,183.2 1135.8,193.1 1137.3,203.5 1138.8,214.1 1140.3,224.9 1141.8,235.6 1143.3,246.1 1144.8,256.2 1146.3,265.8 1147.8,274.6 1149.3,282.7 1150.8,289.8 1152.3,295.8 1153.8,300.7 1155.3,304.4 1156.8,306.7 1158.3,307.8 1159.8,307.5 1161.3,305.9 1162.8,302.9 1164.3,298.7 1165.8,293.4 1167.3,286.9 1168.8,279.3 1170.3,270.9 1171.8,261.7 1173.3,251.9 1174.8,241.6 1176.3,231.0 1177.8,220.2 1179.3,209.5 1180.8,198.9 1182.3,188.8 1183.8,179.1 1185.3,170.1 1186.8,162.0 1188.3,154.8 1189.8,148.6 1191.3,143.7 1192.8,140.0 1194.3,137.6 1195.8,136.6 1197.3,136.9 1198.8,138.6 1200.3,141.7 1201.8,146.0 1203.3,151.5 1204.8,158.2 1206.3,165.9 1207.8,174.5 1209.3,183.8 1210.8,193.8 1212.3,204.2 1213.8,214.8 1215.3,225.6 1216.8,236.3 1218.3,246.8 1219.8,256.9 1221.3,266.4 1222.8,275.2 1224.3,283.2 1225.8,290.2 1227.3,296.2 1228.8,301.0 1230.3,304.5 1231.8,306.8 1233.3,307.8 1234.8,307.4 1236.3,305.7 1237.8,302.7 1239.3,298.4 1240.8,293.0 1242.3,286.4 1243.8,278.8 1245.3,270.3 1246.8,261.1 1248.3,251.2 1249.8,240.9 1251.3,230.3 1252.8,219.5 1254.3,208.8 1255.8,198.3 1257.3,188.1 1258.8,178.5 1260.3,169.5 1261.8,161.4 1263.3,154.3 1264.8,148.3 1266.3,143.4 1267.8,139.8 1269.3,137.5 1270.8,136.5 1272.3,137.0 1273.8,138.8 1275.3,141.9 1276.8,146.3 1278.3,151.9 1279.8,158.7 1281.3,166.5 1282.8,175.1 1284.3,184.5 1285.8,194.5 1287.3,204.9 1288.8,215.5 1290.3,226.3 1291.8,237.0 1293.3,247.5 1294.8,257.5 1296.3,267.0 1297.8,275.8 1299.3,283.7 1300.8,290.7 1302.3,296.5 1303.8,301.3 1305.3,304.7 1306.8,306.9 1308.3,307.8 1309.8,307.3 1311.3,305.5 1312.8,302.4 1314.3,298.1 1315.8,292.6 1317.3,285.9 1318.8,278.3 1320.3,269.7 1321.8,260.4 1323.3,250.5 1324.8,240.2 1326.3,229.6 1327.8,218.8 1329.3,208.1 1330.8,197.6 1332.3,187.4 1333.8,177.9 1335.3,169.0 1336.8,160.9 1338.3,153.9 1339.8,147.9 1341.3,143.1 1342.8,139.6 1344.3,137.4 1345.8,136.5 1347.3,137.1 1348.8,138.9 1350.3,142.2 1351.8,146.7 1353.3,152.4 1354.8,159.2 1356.3,167.0 1357.8,175.7 1359.3,185.1 1360.8,195.1 1362.3,205.6 1363.8,216.3 1365.3,227.0 1366.8,237.7 1368.3,248.1 1369.8,258.2 1371.3,267.6 1372.8,276.3 1374.3,284.2 1375.8,291.1 1377.3,296.9 1378.8,301.5 1380.3,304.9 1381.8,307.0 1383.3,307.8 1384.8,307.3 1386.3,305.4 1387.8,302.2 1389.3,297.8 1390.8,292.1 1392.3,285.4 1393.8,277.7 1395.3,269.1 1396.8,259.8 1398.3,249.9 1399.8,239.5 1401.3,228.8 1402.8,218.1 1404.3,207.4 1405.8,196.9 1407.3,186.8 1408.8,177.2 1410.3,168.4 1411.8,160.4 1413.3,153.4 1414.8,147.5 1416.3,142.8 1417.8,139.4 1419.3,137.3 1420.8,136.5 1422.3,137.1 1423.8,139.1 1425.3,142.4 1426.8,147.0 1428.3,152.8 1429.8,159.7 1431.3,167.6 1432.8,176.3 1434.3,185.8 1435.8,195.8 1437.3,206.3 1438.8,217.0 1440.3,227.7 1441.8,238.4 1443.3,248.8 1444.8,258.8 1446.3,268.2 1447.8,276.9 1449.3,284.7 1450.8,291.5 1452.3,297.2 1453.8,301.8 1455.3,305.1 1456.8,307.1 1458.3,307.8 1459.8,307.2 1461.3,305.2 1462.8,301.9 1464.3,297.4 1465.8,291.7 1467.3,284.9 1468.8,277.2 1470.3,268.5 1471.8,259.2 1473.3,249.2 1474.8,238.8 1476.3,228.1 1477.8,217.4 1479.3,206.7 1480.8,196.2 1482.3,186.1 1483.8,176.6 1485.3,167.9 1486.8,159.9 1488.3,153.0 1489.8,147.2 1491.3,142.6 1492.8,139.2 1494.3,137.2 1495.8,136.5 1497.3,137.2 1498.8,139.3 1500.3,142.7 1501.8,147.4 1503.3,153.2 1504.8,160.2 1506.3,168.1 1507.8,176.9 1509.3,186.4 1510.8,196.5 1512.3,207.0 1513.8,217.7 1515.3,228.5 1516.8,239.1 1518.3,249.5 1519.8,259.5 1521.3,268.8 1522.8,277.4 1524.3,285.2 1525.8,291.9 1527.3,297.6 1528.8,302.1 1530.3,305.3 1531.8,307.2 1533.3,307.8 1534.8,307.1 1536.3,305.0 1537.8,301.7 1539.3,297.1 1540.8,291.3 1542.3,284.5 1543.8,276.6 1545.3,267.9 1546.8,258.5 1548.3,248.5 1549.8,238.1 1551.3,227.4 1552.8,216.6 1554.3,205.9 1555.8,195.5 1557.3,185.5 1558.8,176.0 1560.3,167.3 1561.8,159.4 1563.3,152.6 1564.8,146.8 1566.3,142.3 1567.8,139.0 1569.3,137.1 1570.8,136.5 1572.3,137.3 1573.8,139.5 1575.3,143.0 1576.8,147.7 1578.3,153.6 1579.8,160.7 1581.3,168.7 1582.8,177.5 1584.3,187.1 1585.8,197.2 1587.3,207.7 1588.8,218.4 1590.3,229.2 1591.8,239.8 1593.3,250.2 1594.8,260.1 1596.3,269.4 1597.8,278.0 1599.3,285.6 1600.8,292.3 1602.3,297.9 1603.8,302.3 1605.3,305.5 1606.8,307.3 1608.3,307.8 1609.8,307.0 1611.3,304.8 1612.8,301.4 1614.3,296.7 1615.8,290.9 1617.3,284.0 1618.8,276.1 1620.3,267.3 1621.8,257.9 1623.3,247.8 1624.8,237.4 1626.3,226.7 1627.8,215.9 1629.3,205.2 1630.8,194.8 1632.3,184.8 1633.8,175.4 1635.3,166.7 1636.8,159.0 1638.3,152.2 1639.8,146.5 1641.3,142.0 1642.8,138.9 1644.3,137.0 1645.8,136.5 1647.3,137.4 1648.8,139.7 1650.3,143.2 1651.8,148.1 1653.3,154.1 1654.8,161.2 1656.3,169.2 1657.8,178.1 1659.3,187.7 1660.8,197.9 1662.3,208.4 1663.8,219.1 1665.3,229.9"/>
<polyline stroke="#007f7f" points="916.8,225.7 918.3,240.4 919.8,254.6 921.3,267.9 922.8,280.0 924.3,290.9 925.8,300.2 927.3,307.0 928.8,312.4 930.3,316.6 931.8,319.3 933.3,320.7 934.8,320.7 936.3,319.3 937.8,316.5 939.3,312.3 940.8,306.8 942.3,300.0 943.8,292.1 945.3,283.0 946.8,272.9 948.3,261.9 949.8,250.2 951.3,238.0 952.8,225.3 954.3,212.4 955.8,199.6 957.3,186.9 958.8,174.8 960.3,163.3 961.8,152.6 963.3,143.1 964.8,134.9 966.3,128.1 967.8,122.9 969.3,119.4 970.8,117.7 972.3,117.8 973.8,119.7 975.3,123.3 976.8,128.7 978.3,135.6 979.8,144.0 981.3,153.6 982.8,164.3 984.3,175.9 985.8,188.2 987.3,200.8 988.8,213.7 990.3,226.5 991.8,239.2 993.3,251.4 994.8,263.0 996.3,273.9 997.8,283.9 999.3,292.9 1000.8,300.7 1002.3,307.4 1003.8,312.7 1005.3,316.8 1006.8,319.5 1008.3,320.7 1009.8,320.6 1011.3,319.1 1012.8,316.2 1014.3,312.0 1015.8,306.4 1017.3,299.5 1018.8,291.5 1020.3,282.3 1021.8,272.2 1023.3,261.2 1024.8,249.4 1026.3,237.1 1027.8,224.4 1029.3,211.6 1030.8,198.7 1032.3,186.1 1033.8,174.0 1035.3,162.5 1036.8,152.0 1038.3,142.5 1039.8,134.4 1041.3,127.7 1042.8,122.6 1044.3,119.2 1045.8,117.6 1047.3,117.9 1048.8,119.9 1050.3,123.6 1051.8,129.1 1053.3,136.1 1054.8,144.6 1056.3,154.3 1057.8,165.1 1059.3,176.7 1060.8,189.0 1062.3,201.7 1063.8,214.6 1065.3,227.4 1066.8,240.0 1068.3,252.2 1069.8,263.8 1071.3,274.6 1072.8,284.5 1074.3,293.4 1075.8,301.2 1077.3,307.8 1078.8,313.1 1080.3,317.0 1081.8,319.6 1083.3,320.8 1084.8,320.6 1086.3,319.0 1087.8,316.0 1089.3,311.6 1090.8,306.0 1092.3,299.0 1093.8,290.9 1095.3,281.7 1096.8,271.5 1098.3,260.4 1099.8,248.6 1101.3,236.3 1102.8,223.6 1104.3,210.7 1105.8,197.9 1107.3,185.3 1108.8,173.2 1110.3,161.8 1111.8,151.3 1113.3,141.9 1114.8,133.9 1116.3,127.3 1117.8,122.3 1119.3,119.1 1120.8,117.6 1122.3,117.9 1123.8,120.1 1125.3,124.0 1126.8,129.5 1128.3,136.7 1129.8,145.2 1131.3,155.0 1132.8,165.8 1134.3,177.5 1135.8,189.8 1137.3,202.5 1138.8,215.4 1140.3,228.2 1141.8,240.8 1143.3,253.0 1144.8,264.5 1146.3,275.3 1147.8,285.2 1149.3,294.0 1150.8,301.7 1152.3,308.2 1153.8,313.4 1155.3,317.2 1156.8,319.7 1158.3,320.8 1159.8,320.5 1161.3,318.8 1162.8,315.7 1164.3,311.3 1165.8,305.5 1167.3,298.5 1168.8,290.3 1170.3,281.0 1171.8,270.8 1173.3,259.7 1174.8,247.8 1176.3,235.5 1177.8,222.7 1179.3,209.9 1180.8,197.0 1182.3,184.5 1183.8,172.4 1185.3,161.1 1186.8,150.6 1188.3,141.4 1189.8,133.4 1191.3,126.9 1192.8,122.1 1194.3,118.9 1195.8,117.6 1197.3,118.0 1198.8,120.3 1200.3,124.3 1201.8,130.0 1203.3,137.2 1204.8,145.8 1206.3,155.7 1207.8,166.6 1209.3,178.3 1210.8,190.7 1212.3,203.4 1213.8,216.3 1215.3,229.1 1216.8,241.7 1218.3,253.8 1219.8,265.3 1221.3,276.0 1222.8,285.8 1224.3,294.5 1225.8,302.2 1227.3,308.6 1228.8,313.7 1230.3,317.4 1231.8,319.8 1233.3,320.8 1234.8,320.4 1236.3,318.6 1237.8,315.5 1239.3,310.9 1240.8,305.1 1242.3,298.0 1243.8,289.7 1245.3,280.4 1246.8,270.1 1248.3,258.9 1249.8,247.0 1251.3,234.6 1252.8,221.9 1254.3,209.0 1255.8,196.2 1257.3,183.6 1258.8,171.6 1260.3,160.3 1261.8,150.0 1263.3,140.8 1264.8,132.9 1266.3,126.6 1267.8,121.8 1269.3,118.8 1270.8,117.5 1272.3,118.1 1273.8,120.5 1275.3,124.6 1276.8,130.4 1278.3,137.7 1279.8,146.4 1281.3,156.4 1282.8,167.4 1284.3,179.1 1285.8,191.5 1287.3,204.2 1288.8,217.1 1290.3,229.9 1291.8,242.5 1293.3,254.6 1294.8,266.0 1296.3,276.7 1297.8,286.4 1299.3,295.1 1300.8,302.6 1302.3,308.9 1303.8,314.0 1305.3,317.6 1306.8,319.9 1308.3,320.9 1309.8,320.4 1311.3,318.5 1312.8,315.2 1314.3,310.6 1315.8,304.7 1317.3,297.5 1318.8,289.1 1320.3,279.7 1321.8,269.3 1323.3,258.1 1324.8,246.2 1326.3,233.8 1327.8,221.0 1329.3,208.1 1330.8,195.3 1332.3,182.8 1333.8,170.8 1335.3,159.6 1336.8,149.3 1338.3,140.2 1339.8,132.5 1341.3,126.2 1342.8,121.5 1344.3,118.6 1345.8,117.5 1347.3,118.2 1348.8,120.7 1350.3,124.9 1351.8,130.8 1353.3,138.3 1354.8,147.1 1356.3,157.1 1357.8,168.1 1359.3,179.9 1360.8,192.3 1362.3,205.1 1363.8,218.0 1365.3,230.8 1366.8,243.3 1368.3,255.4 1369.8,266.8 1371.3,277.4 1372.8,287.0 1374.3,295.6 1375.8,303.1 1377.3,309.3 1378.8,314.2 1380.3,317.8 1381.8,320.0 1383.3,320.9 1384.8,320.3 1386.3,318.3 1387.8,314.9 1389.3,310.2 1390.8,304.2 1392.3,297.0 1393.8,288.6 1395.3,279.1 1396.8,268.6 1398.3,257.3 1399.8,245.4 1401.3,232.9 1402.8,220.2 1404.3,207.3 1405.8,194.5 1407.3,182.0 1408.8,170.1 1410.3,158.9 1411.8,148.7 1413.3,139.7 1414.8,132.0 1416.3,125.8 1417.8,121.3 1419.3,118.5 1420.8,117.5 1422.3,118.3 1423.8,120.9 1425.3,125.3 1426.8,131.3 1428.3,138.8 1429.8,147.7 1431.3,157.8 1432.8,168.9 1434.3,180.8 1435.8,193.2 1437.3,206.0 1438.8,218.8 1440.3,231.6 1441.8,244.1 1443.3,256.1 1444.8,267.5 1446.3,278.0 1447.8,287.6 1449.3,296.2 1450.8,303.5 1452.3,309.7 1453.8,314.5 1455.3,318.0 1456.8,320.1 1458.3,320.9 1459.8,320.2 1461.3,318.1 1462.8,314.7 1464.3,309.9 1465.8,303.8 1467.3,296.4 1468.8,288.0 1470.3,278.4 1471.8,267.9 1473.3,256.6 1474.8,244.6 1476.3,232.1 1477.8,219.3 1479.3,206.4 1480.8,193.6 1482.3,181.2 1483.8,169.3 1485.3,158.2 1486.8,148.1 1488.3,139.1 1489.8,131.5 1491.3,125.5 1492.8,121.1 1494.3,118.4 1495.8,117.5 1497.3,118.4 1498.8,121.2 1500.3,125.6 1501.8,131.7 1503.3,139.4 1504.8,148.3 1506.3,158.5 1507.8,169.7 1509.3,181.6 1510.8,194.0 1512.3,206.8 1513.8,219.7 1515.3,232.5 1516.8,245.0 1518.3,256.9 1519.8,268.2 1521.3,278.7 1522.8,288.2 1524.3,296.7 1525.8,304.0 1527.3,310.0 1528.8,314.8 1530.3,318.2 1531.8,320.2 1533.3,320.9 1534.8,320.1 1536.3,317.9 1537.8,314.4 1539.3,309.5 1540.8,303.3 1542.3,295.9 1543.8,287.3 1545.3,277.7 1546.8,267.2 1548.3,255.8 1549.8,243.8 1551.3,231.3 1552.8,218.5 1554.3,205.6 1555.8,192.8 1557.3,180.4 1558.8,168.5 1560.3,157.5 1561.8,147.4 1563.3,138.6 1564.8,131.1 1566.3,125.1 1567.8,120.8 1569.3,118.3 1570.8,117.5 1572.3,118.6 1573.8,121.4 1575.3,126.0 1576.8,132.2 1578.3,139.9 1579.8,149.0 1581.3,159.2 1582.8,170.4 1584.3,182.4 1585.8,194.9 1587.3,207.7 1588.8,220.6 1590.3,233.3 1591.8,245.8 1593.3,257.7 1594.8,268.9 1596.3,279.4 1597.8,288.8 1599.3,297.2 1600.8,304.4 1602.3,310.4 1603.8,315.1 1605.3,318.4 1606.8,320.3 1608.3,320.9 1609.8,320.0 1611.3,317.7 1612.8,314.1 1614.3,309.1 1615.8,302.9 1617.3,295.4 1618.8,286.7 1620.3,277.0 1621.8,266.4 1623.3,255.0 1624.8,242.9 1626.3,230.4 1627.8,217.6 1629.3,204.7 1630.8,192.0 1632.3,179.6 1633.8,167.8 1635.3,156.8 1636.8,146.8 1638.3,138.0 1639.8,130.6 1641.3,124.8 1642.8,120.6 1644.3,118.2 1645.8,117.5 1647.3,118.7 1648.8,121.7 1650.3,126.4 1651.8,132.7 1653.3,140.5 1654.8,149.6 1656.3,159.9 1657.8,171.2 1659.3,183.2 1660.8,195.7 1662.3,208.5 1663.8,221.4 1665.3,234.2"/>
</g>
<text class="t" font-size="16" fill="#007f00" transform="translate(906.8,116.9) scale(0.97,1)" text-anchor="end">3V</text>
<text class="t" font-size="16" fill="#007f00" transform="translate(906.8,154.2) scale(0.97,1)" text-anchor="end">2V</text>
<text class="t" font-size="16" fill="#007f00" transform="translate(906.8,191.5) scale(0.97,1)" text-anchor="end">1V</text>
<text class="t" font-size="16" fill="#007f00" transform="translate(906.8,228.8) scale(0.97,1)" text-anchor="end">0V</text>
<text class="t" font-size="16" fill="#007f00" transform="translate(906.8,266.0) scale(0.97,1)" text-anchor="end">-1V</text>
<text class="t" font-size="16" fill="#007f00" transform="translate(906.8,303.3) scale(0.97,1)" text-anchor="end">-2V</text>
<text class="t" font-size="16" fill="#007f00" transform="translate(906.8,340.6) scale(0.97,1)" text-anchor="end">-3V</text>
<text class="t" font-size="16" fill="#007f00" transform="translate(916.8,355.5) scale(0.94,1)" text-anchor="middle">0ms</text>
<text class="t" font-size="16" fill="#007f00" transform="translate(991.7,355.5) scale(0.94,1)" text-anchor="middle">1ms</text>
<text class="t" font-size="16" fill="#007f00" transform="translate(1066.6,355.5) scale(0.94,1)" text-anchor="middle">2ms</text>
<text class="t" font-size="16" fill="#007f00" transform="translate(1141.5,355.5) scale(0.94,1)" text-anchor="middle">3ms</text>
<text class="t" font-size="16" fill="#007f00" transform="translate(1216.4,355.5) scale(0.94,1)" text-anchor="middle">4ms</text>
<text class="t" font-size="16" fill="#007f00" transform="translate(1291.3,355.5) scale(0.94,1)" text-anchor="middle">5ms</text>
<text class="t" font-size="16" fill="#007f00" transform="translate(1366.2,355.5) scale(0.94,1)" text-anchor="middle">6ms</text>
<text class="t" font-size="16" fill="#007f00" transform="translate(1441.1,355.5) scale(0.94,1)" text-anchor="middle">7ms</text>
<text class="t" font-size="16" fill="#007f00" transform="translate(1516.0,355.5) scale(0.94,1)" text-anchor="middle">8ms</text>
<text class="t" font-size="16" fill="#007f00" transform="translate(1590.9,355.5) scale(0.94,1)" text-anchor="middle">9ms</text>
<text class="t" font-size="16" fill="#007f00" transform="translate(1665.8,355.5) scale(0.94,1)" text-anchor="middle">10ms</text>
<path d="M907.8,110.6 H916.8 M907.8,147.9 H916.8 M907.8,185.2 H916.8 M907.8,222.4 H916.8 M907.8,259.7 H916.8 M907.8,297.0 H916.8 M907.8,334.3 H916.8 M916.8,334.3 V339.90000000000003 M991.7,334.3 V339.90000000000003 M1066.6,334.3 V339.90000000000003 M1141.5,334.3 V339.90000000000003 M1216.4,334.3 V339.90000000000003 M1291.3,334.3 V339.90000000000003 M1366.2,334.3 V339.90000000000003 M1441.1,334.3 V339.90000000000003 M1516.0,334.3 V339.90000000000003 M1590.9,334.3 V339.90000000000003 M1665.8,334.3 V339.90000000000003 " stroke="#007f00" stroke-width="3" fill="none"/>
<text class="t" font-size="20.5" fill="#00ff00" transform="translate(873.2,222.6) rotate(-90) scale(0.965,1)" text-anchor="middle">V(vout)</text>
<path d="M983.5,502.6 V823.4 M1042.5,502.6 V823.4 M1102.5,502.6 V823.4 M1161.5,502.6 V823.4 M1221.5,502.6 V823.4 M1280.5,502.6 V823.4 M1339.5,502.6 V823.4 M1399.5,502.6 V823.4 M1458.5,502.6 V823.4 M1518.5,502.6 V823.4 M1577.5,502.6 V823.4 M924.6,556.5 H1624.6 M924.6,609.5 H1624.6 M924.6,663.5 H1624.6 M924.6,716.5 H1624.6 M924.6,769.5 H1624.6 " stroke="#666" stroke-width="1.1" stroke-dasharray="3 3" fill="none"/>
<clipPath id="c1"><rect x="924.6" y="501.0" width="699.9999999999999" height="320.79999999999995"/></clipPath>
<rect x="924.6" y="502.6" width="699.9999999999999" height="320.79999999999995" fill="none" stroke="#007f00" stroke-width="3.2"/>
<g clip-path="url(#c1)">
<polyline points="984.6,799.1 988.6,791.3 995.6,783.5 1006.8,773.0 1023.8,760.6 1050.2,748.5 1091.0,738.1 1153.7,737.8 1248.4,762.0 1384.7,788.2 1565.0,513.4" fill="none" stroke="#0033ff" stroke-width="3.3" stroke-linejoin="round"/>
<g fill="#0033ff"><circle cx="984.6" cy="799.1" r="8.9"/><circle cx="988.6" cy="791.3" r="8.9"/><circle cx="995.6" cy="783.5" r="8.9"/><circle cx="1006.8" cy="773.0" r="8.9"/><circle cx="1023.8" cy="760.6" r="8.9"/><circle cx="1050.2" cy="748.5" r="8.9"/><circle cx="1091.0" cy="738.1" r="8.9"/><circle cx="1153.7" cy="737.8" r="8.9"/><circle cx="1248.4" cy="762.0" r="8.9"/><circle cx="1384.7" cy="788.2" r="8.9"/><circle cx="1565.0" cy="513.4" r="8.9"/></g></g>
<g clip-path="url(#c1)">
<polyline points="984.6,808.0 988.6,804.0 995.6,799.0 1006.8,792.0 1023.8,783.5 1050.2,771.7 1091.0,757.4 1153.7,736.9 1248.4,703.4 1384.7,642.7 1565.0,508.6" fill="none" stroke="#ff3f00" stroke-width="3.3" stroke-linejoin="round"/>
<g fill="#ff3f00"><circle cx="984.6" cy="808.0" r="8.9"/><circle cx="988.6" cy="804.0" r="8.9"/><circle cx="995.6" cy="799.0" r="8.9"/><circle cx="1006.8" cy="792.0" r="8.9"/><circle cx="1023.8" cy="783.5" r="8.9"/><circle cx="1050.2" cy="771.7" r="8.9"/><circle cx="1091.0" cy="757.4" r="8.9"/><circle cx="1153.7" cy="736.9" r="8.9"/><circle cx="1248.4" cy="703.4" r="8.9"/><circle cx="1384.7" cy="642.7" r="8.9"/><circle cx="1565.0" cy="508.6" r="8.9"/></g></g>
<g clip-path="url(#c1)">
<polyline points="984.6,816.5 988.6,815.4 995.6,814.2 1006.8,812.8 1023.8,811.5 1050.2,810.2 1091.0,808.9 1153.7,809.3 1248.4,808.6 1384.7,813.1 1565.0,813.7" fill="none" stroke="#007f00" stroke-width="3.3" stroke-linejoin="round"/>
<g fill="#007f00"><circle cx="984.6" cy="816.5" r="8.9"/><circle cx="988.6" cy="815.4" r="8.9"/><circle cx="995.6" cy="814.2" r="8.9"/><circle cx="1006.8" cy="812.8" r="8.9"/><circle cx="1023.8" cy="811.5" r="8.9"/><circle cx="1050.2" cy="810.2" r="8.9"/><circle cx="1091.0" cy="808.9" r="8.9"/><circle cx="1153.7" cy="809.3" r="8.9"/><circle cx="1248.4" cy="808.6" r="8.9"/><circle cx="1384.7" cy="813.1" r="8.9"/><circle cx="1565.0" cy="813.7" r="8.9"/></g></g>
<g clip-path="url(#c1)">
<polyline points="984.6,819.6 988.6,819.2 995.6,818.4 1006.8,817.4 1023.8,816.5 1050.2,814.8 1091.0,810.6 1153.7,807.2 1248.4,802.6 1384.7,797.2 1565.0,791.5" fill="none" stroke="#00ff00" stroke-width="3.3" stroke-linejoin="round"/>
<g fill="#00ff00"><circle cx="984.6" cy="819.6" r="8.9"/><circle cx="988.6" cy="819.2" r="8.9"/><circle cx="995.6" cy="818.4" r="8.9"/><circle cx="1006.8" cy="817.4" r="8.9"/><circle cx="1023.8" cy="816.5" r="8.9"/><circle cx="1050.2" cy="814.8" r="8.9"/><circle cx="1091.0" cy="810.6" r="8.9"/><circle cx="1153.7" cy="807.2" r="8.9"/><circle cx="1248.4" cy="802.6" r="8.9"/><circle cx="1384.7" cy="797.2" r="8.9"/><circle cx="1565.0" cy="791.5" r="8.9"/></g></g>
<text class="t" font-size="16" fill="#007f00" transform="translate(914.6,508.9) scale(0.94,1)" text-anchor="end">60m</text>
<text class="t" font-size="16" fill="#007f00" transform="translate(914.6,562.4) scale(0.94,1)" text-anchor="end">50m</text>
<text class="t" font-size="16" fill="#007f00" transform="translate(914.6,615.8) scale(0.94,1)" text-anchor="end">40m</text>
<text class="t" font-size="16" fill="#007f00" transform="translate(914.6,669.3) scale(0.94,1)" text-anchor="end">30m</text>
<text class="t" font-size="16" fill="#007f00" transform="translate(914.6,722.8) scale(0.94,1)" text-anchor="end">20m</text>
<text class="t" font-size="16" fill="#007f00" transform="translate(914.6,776.2) scale(0.94,1)" text-anchor="end">10m</text>
<text class="t" font-size="16" fill="#007f00" transform="translate(914.6,829.7) scale(0.94,1)" text-anchor="end">0m</text>
<path d="M915.6,502.6 H924.6 M915.6,556.1 H924.6 M915.6,609.5 H924.6 M915.6,663.0 H924.6 M915.6,716.5 H924.6 M915.6,770.0 H924.6 M915.6,823.4 H924.6 " stroke="#007f00" stroke-width="3" fill="none"/>
<text class="t" font-size="20.5" fill="#00ff00" transform="translate(874.2,543.0) rotate(-90) scale(0.965,1)" text-anchor="middle">H5</text>
<text class="t" font-size="20.5" fill="#007f00" transform="translate(874.2,623.0) rotate(-90) scale(0.965,1)" text-anchor="middle">H4</text>
<text class="t" font-size="20.5" fill="#ff3f00" transform="translate(874.2,703.0) rotate(-90) scale(0.965,1)" text-anchor="middle">H3</text>
<text class="t" font-size="20.5" fill="#0033ff" transform="translate(874.2,782.0) rotate(-90) scale(0.965,1)" text-anchor="middle">H2</text>
<path d="M983.5,841.5 V1159.7 M1042.5,841.5 V1159.7 M1102.5,841.5 V1159.7 M1161.5,841.5 V1159.7 M1221.5,841.5 V1159.7 M1280.5,841.5 V1159.7 M1339.5,841.5 V1159.7 M1399.5,841.5 V1159.7 M1458.5,841.5 V1159.7 M1518.5,841.5 V1159.7 M1577.5,841.5 V1159.7 M924.6,876.5 H1624.6 M924.6,912.5 H1624.6 M924.6,947.5 H1624.6 M924.6,982.5 H1624.6 M924.6,1018.5 H1624.6 M924.6,1053.5 H1624.6 M924.6,1089.5 H1624.6 M924.6,1124.5 H1624.6 " stroke="#666" stroke-width="1.1" stroke-dasharray="3 3" fill="none"/>
<clipPath id="c2"><rect x="924.6" y="843.0" width="699.9999999999999" height="315.20000000000005"/></clipPath>
<rect x="924.6" y="841.5" width="699.9999999999999" height="318.20000000000005" fill="none" stroke="#007f00" stroke-width="3.2"/>
<g clip-path="url(#c2)">
<polyline points="984.6,1154.8 988.6,1144.0 995.6,1132.2 1006.8,1116.1 1023.8,1096.0 1050.2,1070.9 1091.0,1039.5 1153.7,1001.7 1248.4,955.7 1384.7,901.2 1565.0,842.7" fill="none" stroke="#007f00" stroke-width="3.3" stroke-linejoin="round"/>
<g fill="#007f00"><circle cx="984.6" cy="1154.8" r="8.9"/><circle cx="988.6" cy="1144.0" r="8.9"/><circle cx="995.6" cy="1132.2" r="8.9"/><circle cx="1006.8" cy="1116.1" r="8.9"/><circle cx="1023.8" cy="1096.0" r="8.9"/><circle cx="1050.2" cy="1070.9" r="8.9"/><circle cx="1091.0" cy="1039.5" r="8.9"/><circle cx="1153.7" cy="1001.7" r="8.9"/><circle cx="1248.4" cy="955.7" r="8.9"/><circle cx="1384.7" cy="901.2" r="8.9"/><circle cx="1565.0" cy="842.7" r="8.9"/></g></g>
<g clip-path="url(#c2)">
<polyline points="984.6,1068.6 988.6,1054.5 995.6,1046.0 1006.8,1040.4 1023.8,1039.8 1050.2,1043.8 1091.0,1053.7 1153.7,1068.6 1248.4,1086.4 1384.7,1070.0 1565.0,906.8" fill="none" stroke="#ff00ff" stroke-width="3.3" stroke-linejoin="round"/>
<g fill="#ff00ff"><circle cx="984.6" cy="1068.6" r="8.9"/><circle cx="988.6" cy="1054.5" r="8.9"/><circle cx="995.6" cy="1046.0" r="8.9"/><circle cx="1006.8" cy="1040.4" r="8.9"/><circle cx="1023.8" cy="1039.8" r="8.9"/><circle cx="1050.2" cy="1043.8" r="8.9"/><circle cx="1091.0" cy="1053.7" r="8.9"/><circle cx="1153.7" cy="1068.6" r="8.9"/><circle cx="1248.4" cy="1086.4" r="8.9"/><circle cx="1384.7" cy="1070.0" r="8.9"/><circle cx="1565.0" cy="906.8" r="8.9"/></g></g>
<text class="t" font-size="16" fill="#007f00" transform="translate(914.2,847.8) scale(1.0,1)" text-anchor="end">2.0V</text>
<text class="t" font-size="16" fill="#007f00" transform="translate(914.2,883.2) scale(1.0,1)" text-anchor="end">1.8V</text>
<text class="t" font-size="16" fill="#007f00" transform="translate(914.2,918.5) scale(1.0,1)" text-anchor="end">1.6V</text>
<text class="t" font-size="16" fill="#007f00" transform="translate(914.2,953.9) scale(1.0,1)" text-anchor="end">1.4V</text>
<text class="t" font-size="16" fill="#007f00" transform="translate(914.2,989.2) scale(1.0,1)" text-anchor="end">1.2V</text>
<text class="t" font-size="16" fill="#007f00" transform="translate(914.2,1024.6) scale(1.0,1)" text-anchor="end">1.0V</text>
<text class="t" font-size="16" fill="#007f00" transform="translate(914.2,1060.0) scale(1.0,1)" text-anchor="end">0.8V</text>
<text class="t" font-size="16" fill="#007f00" transform="translate(914.2,1095.3) scale(1.0,1)" text-anchor="end">0.6V</text>
<text class="t" font-size="16" fill="#007f00" transform="translate(914.2,1130.7) scale(1.0,1)" text-anchor="end">0.4V</text>
<text class="t" font-size="16" fill="#007f00" transform="translate(914.2,1166.0) scale(1.0,1)" text-anchor="end">0.2V</text>
<text class="t" font-size="16" fill="#007f00" transform="translate(1633.6,848.4) scale(1.0,1)">5.0</text>
<text class="t" font-size="16" fill="#007f00" transform="translate(1633.6,880.2) scale(1.0,1)">4.6</text>
<text class="t" font-size="16" fill="#007f00" transform="translate(1633.6,912.0) scale(1.0,1)">4.2</text>
<text class="t" font-size="16" fill="#007f00" transform="translate(1633.6,943.9) scale(1.0,1)">3.8</text>
<text class="t" font-size="16" fill="#007f00" transform="translate(1633.6,975.7) scale(1.0,1)">3.4</text>
<text class="t" font-size="16" fill="#007f00" transform="translate(1633.6,1007.5) scale(1.0,1)">3.0</text>
<text class="t" font-size="16" fill="#007f00" transform="translate(1633.6,1039.3) scale(1.0,1)">2.6</text>
<text class="t" font-size="16" fill="#007f00" transform="translate(1633.6,1071.1) scale(1.0,1)">2.2</text>
<text class="t" font-size="16" fill="#007f00" transform="translate(1633.6,1103.0) scale(1.0,1)">1.8</text>
<text class="t" font-size="16" fill="#007f00" transform="translate(1633.6,1134.8) scale(1.0,1)">1.4</text>
<text class="t" font-size="16" fill="#007f00" transform="translate(1633.6,1166.6) scale(1.0,1)">1.0</text>
<text class="t" font-size="16" fill="#007f00" transform="translate(924.1,1181.6) scale(1.0,1)" text-anchor="middle">-0.09</text>
<text class="t" font-size="16" fill="#007f00" transform="translate(983.5,1181.6) scale(1.0,1)" text-anchor="middle">0.01</text>
<text class="t" font-size="16" fill="#007f00" transform="translate(1042.9,1181.6) scale(1.0,1)" text-anchor="middle">0.11</text>
<text class="t" font-size="16" fill="#007f00" transform="translate(1102.3,1181.6) scale(1.0,1)" text-anchor="middle">0.21</text>
<text class="t" font-size="16" fill="#007f00" transform="translate(1161.7,1181.6) scale(1.0,1)" text-anchor="middle">0.31</text>
<text class="t" font-size="16" fill="#007f00" transform="translate(1221.1,1181.6) scale(1.0,1)" text-anchor="middle">0.41</text>
<text class="t" font-size="16" fill="#007f00" transform="translate(1280.5,1181.6) scale(1.0,1)" text-anchor="middle">0.51</text>
<text class="t" font-size="16" fill="#007f00" transform="translate(1339.9,1181.6) scale(1.0,1)" text-anchor="middle">0.61</text>
<text class="t" font-size="16" fill="#007f00" transform="translate(1399.3,1181.6) scale(1.0,1)" text-anchor="middle">0.71</text>
<text class="t" font-size="16" fill="#007f00" transform="translate(1458.7,1181.6) scale(1.0,1)" text-anchor="middle">0.81</text>
<text class="t" font-size="16" fill="#007f00" transform="translate(1518.1,1181.6) scale(1.0,1)" text-anchor="middle">0.91</text>
<text class="t" font-size="16" fill="#007f00" transform="translate(1577.5,1181.6) scale(1.0,1)" text-anchor="middle">1.01</text>
<path d="M915.6,841.5 H924.6 M915.6,876.9 H924.6 M915.6,912.2 H924.6 M915.6,947.6 H924.6 M915.6,982.9 H924.6 M915.6,1018.3 H924.6 M915.6,1053.7 H924.6 M915.6,1089.0 H924.6 M915.6,1124.4 H924.6 M915.6,1159.7 H924.6 M1624.6,841.5 H1632.6 M1624.6,873.3 H1632.6 M1624.6,905.1 H1632.6 M1624.6,937.0 H1632.6 M1624.6,968.8 H1632.6 M1624.6,1000.6 H1632.6 M1624.6,1032.4 H1632.6 M1624.6,1064.2 H1632.6 M1624.6,1096.1 H1632.6 M1624.6,1127.9 H1632.6 M1624.6,1159.7 H1632.6 M924.1,1159.7 V1165.3 M983.5,1159.7 V1165.3 M1042.9,1159.7 V1165.3 M1102.3,1159.7 V1165.3 M1161.7,1159.7 V1165.3 M1221.1,1159.7 V1165.3 M1280.5,1159.7 V1165.3 M1339.9,1159.7 V1165.3 M1399.3,1159.7 V1165.3 M1458.7,1159.7 V1165.3 M1518.1,1159.7 V1165.3 M1577.5,1159.7 V1165.3 " stroke="#007f00" stroke-width="3" fill="none"/>
<text class="t" font-size="20.5" fill="#007f00" transform="translate(873.2,988.0) rotate(-90) scale(0.965,1)" text-anchor="middle">RMSout*1V</text>
<text class="t" font-size="20.5" fill="#ff00ff" transform="translate(1665.0,988.8) rotate(90) scale(0.965,1)" text-anchor="middle">THD</text>
<text class="t" font-size="19" fill="#007f00" x="1220.0" y="1201.3" textLength="106.4" lengthAdjust="spacingAndGlyphs">RMSout^2/4</text>
</svg>
</body></html>
